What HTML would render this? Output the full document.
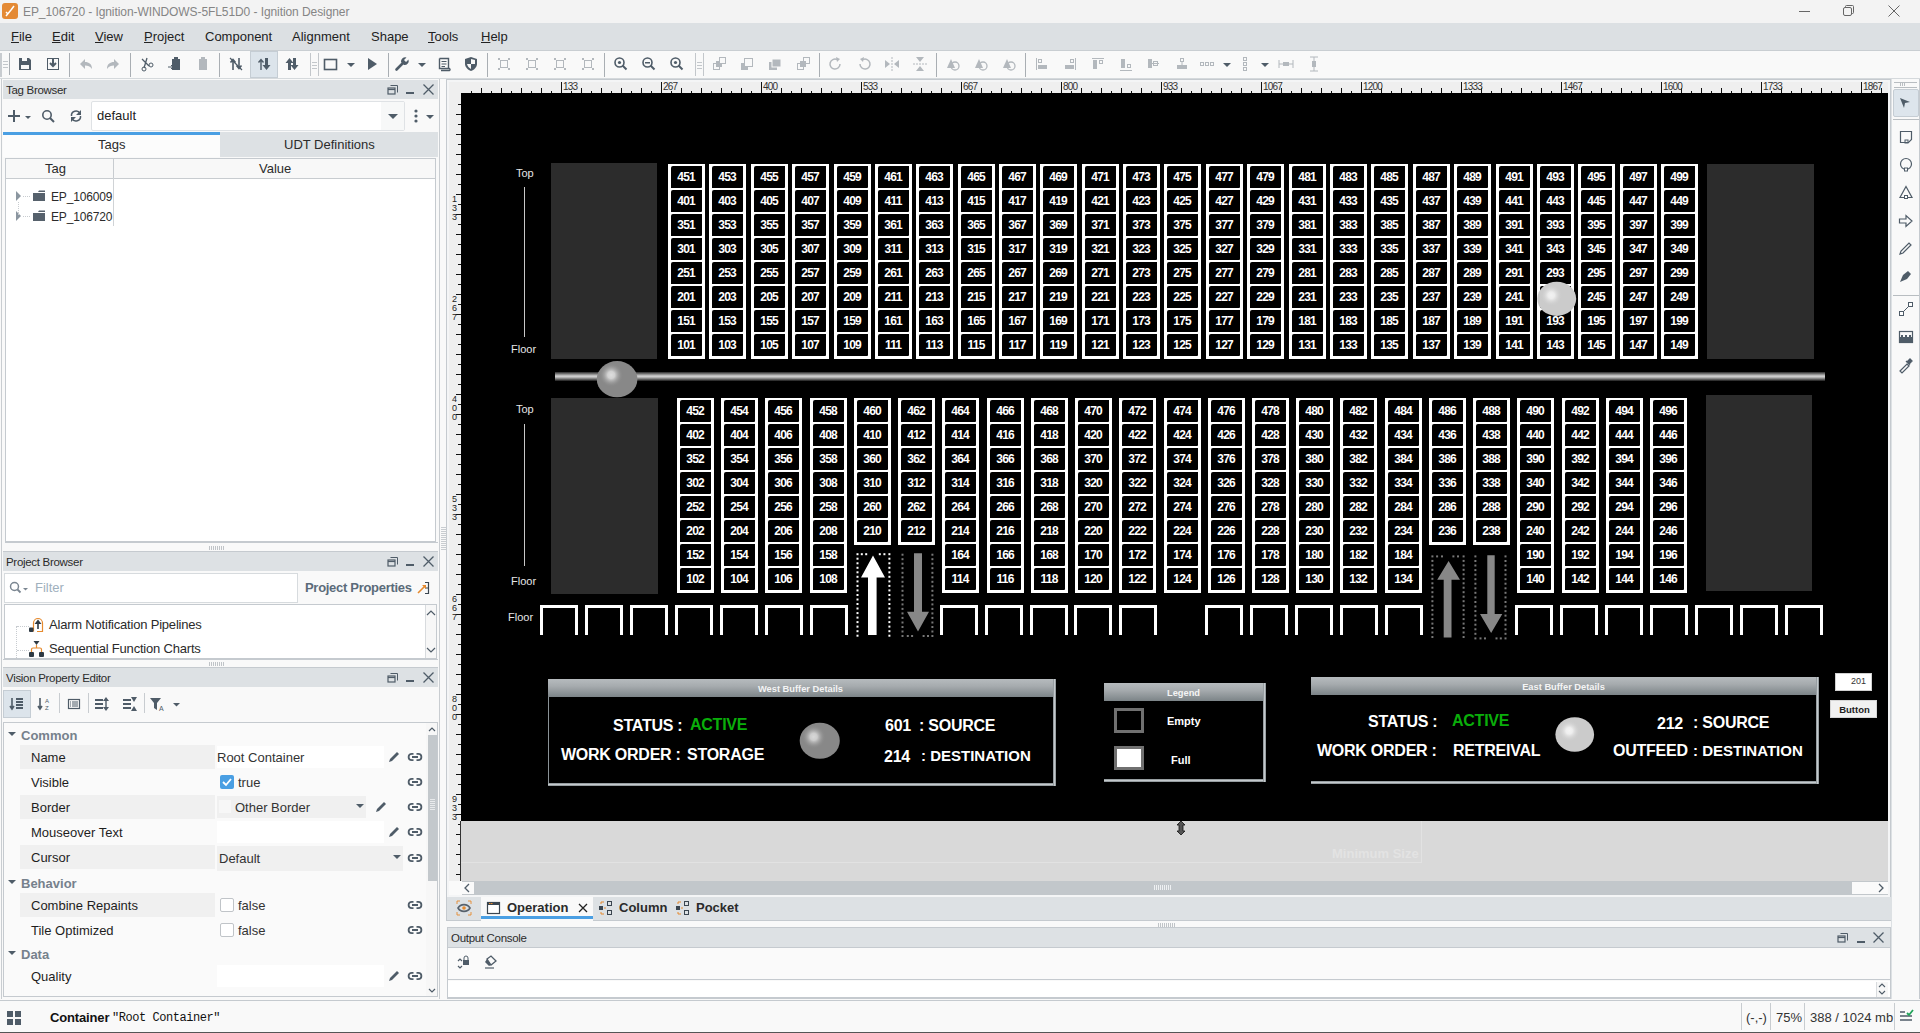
<!DOCTYPE html><html><head><meta charset="utf-8"><style>
*{box-sizing:border-box}
html,body{margin:0;padding:0}
body{width:1920px;height:1033px;overflow:hidden;position:relative;background:#f9f9f9;font-family:"Liberation Sans",sans-serif;color:#1e1e1e}
.a{position:absolute}
.t{white-space:nowrap;line-height:1}
svg{position:absolute;overflow:visible}
</style></head><body>
<div class="a" style="left:0px;top:0px;width:1920px;height:23px;background:#f3f3f3"></div>
<div class="a" style="left:2px;top:3px;width:16px;height:16px;background:#e48a35;border-radius:3px"></div>
<svg style="left:2px;top:3px" width="16" height="16"><path d="M4 13 L9 7 M9 7 L12 3 M6 11 L4 9" stroke="#fff" stroke-width="1.5" fill="none"/></svg>
<div class="a t" style="left:23px;top:6px;font-size:12px;color:#858585;letter-spacing:-0.08px">EP_106720 - Ignition-WINDOWS-5FL51D0 - Ignition Designer</div>
<div class="a" style="left:1799px;top:11px;width:11px;height:1px;background:#666"></div>
<svg style="left:1843px;top:5px" width="12" height="12"><rect x="0.5" y="2.5" width="8" height="8" rx="1.5" fill="none" stroke="#666"/><path d="M2.5 2.5 V1.5 Q2.5 0.5 3.5 0.5 H9.5 Q10.5 0.5 10.5 1.5 V7.5 Q10.5 8.5 9.5 8.5 H8.5" fill="none" stroke="#666"/></svg>
<svg style="left:1888px;top:5px" width="12" height="12"><path d="M0.5 0.5 L11.5 11.5 M11.5 0.5 L0.5 11.5" stroke="#666" stroke-width="1"/></svg>
<div class="a" style="left:0px;top:23px;width:1920px;height:27px;background:#dce0e3"></div>
<div class="a t" style="left:11px;top:30px;font-size:13px;color:#222"><u>F</u>ile</div>
<div class="a t" style="left:52px;top:30px;font-size:13px;color:#222"><u>E</u>dit</div>
<div class="a t" style="left:95px;top:30px;font-size:13px;color:#222"><u>V</u>iew</div>
<div class="a t" style="left:144px;top:30px;font-size:13px;color:#222"><u>P</u>roject</div>
<div class="a t" style="left:205px;top:30px;font-size:13px;color:#222">Component</div>
<div class="a t" style="left:292px;top:30px;font-size:13px;color:#222">Alignment</div>
<div class="a t" style="left:371px;top:30px;font-size:13px;color:#222">Shape</div>
<div class="a t" style="left:428px;top:30px;font-size:13px;color:#222"><u>T</u>ools</div>
<div class="a t" style="left:481px;top:30px;font-size:13px;color:#222"><u>H</u>elp</div>
<div class="a" style="left:0px;top:50px;width:1920px;height:1px;background:#c9ced2"></div>
<div class="a" style="left:0px;top:51px;width:1920px;height:28px;background:#f9f9f9"></div>
<div class="a" style="left:0px;top:78px;width:1920px;height:1px;background:#d5d9dc"></div>
<div class="a" style="left:0px;top:53px;width:2px;height:24px;background:#c8ccd0"></div>
<div class="a" style="left:3px;top:61px;width:5px;height:1px;background:#c3c7cb"></div>
<div class="a" style="left:3px;top:64px;width:5px;height:1px;background:#c3c7cb"></div>
<div class="a" style="left:3px;top:67px;width:5px;height:1px;background:#c3c7cb"></div>
<div class="a" style="left:9px;top:53px;width:1px;height:22px;background:#a9aeb3"></div>
<svg style="left:17px;top:56px" width="16" height="16"><path d="M2 2 H12 L14 4 V14 H2Z" fill="#4f5c68"/><rect x="5" y="2" width="5" height="3" fill="#f9f9f9"/><rect x="4" y="9" width="8" height="4" fill="#f9f9f9"/></svg>
<svg style="left:45px;top:56px" width="16" height="16"><rect x="2.5" y="2.5" width="11" height="11" fill="none" stroke="#4f5c68"/><path d="M8 3 V9 M5 7 L8 10 L11 7" stroke="#4f5c68" stroke-width="2" fill="none"/></svg>
<div class="a" style="left:69px;top:53px;width:1px;height:24px;background:#a9aeb3"></div>
<svg style="left:78px;top:56px" width="16" height="16"><path d="M2 8 L7 3 V6 C11 6 14 8 14 13 C12 10 10 9.5 7 9.5 V13Z" fill="#b3b8bd"/></svg>
<svg style="left:105px;top:56px" width="16" height="16"><path d="M14 8 L9 3 V6 C5 6 2 8 2 13 C4 10 6 9.5 9 9.5 V13Z" fill="#b3b8bd"/></svg>
<div class="a" style="left:130px;top:53px;width:1px;height:24px;background:#a9aeb3"></div>
<svg style="left:139px;top:56px" width="16" height="16"><path d="M3 3 L10 10 M8 2 L5 12" stroke="#4f5c68" stroke-width="1.3"/><circle cx="12" cy="9" r="2" fill="none" stroke="#4f5c68"/><circle cx="5" cy="13" r="2" fill="none" stroke="#4f5c68"/></svg>
<svg style="left:167px;top:56px" width="16" height="16"><path d="M5 3 H13 V14 H5Z M7 1 H11 V4 H7Z" fill="#4f5c68"/><path d="M1 11 H6 M4 9 L6 11 L4 13" stroke="#4f5c68" fill="none"/></svg>
<svg style="left:195px;top:56px" width="16" height="16"><path d="M4 3 H12 V14 H4Z M6 1 H10 V4 H6Z" fill="#b3b8bd"/></svg>
<div class="a" style="left:219px;top:53px;width:1px;height:24px;background:#a9aeb3"></div>
<svg style="left:228px;top:56px" width="16" height="16"><path d="M5 14 V4 M2.5 6.5 L5 3.5 L7.5 6.5 M11 2 V12 M8.5 9.5 L11 12.5 L13.5 9.5" fill="none" stroke="#4f5c68" stroke-width="1.6"/><path d="M2 2 L14 14" stroke="#4f5c68" stroke-width="1.3"/></svg>
<div class="a" style="left:250px;top:51px;width:28px;height:27px;background:#dce4eb;border:1px solid #c5cdd4"></div>
<svg style="left:256px;top:56px" width="16" height="16"><path d="M5 14 V4 M2.5 6.5 L5 3.5 L7.5 6.5" fill="none" stroke="#4f5c68" stroke-width="1.4"/><path d="M9 2 H12 V9 H14.5 L10.5 14 L6.5 9 H9Z" fill="#4f5c68"/></svg>
<svg style="left:284px;top:56px" width="16" height="16"><path d="M4 14 H7 V7 H9.5 L5.5 2 L1.5 7 H4Z" fill="#4f5c68"/><path d="M9 2 H12 V9 H14.5 L10.5 14 L6.5 9 H9Z" fill="#4f5c68"/></svg>
<div class="a" style="left:310px;top:53px;width:1px;height:23px;background:#c3c7cb"></div>
<div class="a" style="left:318px;top:53px;width:1px;height:23px;background:#c3c7cb"></div>
<div class="a" style="left:312px;top:62px;width:5px;height:1px;background:#c3c7cb"></div>
<div class="a" style="left:312px;top:65px;width:5px;height:1px;background:#c3c7cb"></div>
<div class="a" style="left:312px;top:68px;width:5px;height:1px;background:#c3c7cb"></div>
<svg style="left:323px;top:56px" width="16" height="16"><rect x="1.5" y="3.5" width="12" height="10" fill="none" stroke="#4f5c68" stroke-width="1.6"/></svg>
<svg style="left:343px;top:57px" width="16" height="16"><path d="M4 6 H12 L8 10Z" fill="#4f5c68"/></svg>
<svg style="left:364px;top:56px" width="16" height="16"><path d="M4 2 L13 8 L4 14Z" fill="#4f5c68"/></svg>
<div class="a" style="left:388px;top:53px;width:1px;height:24px;background:#a9aeb3"></div>
<svg style="left:394px;top:56px" width="16" height="16"><path d="M2.5 13.5 L8.5 7.5" stroke="#4f5c68" stroke-width="2.6" stroke-linecap="round"/><path d="M7 6 A4.2 4.2 0 0 1 12.5 1.5 L10 4 L12 6 L14.5 3.5 A4.2 4.2 0 0 1 10 9Z" fill="#4f5c68"/></svg>
<svg style="left:414px;top:57px" width="16" height="16"><path d="M4 6 H12 L8 10Z" fill="#4f5c68"/></svg>
<svg style="left:436px;top:56px" width="16" height="16"><path d="M3.5 2.5 H12.5 V12.5 M3.5 2.5 V12.5 H13.5 A1.2 1.2 0 0 1 13.5 14.5 H5" fill="none" stroke="#4f5c68" stroke-width="1.4"/><path d="M5.5 5.5 H10.5 M5.5 8 H10.5 M5.5 10.5 H9" stroke="#4f5c68" stroke-width="1"/></svg>
<svg style="left:463px;top:56px" width="16" height="16"><path d="M8 1 L14 3 V8 C14 11 11 14 8 15 C5 14 2 11 2 8 V3Z" fill="#4f5c68"/><path d="M8 3 V8 H12 V4Z M4 8 H8 V13 C6 12 4.5 10 4 8Z" fill="#f9f9f9"/></svg>
<div class="a" style="left:487px;top:53px;width:1px;height:24px;background:#a9aeb3"></div>
<svg style="left:496px;top:56px" width="16" height="16"><path d="M2 2h2v2h-2zM12 2h2v2h-2zM2 12h2v2h-2zM12 12h2v2h-2z" fill="#b3b8bd"/><rect x="4.5" y="4.5" width="7" height="7" fill="none" stroke="#b3b8bd"/></svg>
<svg style="left:524px;top:56px" width="16" height="16"><path d="M2 2h2v2h-2zM12 2h2v2h-2zM2 12h2v2h-2zM12 12h2v2h-2z" fill="#b3b8bd"/><rect x="4.5" y="4.5" width="7" height="7" fill="none" stroke="#b3b8bd"/></svg>
<svg style="left:552px;top:56px" width="16" height="16"><path d="M2 2h2v2h-2zM12 2h2v2h-2zM2 12h2v2h-2zM12 12h2v2h-2z" fill="#b3b8bd"/><rect x="4.5" y="4.5" width="7" height="7" fill="none" stroke="#b3b8bd"/></svg>
<svg style="left:580px;top:56px" width="16" height="16"><path d="M2 2h2v2h-2zM12 2h2v2h-2zM2 12h2v2h-2zM12 12h2v2h-2z" fill="#b3b8bd"/><rect x="4.5" y="4.5" width="7" height="7" fill="none" stroke="#b3b8bd"/></svg>
<div class="a" style="left:604px;top:53px;width:1px;height:24px;background:#a9aeb3"></div>
<svg style="left:613px;top:56px" width="16" height="16"><circle cx="6.5" cy="6.5" r="4.5" fill="none" stroke="#4f5c68" stroke-width="1.6"/><path d="M9.5 9.5 L13.5 13.5" stroke="#4f5c68" stroke-width="2"/><circle cx="6.5" cy="6.5" r="1.6" fill="#4f5c68"/></svg>
<svg style="left:641px;top:56px" width="16" height="16"><circle cx="6.5" cy="6.5" r="4.5" fill="none" stroke="#4f5c68" stroke-width="1.6"/><path d="M9.5 9.5 L13.5 13.5" stroke="#4f5c68" stroke-width="2"/><rect x="4" y="6" width="5" height="1.5" fill="#4f5c68"/></svg>
<svg style="left:669px;top:56px" width="16" height="16"><circle cx="6.5" cy="6.5" r="4.5" fill="none" stroke="#4f5c68" stroke-width="1.6"/><path d="M9.5 9.5 L13.5 13.5" stroke="#4f5c68" stroke-width="2"/><circle cx="6.5" cy="6.5" r="1.6" fill="#4f5c68"/></svg>
<div class="a" style="left:695px;top:53px;width:1px;height:23px;background:#c3c7cb"></div>
<div class="a" style="left:703px;top:53px;width:1px;height:23px;background:#c3c7cb"></div>
<div class="a" style="left:697px;top:62px;width:5px;height:1px;background:#c3c7cb"></div>
<div class="a" style="left:697px;top:65px;width:5px;height:1px;background:#c3c7cb"></div>
<div class="a" style="left:697px;top:68px;width:5px;height:1px;background:#c3c7cb"></div>
<svg style="left:711px;top:56px" width="16" height="16"><rect x="2.5" y="7.5" width="6" height="6" fill="none" stroke="#b3b8bd"/><rect x="5" y="5" width="6" height="6" fill="#b3b8bd"/><rect x="8.5" y="1.5" width="6" height="6" fill="#f9f9f9" stroke="#b3b8bd"/></svg>
<svg style="left:739px;top:56px" width="16" height="16"><rect x="2" y="7" width="7" height="7" fill="#b3b8bd"/><rect x="5.5" y="2.5" width="8" height="8" fill="#f9f9f9" stroke="#b3b8bd"/></svg>
<svg style="left:767px;top:56px" width="16" height="16"><rect x="2" y="6" width="8" height="8" fill="#b3b8bd"/><rect x="5" y="3" width="9" height="8" fill="#b3b8bd" stroke="#f9f9f9"/></svg>
<svg style="left:795px;top:56px" width="16" height="16"><rect x="2.5" y="7.5" width="6" height="6" fill="none" stroke="#b3b8bd"/><rect x="5" y="5" width="6" height="6" fill="#b3b8bd"/><rect x="8.5" y="1.5" width="6" height="6" fill="none" stroke="#b3b8bd"/></svg>
<div class="a" style="left:819px;top:53px;width:1px;height:24px;background:#a9aeb3"></div>
<svg style="left:828px;top:56px" width="16" height="16"><path d="M12 8 A5 5 0 1 1 9 3.5" stroke="#b3b8bd" stroke-width="1.5" fill="none"/><path d="M8 1 L12 3 L9 6Z" fill="#b3b8bd"/></svg>
<svg style="left:856px;top:56px" width="16" height="16"><path d="M4 8 A5 5 0 1 0 7 3.5" stroke="#b3b8bd" stroke-width="1.5" fill="none"/><path d="M8 1 L4 3 L7 6Z" fill="#b3b8bd"/></svg>
<svg style="left:884px;top:56px" width="16" height="16"><path d="M8 1 V15" stroke="#b3b8bd" stroke-dasharray="2 1"/><path d="M1 4 L6 8 L1 12Z M15 4 L10 8 L15 12Z" fill="#b3b8bd"/></svg>
<svg style="left:912px;top:56px" width="16" height="16"><path d="M1 8 H15" stroke="#b3b8bd" stroke-dasharray="2 1"/><path d="M4 1 L8 6 L12 1Z M4 15 L8 10 L12 15Z" fill="#b3b8bd"/></svg>
<div class="a" style="left:936px;top:53px;width:1px;height:24px;background:#a9aeb3"></div>
<svg style="left:945px;top:56px" width="16" height="16"><path d="M2 12 L6 3 L10 12Z" fill="#b3b8bd"/><circle cx="10" cy="10" r="4" fill="none" stroke="#b3b8bd" stroke-width="1.3"/></svg>
<svg style="left:973px;top:56px" width="16" height="16"><path d="M2 12 L6 3 L10 12Z" fill="#b3b8bd"/><circle cx="10" cy="10" r="4" fill="none" stroke="#b3b8bd" stroke-width="1.3"/></svg>
<svg style="left:1001px;top:56px" width="16" height="16"><path d="M2 12 L6 3 L10 12Z" fill="#b3b8bd"/><circle cx="10" cy="10" r="4" fill="none" stroke="#b3b8bd" stroke-width="1.3"/></svg>
<div class="a" style="left:1025px;top:53px;width:1px;height:24px;background:#a9aeb3"></div>
<svg style="left:1034px;top:56px" width="16" height="16"><rect x="2" y="2" width="1" height="12" fill="#b3b8bd"/><rect x="4.5" y="3.5" width="3" height="3" fill="none" stroke="#b3b8bd"/><rect x="4" y="9" width="9" height="4" fill="#b3b8bd"/></svg>
<svg style="left:1062px;top:56px" width="16" height="16"><rect x="13" y="2" width="1" height="12" fill="#b3b8bd"/><rect x="8.5" y="3.5" width="3" height="3" fill="none" stroke="#b3b8bd"/><rect x="3" y="9" width="9" height="4" fill="#b3b8bd"/></svg>
<svg style="left:1090px;top:56px" width="16" height="16"><rect x="2" y="2" width="12" height="1" fill="#b3b8bd"/><rect x="3" y="4" width="4" height="9" fill="#b3b8bd"/><rect x="9.5" y="4.5" width="3" height="3" fill="none" stroke="#b3b8bd"/></svg>
<svg style="left:1118px;top:56px" width="16" height="16"><rect x="2" y="14" width="12" height="1" fill="#b3b8bd"/><rect x="3" y="3" width="4" height="9" fill="#b3b8bd"/><rect x="9.5" y="8.5" width="3" height="3" fill="none" stroke="#b3b8bd"/></svg>
<svg style="left:1146px;top:56px" width="16" height="16"><rect x="2" y="3" width="4" height="9" fill="#b3b8bd"/><rect x="7.5" y="5.5" width="4" height="4" fill="none" stroke="#b3b8bd"/><path d="M6 7.5 H13" stroke="#b3b8bd"/></svg>
<svg style="left:1174px;top:56px" width="16" height="16"><rect x="6.5" y="2.5" width="3" height="3" fill="none" stroke="#b3b8bd"/><rect x="3" y="9" width="10" height="4" fill="#b3b8bd"/><path d="M8 5 V9" stroke="#b3b8bd"/></svg>
<svg style="left:1199px;top:56px" width="16" height="16"><rect x="1.5" y="6.5" width="3" height="3" fill="none" stroke="#b3b8bd"/><rect x="6.5" y="6.5" width="3" height="3" fill="none" stroke="#b3b8bd"/><rect x="11.5" y="6.5" width="3" height="3" fill="none" stroke="#b3b8bd"/></svg>
<svg style="left:1219px;top:57px" width="16" height="16"><path d="M4 6 H12 L8 10Z" fill="#4f5c68"/></svg>
<svg style="left:1237px;top:56px" width="16" height="16"><rect x="6.5" y="1.5" width="3" height="3" fill="none" stroke="#b3b8bd"/><rect x="6.5" y="6.5" width="3" height="3" fill="none" stroke="#b3b8bd"/><rect x="6.5" y="11.5" width="3" height="3" fill="none" stroke="#b3b8bd"/></svg>
<svg style="left:1257px;top:57px" width="16" height="16"><path d="M4 6 H12 L8 10Z" fill="#4f5c68"/></svg>
<svg style="left:1278px;top:56px" width="16" height="16"><path d="M1 4 V12 M15 4 V12 M1 8 H15" stroke="#b3b8bd"/><rect x="5" y="6" width="6" height="4" fill="#b3b8bd"/></svg>
<svg style="left:1306px;top:56px" width="16" height="16"><path d="M4 1 H12 M4 15 H12 M8 1 V15" stroke="#b3b8bd"/><rect x="6" y="5" width="4" height="6" fill="#b3b8bd"/></svg>
<div class="a" style="left:1px;top:79px;width:1px;height:920px;background:#c9cdd1"></div>
<div class="a" style="left:439px;top:79px;width:1px;height:920px;background:#c9cdd1"></div>
<div class="a" style="left:3px;top:80px;width:435px;height:19px;background:#dde1e4"></div>
<div class="a t" style="left:6px;top:85px;font-size:11.5px;color:#2b2b2b;letter-spacing:-0.3px">Tag Browser</div>
<svg style="left:387px;top:84px" width="12" height="12"><rect x="1" y="4" width="7" height="6" fill="none" stroke="#4f5c68" stroke-width="1.2"/><path d="M1 5.5 H8" stroke="#4f5c68" stroke-width="1.2"/><path d="M3.5 1.5 H10.5 V8.5" fill="none" stroke="#4f5c68"/></svg>
<div class="a" style="left:406px;top:92px;width:8px;height:2px;background:#4f5c68"></div>
<svg style="left:423px;top:84px" width="11" height="11"><path d="M0.5 0.5 L10.5 10.5 M10.5 0.5 L0.5 10.5" stroke="#4f5c68" stroke-width="1.3"/></svg>
<svg style="left:6px;top:108px" width="16" height="16"><path d="M7 2 H9 V7 H14 V9 H9 V14 H7 V9 H2 V7 H7Z" fill="#4f5c68"/></svg>
<svg style="left:20px;top:109px" width="16" height="16"><path d="M5 7 H11 L8 10Z" fill="#4f5c68"/></svg>
<svg style="left:40px;top:108px" width="16" height="16"><circle cx="7" cy="7" r="4.2" fill="none" stroke="#4f5c68" stroke-width="1.6"/><path d="M10 10 L14 14" stroke="#4f5c68" stroke-width="2"/></svg>
<svg style="left:68px;top:108px" width="16" height="16"><path d="M3.5 8 A4.5 4.5 0 0 1 12 5.5 M12.5 8 A4.5 4.5 0 0 1 4 10.5" fill="none" stroke="#4f5c68" stroke-width="1.5"/><path d="M13 2 V7 H8Z M3 14 V9 H8Z" fill="#4f5c68"/></svg>
<div class="a" style="left:91px;top:101px;width:314px;height:30px;background:#fff;border:1px solid #dfe2e5;border-radius:2px"></div>
<div class="a t" style="left:97px;top:109px;font-size:13px;color:#222">default</div>
<div class="a" style="left:381px;top:102px;width:23px;height:28px;background:#f7f8f8"></div>
<svg style="left:385px;top:108px" width="16" height="16"><path d="M3 6 H13 L8 11Z" fill="#4f5c68"/></svg>
<svg style="left:408px;top:108px" width="16" height="16"><circle cx="8" cy="3" r="1.6" fill="#4f5c68"/><circle cx="8" cy="8" r="1.6" fill="#4f5c68"/><circle cx="8" cy="13" r="1.6" fill="#4f5c68"/></svg>
<svg style="left:422px;top:109px" width="16" height="16"><path d="M4 6 H12 L8 10Z" fill="#4f5c68"/></svg>
<div class="a" style="left:3px;top:132px;width:217px;height:3px;background:#4a9fe3"></div>
<div class="a" style="left:3px;top:135px;width:217px;height:22px;background:#fcfcfc"></div>
<div class="a t" style="left:98px;top:138px;font-size:13px;color:#2b2b2b">Tags</div>
<div class="a" style="left:220px;top:132px;width:218px;height:25px;background:#dde1e4"></div>
<div class="a t" style="left:284px;top:138px;font-size:13px;color:#2b2b2b">UDT Definitions</div>
<div class="a" style="left:5px;top:158px;width:431px;height:384px;background:#fff;border:1px solid #c5cacf"></div>
<div class="a" style="left:6px;top:159px;width:429px;height:20px;background:#f8f8f8;border-bottom:1px solid #c8ccd0"></div>
<div class="a" style="left:113px;top:159px;width:1px;height:20px;background:#c8ccd0"></div>
<div class="a" style="left:113px;top:178px;width:1px;height:48px;background:#d0d3d6"></div>
<div class="a t" style="left:45px;top:162px;font-size:13px;color:#2b2b2b">Tag</div>
<div class="a t" style="left:259px;top:162px;font-size:13px;color:#2b2b2b">Value</div>
<svg style="left:15px;top:191px" width="8" height="10"><path d="M1 0 L6 5 L1 10Z" fill="#8b96a0"/></svg>
<div class="a" style="left:23px;top:196px;width:7px;height:1px;border-top:1px dotted #c8ccd0"></div>
<svg style="left:32px;top:189px" width="14" height="13"><path d="M1 3 H6 L7 1.5 H13 V3 H1Z" fill="#56616c"/><rect x="1" y="4" width="12" height="8" fill="#56616c"/></svg>
<div class="a t" style="left:51px;top:191px;font-size:12px;color:#2b2b2b;letter-spacing:-0.15px">EP_106009</div>
<svg style="left:15px;top:211px" width="8" height="10"><path d="M1 0 L6 5 L1 10Z" fill="#8b96a0"/></svg>
<div class="a" style="left:23px;top:216px;width:7px;height:1px;border-top:1px dotted #c8ccd0"></div>
<svg style="left:32px;top:209px" width="14" height="13"><path d="M1 3 H6 L7 1.5 H13 V3 H1Z" fill="#56616c"/><rect x="1" y="4" width="12" height="8" fill="#56616c"/></svg>
<div class="a t" style="left:51px;top:211px;font-size:12px;color:#2b2b2b;letter-spacing:-0.15px">EP_106720</div>
<div class="a" style="left:18px;top:202px;width:1px;height:13px;border-left:1px dotted #c8ccd0"></div>
<div class="a" style="left:5px;top:542px;width:433px;height:1px;background:#c5cacf"></div>
<div class="a" style="left:209px;top:546px;width:1px;height:4px;background:#c0c4c8"></div>
<div class="a" style="left:211px;top:546px;width:1px;height:4px;background:#c0c4c8"></div>
<div class="a" style="left:213px;top:546px;width:1px;height:4px;background:#c0c4c8"></div>
<div class="a" style="left:215px;top:546px;width:1px;height:4px;background:#c0c4c8"></div>
<div class="a" style="left:217px;top:546px;width:1px;height:4px;background:#c0c4c8"></div>
<div class="a" style="left:219px;top:546px;width:1px;height:4px;background:#c0c4c8"></div>
<div class="a" style="left:221px;top:546px;width:1px;height:4px;background:#c0c4c8"></div>
<div class="a" style="left:223px;top:546px;width:1px;height:4px;background:#c0c4c8"></div>
<div class="a" style="left:441px;top:527px;width:5px;height:1px;background:#c8ccd0"></div>
<div class="a" style="left:441px;top:529px;width:5px;height:1px;background:#c8ccd0"></div>
<div class="a" style="left:441px;top:531px;width:5px;height:1px;background:#c8ccd0"></div>
<div class="a" style="left:441px;top:533px;width:5px;height:1px;background:#c8ccd0"></div>
<div class="a" style="left:441px;top:535px;width:5px;height:1px;background:#c8ccd0"></div>
<div class="a" style="left:441px;top:537px;width:5px;height:1px;background:#c8ccd0"></div>
<div class="a" style="left:441px;top:539px;width:5px;height:1px;background:#c8ccd0"></div>
<div class="a" style="left:441px;top:541px;width:5px;height:1px;background:#c8ccd0"></div>
<div class="a" style="left:441px;top:543px;width:5px;height:1px;background:#c8ccd0"></div>
<div class="a" style="left:441px;top:545px;width:5px;height:1px;background:#c8ccd0"></div>
<div class="a" style="left:441px;top:547px;width:5px;height:1px;background:#c8ccd0"></div>
<div class="a" style="left:441px;top:549px;width:5px;height:1px;background:#c8ccd0"></div>
<div class="a" style="left:3px;top:551px;width:435px;height:1px;background:#c5cacf"></div>
<div class="a" style="left:3px;top:552px;width:435px;height:19px;background:#dde1e4"></div>
<div class="a t" style="left:6px;top:557px;font-size:11.5px;color:#2b2b2b;letter-spacing:-0.3px">Project Browser</div>
<svg style="left:387px;top:556px" width="12" height="12"><rect x="1" y="4" width="7" height="6" fill="none" stroke="#4f5c68" stroke-width="1.2"/><path d="M1 5.5 H8" stroke="#4f5c68" stroke-width="1.2"/><path d="M3.5 1.5 H10.5 V8.5" fill="none" stroke="#4f5c68"/></svg>
<div class="a" style="left:406px;top:564px;width:8px;height:2px;background:#4f5c68"></div>
<svg style="left:423px;top:556px" width="11" height="11"><path d="M0.5 0.5 L10.5 10.5 M10.5 0.5 L0.5 10.5" stroke="#4f5c68" stroke-width="1.3"/></svg>
<div class="a" style="left:4px;top:573px;width:294px;height:30px;background:#fff;border:1px solid #d7dbde"></div>
<svg style="left:8px;top:580px" width="16" height="16"><circle cx="6.5" cy="6.5" r="4" fill="none" stroke="#7b8691" stroke-width="1.5"/><path d="M9.5 9.5 L12.5 12.5" stroke="#7b8691" stroke-width="1.8"/></svg>
<svg style="left:18px;top:581px" width="16" height="16"><path d="M5 7 H10 L7.5 9.5Z" fill="#7b8691"/></svg>
<div class="a t" style="left:35px;top:581px;font-size:13px;color:#9fb0bd">Filter</div>
<div class="a t" style="left:305px;top:581px;font-size:13px;font-weight:bold;color:#5b6b79;letter-spacing:-0.3px">Project Properties</div>
<svg style="left:416px;top:580px" width="16" height="16"><path d="M9 2.5 H12.5 V13.5 H9 M9 8 H12.5" fill="none" stroke="#3b4650" stroke-width="1.2"/><path d="M2 13 L9 6" stroke="#e68a2e" stroke-width="1.6"/><path d="M6 5 H10 V9Z" fill="#e68a2e"/></svg>
<div class="a" style="left:4px;top:604px;width:433px;height:55px;background:#fff;border:1px solid #c5cacf"></div>
<div class="a" style="left:425px;top:605px;width:11px;height:53px;background:#f7f7f7;border-left:1px solid #d8dbde"></div>
<svg style="left:423px;top:605px" width="16" height="16"><path d="M4 10 L8 6 L12 10" fill="none" stroke="#4f5c68" stroke-width="1.2"/></svg>
<svg style="left:423px;top:642px" width="16" height="16"><path d="M4 6 L8 10 L12 6" fill="none" stroke="#4f5c68" stroke-width="1.2"/></svg>
<div class="a" style="left:17px;top:626px;width:12px;height:1px;border-top:1px dotted #c8ccd0"></div>
<div class="a" style="left:17px;top:650px;width:12px;height:1px;border-top:1px dotted #c8ccd0"></div>
<div class="a" style="left:16px;top:626px;width:1px;height:32px;border-left:1px dotted #c8ccd0"></div>
<svg style="left:28px;top:615px" width="18" height="18"><path d="M5.5 16.5 V8 A4.5 4.5 0 0 1 14.5 8 V16.5 H9" fill="none" stroke="#e68a2e" stroke-width="1.2"/><path d="M10 4.5 L6.5 9 H13.5Z M9.2 9 H10.8 V14 H9.2Z" fill="#2e3a44"/><rect x="1" y="12.5" width="4.5" height="4.5" rx="1" fill="#2e3a44"/></svg>
<div class="a t" style="left:49px;top:618px;font-size:13px;color:#2b2b2b;letter-spacing:-0.2px">Alarm Notification Pipelines</div>
<svg style="left:28px;top:640px" width="18" height="18"><path d="M5.5 1 H11.5 L8.5 5Z" fill="#2e3a44"/><path d="M8.5 5 V8 M3.5 12 V9.5 Q3.5 8 5 8 H12 Q13.5 8 13.5 9.5 V12" fill="none" stroke="#e68a2e" stroke-width="1.2"/><rect x="1" y="12" width="5" height="5" rx="1" fill="#2e3a44"/><rect x="11" y="12" width="5" height="5" rx="1" fill="#2e3a44"/></svg>
<div class="a t" style="left:49px;top:642px;font-size:13px;color:#2b2b2b;letter-spacing:-0.2px">Sequential Function Charts</div>
<div class="a" style="left:3px;top:659px;width:435px;height:1px;background:#c5cacf"></div>
<div class="a" style="left:209px;top:662px;width:1px;height:4px;background:#c0c4c8"></div>
<div class="a" style="left:211px;top:662px;width:1px;height:4px;background:#c0c4c8"></div>
<div class="a" style="left:213px;top:662px;width:1px;height:4px;background:#c0c4c8"></div>
<div class="a" style="left:215px;top:662px;width:1px;height:4px;background:#c0c4c8"></div>
<div class="a" style="left:217px;top:662px;width:1px;height:4px;background:#c0c4c8"></div>
<div class="a" style="left:219px;top:662px;width:1px;height:4px;background:#c0c4c8"></div>
<div class="a" style="left:221px;top:662px;width:1px;height:4px;background:#c0c4c8"></div>
<div class="a" style="left:223px;top:662px;width:1px;height:4px;background:#c0c4c8"></div>
<div class="a" style="left:3px;top:667px;width:435px;height:1px;background:#c5cacf"></div>
<div class="a" style="left:3px;top:668px;width:435px;height:19px;background:#dde1e4"></div>
<div class="a t" style="left:6px;top:673px;font-size:11.5px;color:#2b2b2b;letter-spacing:-0.3px">Vision Property Editor</div>
<svg style="left:387px;top:672px" width="12" height="12"><rect x="1" y="4" width="7" height="6" fill="none" stroke="#4f5c68" stroke-width="1.2"/><path d="M1 5.5 H8" stroke="#4f5c68" stroke-width="1.2"/><path d="M3.5 1.5 H10.5 V8.5" fill="none" stroke="#4f5c68"/></svg>
<div class="a" style="left:406px;top:680px;width:8px;height:2px;background:#4f5c68"></div>
<svg style="left:423px;top:672px" width="11" height="11"><path d="M0.5 0.5 L10.5 10.5 M10.5 0.5 L0.5 10.5" stroke="#4f5c68" stroke-width="1.3"/></svg>
<div class="a" style="left:3px;top:690px;width:28px;height:28px;background:#dce4eb;border:1px solid #c5cdd4"></div>
<svg style="left:9px;top:696px" width="16" height="16"><path d="M3 2 V13 M1 10 L3 13 L5 10" fill="none" stroke="#4f5c68" stroke-width="1.6"/><path d="M7 3 H14 M7 6 H14 M7 9 H14 M7 12 H14" stroke="#4f5c68" stroke-width="1.8"/></svg>
<svg style="left:37px;top:696px" width="16" height="16"><path d="M3 2 V13 M1 10 L3 13 L5 10" fill="none" stroke="#4f5c68" stroke-width="1.6"/><text x="8" y="7" font-size="6" fill="#4f5c68" font-family="Liberation Sans">A</text><text x="8" y="14" font-size="6" fill="#4f5c68" font-family="Liberation Sans">Z</text></svg>
<div class="a" style="left:59px;top:693px;width:1px;height:20px;background:#c8ccd0"></div>
<svg style="left:66px;top:696px" width="16" height="16"><rect x="2.5" y="3.5" width="11" height="9" fill="none" stroke="#4f5c68" stroke-width="1.2"/><path d="M4 6 H5 M6 6 H12 M4 8 H5 M6 8 H12 M4 10 H5 M6 10 H12" stroke="#4f5c68"/></svg>
<div class="a" style="left:88px;top:693px;width:1px;height:20px;background:#c8ccd0"></div>
<svg style="left:94px;top:696px" width="16" height="16"><path d="M1 4 H9 M1 8 H9 M1 12 H9" stroke="#4f5c68" stroke-width="1.8"/><path d="M12 1 L15 5 H9Z M12 15 L15 11 H9Z M11.3 5 H12.7 V11 H11.3Z" fill="#4f5c68"/></svg>
<svg style="left:122px;top:696px" width="16" height="16"><path d="M1 4 H9 M1 8 H9 M1 12 H9" stroke="#4f5c68" stroke-width="1.8"/><path d="M9 1 H15 L12 6Z M9 15 H15 L12 10Z" fill="#4f5c68"/></svg>
<div class="a" style="left:144px;top:693px;width:1px;height:20px;background:#c8ccd0"></div>
<svg style="left:149px;top:696px" width="16" height="16"><path d="M1 2 H12 L8 7 V14 L5 12 V7Z" fill="#4f5c68"/><text x="10" y="15" font-size="7" fill="#4f5c68" font-family="Liberation Sans">A</text></svg>
<svg style="left:169px;top:697px" width="16" height="16"><path d="M4 6 H11 L7.5 9.5Z" fill="#4f5c68"/></svg>
<div class="a" style="left:3px;top:722px;width:435px;height:275px;background:#fafafa;border:1px solid #c5cacf"></div>
<svg style="left:5px;top:727px" width="16" height="16"><path d="M3 5 H11 L7 9Z" fill="#4f5c68"/></svg>
<div class="a t" style="left:21px;top:729px;font-size:13px;font-weight:bold;color:#76818c">Common</div>
<div class="a" style="left:20px;top:745px;width:195px;height:24px;background:#f0f0f0"></div>
<div class="a t" style="left:31px;top:751px;font-size:13px;color:#1e1e1e">Name</div>
<div class="a" style="left:217px;top:746px;width:167px;height:22px;background:#fff"></div>
<div class="a t" style="left:217px;top:751px;font-size:13px;color:#333">Root Container</div>
<svg style="left:386px;top:749px" width="16" height="16"><path d="M3 13 L4 10 L11 3 L13 5 L6 12Z" fill="#4f5c68"/></svg>
<svg style="left:407px;top:749px" width="16" height="16"><path d="M6.5 4.8 H4.8 A3.2 3.2 0 0 0 4.8 11.2 H6.5 M9.5 4.8 H11.2 A3.2 3.2 0 0 1 11.2 11.2 H9.5 M5 8 H11" fill="none" stroke="#4f5c68" stroke-width="1.8"/></svg>
<div class="a t" style="left:31px;top:776px;font-size:13px;color:#1e1e1e">Visible</div>
<div class="a" style="left:220px;top:775px;width:14px;height:14px;background:#4a9fe3;border-radius:2px"></div>
<svg style="left:219px;top:774px" width="16" height="16"><path d="M4 8 L7 11 L12 5" fill="none" stroke="#fff" stroke-width="1.8"/></svg>
<div class="a t" style="left:238px;top:776px;font-size:13px;color:#333">true</div>
<svg style="left:407px;top:774px" width="16" height="16"><path d="M6.5 4.8 H4.8 A3.2 3.2 0 0 0 4.8 11.2 H6.5 M9.5 4.8 H11.2 A3.2 3.2 0 0 1 11.2 11.2 H9.5 M5 8 H11" fill="none" stroke="#4f5c68" stroke-width="1.8"/></svg>
<div class="a" style="left:20px;top:795px;width:195px;height:24px;background:#f0f0f0"></div>
<div class="a t" style="left:31px;top:801px;font-size:13px;color:#1e1e1e">Border</div>
<div class="a" style="left:217px;top:796px;width:149px;height:22px;background:#f0f0f0"></div>
<div class="a" style="left:219px;top:800px;width:12px;height:13px;background:#f7f7f7"></div>
<div class="a t" style="left:235px;top:801px;font-size:13px;color:#333">Other Border</div>
<svg style="left:353px;top:799px" width="16" height="16"><path d="M3 5 H11 L7 9Z" fill="#4f5c68"/></svg>
<svg style="left:373px;top:799px" width="16" height="16"><path d="M3 13 L4 10 L11 3 L13 5 L6 12Z" fill="#4f5c68"/></svg>
<svg style="left:407px;top:799px" width="16" height="16"><path d="M6.5 4.8 H4.8 A3.2 3.2 0 0 0 4.8 11.2 H6.5 M9.5 4.8 H11.2 A3.2 3.2 0 0 1 11.2 11.2 H9.5 M5 8 H11" fill="none" stroke="#4f5c68" stroke-width="1.8"/></svg>
<div class="a t" style="left:31px;top:826px;font-size:13px;color:#1e1e1e">Mouseover Text</div>
<div class="a" style="left:217px;top:821px;width:167px;height:22px;background:#fff"></div>
<svg style="left:386px;top:824px" width="16" height="16"><path d="M3 13 L4 10 L11 3 L13 5 L6 12Z" fill="#4f5c68"/></svg>
<svg style="left:407px;top:824px" width="16" height="16"><path d="M6.5 4.8 H4.8 A3.2 3.2 0 0 0 4.8 11.2 H6.5 M9.5 4.8 H11.2 A3.2 3.2 0 0 1 11.2 11.2 H9.5 M5 8 H11" fill="none" stroke="#4f5c68" stroke-width="1.8"/></svg>
<div class="a" style="left:20px;top:845px;width:195px;height:24px;background:#f0f0f0"></div>
<div class="a t" style="left:31px;top:851px;font-size:13px;color:#1e1e1e">Cursor</div>
<div class="a" style="left:217px;top:846px;width:186px;height:25px;background:#f0f0f0"></div>
<div class="a t" style="left:219px;top:852px;font-size:13px;color:#333">Default</div>
<svg style="left:390px;top:850px" width="16" height="16"><path d="M3 5 H11 L7 9Z" fill="#4f5c68"/></svg>
<svg style="left:407px;top:850px" width="16" height="16"><path d="M6.5 4.8 H4.8 A3.2 3.2 0 0 0 4.8 11.2 H6.5 M9.5 4.8 H11.2 A3.2 3.2 0 0 1 11.2 11.2 H9.5 M5 8 H11" fill="none" stroke="#4f5c68" stroke-width="1.8"/></svg>
<svg style="left:5px;top:875px" width="16" height="16"><path d="M3 5 H11 L7 9Z" fill="#4f5c68"/></svg>
<div class="a t" style="left:21px;top:877px;font-size:13px;font-weight:bold;color:#76818c">Behavior</div>
<div class="a" style="left:20px;top:893px;width:195px;height:24px;background:#f0f0f0"></div>
<div class="a t" style="left:31px;top:899px;font-size:13px;color:#1e1e1e">Combine Repaints</div>
<div class="a" style="left:220px;top:898px;width:14px;height:14px;background:#fff;border:1px solid #c0c4c8;border-radius:2px"></div>
<div class="a t" style="left:238px;top:899px;font-size:13px;color:#333">false</div>
<svg style="left:407px;top:897px" width="16" height="16"><path d="M6.5 4.8 H4.8 A3.2 3.2 0 0 0 4.8 11.2 H6.5 M9.5 4.8 H11.2 A3.2 3.2 0 0 1 11.2 11.2 H9.5 M5 8 H11" fill="none" stroke="#4f5c68" stroke-width="1.8"/></svg>
<div class="a t" style="left:31px;top:924px;font-size:13px;color:#1e1e1e">Tile Optimized</div>
<div class="a" style="left:220px;top:923px;width:14px;height:14px;background:#fff;border:1px solid #c0c4c8;border-radius:2px"></div>
<div class="a t" style="left:238px;top:924px;font-size:13px;color:#333">false</div>
<svg style="left:407px;top:922px" width="16" height="16"><path d="M6.5 4.8 H4.8 A3.2 3.2 0 0 0 4.8 11.2 H6.5 M9.5 4.8 H11.2 A3.2 3.2 0 0 1 11.2 11.2 H9.5 M5 8 H11" fill="none" stroke="#4f5c68" stroke-width="1.8"/></svg>
<svg style="left:5px;top:946px" width="16" height="16"><path d="M3 5 H11 L7 9Z" fill="#4f5c68"/></svg>
<div class="a t" style="left:21px;top:948px;font-size:13px;font-weight:bold;color:#76818c">Data</div>
<div class="a t" style="left:31px;top:970px;font-size:13px;color:#1e1e1e">Quality</div>
<div class="a" style="left:217px;top:965px;width:167px;height:22px;background:#fff"></div>
<svg style="left:386px;top:968px" width="16" height="16"><path d="M3 13 L4 10 L11 3 L13 5 L6 12Z" fill="#4f5c68"/></svg>
<svg style="left:407px;top:968px" width="16" height="16"><path d="M6.5 4.8 H4.8 A3.2 3.2 0 0 0 4.8 11.2 H6.5 M9.5 4.8 H11.2 A3.2 3.2 0 0 1 11.2 11.2 H9.5 M5 8 H11" fill="none" stroke="#4f5c68" stroke-width="1.8"/></svg>
<div class="a" style="left:426px;top:723px;width:11px;height:273px;background:#f7f7f7"></div>
<div class="a" style="left:428px;top:735px;width:9px;height:146px;background:#c3c8cc"></div>
<div class="a" style="left:430px;top:799px;width:5px;height:1px;background:#e8eaec"></div>
<div class="a" style="left:430px;top:801px;width:5px;height:1px;background:#e8eaec"></div>
<div class="a" style="left:430px;top:803px;width:5px;height:1px;background:#e8eaec"></div>
<div class="a" style="left:430px;top:805px;width:5px;height:1px;background:#e8eaec"></div>
<div class="a" style="left:430px;top:807px;width:5px;height:1px;background:#e8eaec"></div>
<div class="a" style="left:430px;top:809px;width:5px;height:1px;background:#e8eaec"></div>
<svg style="left:424px;top:722px" width="16" height="16"><path d="M5 9 L8 6 L11 9" fill="none" stroke="#4f5c68" stroke-width="1.2"/></svg>
<svg style="left:424px;top:982px" width="16" height="16"><path d="M5 7 L8 10 L11 7" fill="none" stroke="#4f5c68" stroke-width="1.2"/></svg>
<div class="a" style="left:446px;top:79px;width:446px;height:0px;"></div>
<div class="a" style="left:446px;top:79px;width:1445px;height:842px;background:#f4f5f6;border:1px solid #c5cacf"></div>
<div class="a" style="left:449px;top:82px;width:1439px;height:799px;background:#efefef"></div>
<svg style="left:0;top:0" width="1920" height="1033"><path d="M471.5 91 V93 M481.5 88 V93 M491.5 91 V93 M501.5 88 V93 M511.5 91 V93 M521.5 88 V93 M531.5 91 V93 M541.5 88 V93 M551.5 91 V93 M561.5 82 V93 M571.5 91 V93 M581.5 88 V93 M591.5 91 V93 M601.5 88 V93 M611.5 91 V93 M621.5 88 V93 M631.5 91 V93 M641.5 88 V93 M651.5 91 V93 M661.5 82 V93 M671.5 91 V93 M681.5 88 V93 M691.5 91 V93 M701.5 88 V93 M711.5 91 V93 M721.5 88 V93 M731.5 91 V93 M741.5 88 V93 M751.5 91 V93 M761.5 82 V93 M771.5 91 V93 M781.5 88 V93 M791.5 91 V93 M801.5 88 V93 M811.5 91 V93 M821.5 88 V93 M831.5 91 V93 M841.5 88 V93 M851.5 91 V93 M861.5 82 V93 M871.5 91 V93 M881.5 88 V93 M891.5 91 V93 M901.5 88 V93 M911.5 91 V93 M921.5 88 V93 M931.5 91 V93 M941.5 88 V93 M951.5 91 V93 M961.5 82 V93 M971.5 91 V93 M981.5 88 V93 M991.5 91 V93 M1001.5 88 V93 M1011.5 91 V93 M1021.5 88 V93 M1031.5 91 V93 M1041.5 88 V93 M1051.5 91 V93 M1061.5 82 V93 M1071.5 91 V93 M1081.5 88 V93 M1091.5 91 V93 M1101.5 88 V93 M1111.5 91 V93 M1121.5 88 V93 M1131.5 91 V93 M1141.5 88 V93 M1151.5 91 V93 M1161.5 82 V93 M1171.5 91 V93 M1181.5 88 V93 M1191.5 91 V93 M1201.5 88 V93 M1211.5 91 V93 M1221.5 88 V93 M1231.5 91 V93 M1241.5 88 V93 M1251.5 91 V93 M1261.5 82 V93 M1271.5 91 V93 M1281.5 88 V93 M1291.5 91 V93 M1301.5 88 V93 M1311.5 91 V93 M1321.5 88 V93 M1331.5 91 V93 M1341.5 88 V93 M1351.5 91 V93 M1361.5 82 V93 M1371.5 91 V93 M1381.5 88 V93 M1391.5 91 V93 M1401.5 88 V93 M1411.5 91 V93 M1421.5 88 V93 M1431.5 91 V93 M1441.5 88 V93 M1451.5 91 V93 M1461.5 82 V93 M1471.5 91 V93 M1481.5 88 V93 M1491.5 91 V93 M1501.5 88 V93 M1511.5 91 V93 M1521.5 88 V93 M1531.5 91 V93 M1541.5 88 V93 M1551.5 91 V93 M1561.5 82 V93 M1571.5 91 V93 M1581.5 88 V93 M1591.5 91 V93 M1601.5 88 V93 M1611.5 91 V93 M1621.5 88 V93 M1631.5 91 V93 M1641.5 88 V93 M1651.5 91 V93 M1661.5 82 V93 M1671.5 91 V93 M1681.5 88 V93 M1691.5 91 V93 M1701.5 88 V93 M1711.5 91 V93 M1721.5 88 V93 M1731.5 91 V93 M1741.5 88 V93 M1751.5 91 V93 M1761.5 82 V93 M1771.5 91 V93 M1781.5 88 V93 M1791.5 91 V93 M1801.5 88 V93 M1811.5 91 V93 M1821.5 88 V93 M1831.5 91 V93 M1841.5 88 V93 M1851.5 91 V93 M1861.5 82 V93 M1871.5 91 V93 M1881.5 88 V93" stroke="#111" stroke-width="1"/></svg>
<div class="a t" style="left:563px;top:82px;font-size:10px;color:#333;letter-spacing:-0.8px">133</div>
<div class="a t" style="left:663px;top:82px;font-size:10px;color:#333;letter-spacing:-0.8px">267</div>
<div class="a t" style="left:763px;top:82px;font-size:10px;color:#333;letter-spacing:-0.8px">400</div>
<div class="a t" style="left:863px;top:82px;font-size:10px;color:#333;letter-spacing:-0.8px">533</div>
<div class="a t" style="left:963px;top:82px;font-size:10px;color:#333;letter-spacing:-0.8px">667</div>
<div class="a t" style="left:1063px;top:82px;font-size:10px;color:#333;letter-spacing:-0.8px">800</div>
<div class="a t" style="left:1163px;top:82px;font-size:10px;color:#333;letter-spacing:-0.8px">933</div>
<div class="a t" style="left:1263px;top:82px;font-size:10px;color:#333;letter-spacing:-0.8px">1067</div>
<div class="a t" style="left:1363px;top:82px;font-size:10px;color:#333;letter-spacing:-0.8px">1200</div>
<div class="a t" style="left:1463px;top:82px;font-size:10px;color:#333;letter-spacing:-0.8px">1333</div>
<div class="a t" style="left:1563px;top:82px;font-size:10px;color:#333;letter-spacing:-0.8px">1467</div>
<div class="a t" style="left:1663px;top:82px;font-size:10px;color:#333;letter-spacing:-0.8px">1600</div>
<div class="a t" style="left:1763px;top:82px;font-size:10px;color:#333;letter-spacing:-0.8px">1733</div>
<div class="a t" style="left:1863px;top:82px;font-size:10px;color:#333;letter-spacing:-0.8px">1867</div>
<svg style="left:0;top:0" width="1920" height="1033"><path d="M458 104.5 H461 M456 114.5 H461 M458 124.5 H461 M456 134.5 H461 M458 144.5 H461 M456 154.5 H461 M458 164.5 H461 M456 174.5 H461 M458 184.5 H461 M456 194.5 H461 M458 204.5 H461 M456 214.5 H461 M458 224.5 H461 M456 234.5 H461 M458 244.5 H461 M456 254.5 H461 M458 264.5 H461 M456 274.5 H461 M458 284.5 H461 M456 294.5 H461 M458 304.5 H461 M456 314.5 H461 M458 324.5 H461 M456 334.5 H461 M458 344.5 H461 M456 354.5 H461 M458 364.5 H461 M456 374.5 H461 M458 384.5 H461 M456 394.5 H461 M458 404.5 H461 M456 414.5 H461 M458 424.5 H461 M456 434.5 H461 M458 444.5 H461 M456 454.5 H461 M458 464.5 H461 M456 474.5 H461 M458 484.5 H461 M456 494.5 H461 M458 504.5 H461 M456 514.5 H461 M458 524.5 H461 M456 534.5 H461 M458 544.5 H461 M456 554.5 H461 M458 564.5 H461 M456 574.5 H461 M458 584.5 H461 M456 594.5 H461 M458 604.5 H461 M456 614.5 H461 M458 624.5 H461 M456 634.5 H461 M458 644.5 H461 M456 654.5 H461 M458 664.5 H461 M456 674.5 H461 M458 684.5 H461 M456 694.5 H461 M458 704.5 H461 M456 714.5 H461 M458 724.5 H461 M456 734.5 H461 M458 744.5 H461 M456 754.5 H461 M458 764.5 H461 M456 774.5 H461 M458 784.5 H461 M456 794.5 H461 M458 804.5 H461 M456 814.5 H461 M458 824.5 H461 M456 834.5 H461 M458 844.5 H461 M456 854.5 H461 M458 864.5 H461 M456 874.5 H461" stroke="#111" stroke-width="1"/></svg>
<div class="a" style="left:460px;top:821px;width:1px;height:60px;background:#333"></div>
<div class="a t" style="left:452px;top:195px;font-size:9px;color:#222">1</div>
<div class="a t" style="left:452px;top:204px;font-size:9px;color:#222">3</div>
<div class="a t" style="left:452px;top:213px;font-size:9px;color:#222">3</div>
<div class="a t" style="left:452px;top:295px;font-size:9px;color:#222">2</div>
<div class="a t" style="left:452px;top:304px;font-size:9px;color:#222">6</div>
<div class="a t" style="left:452px;top:313px;font-size:9px;color:#222">7</div>
<div class="a t" style="left:452px;top:395px;font-size:9px;color:#222">4</div>
<div class="a t" style="left:452px;top:404px;font-size:9px;color:#222">0</div>
<div class="a t" style="left:452px;top:413px;font-size:9px;color:#222">0</div>
<div class="a t" style="left:452px;top:495px;font-size:9px;color:#222">5</div>
<div class="a t" style="left:452px;top:504px;font-size:9px;color:#222">3</div>
<div class="a t" style="left:452px;top:513px;font-size:9px;color:#222">3</div>
<div class="a t" style="left:452px;top:595px;font-size:9px;color:#222">6</div>
<div class="a t" style="left:452px;top:604px;font-size:9px;color:#222">6</div>
<div class="a t" style="left:452px;top:613px;font-size:9px;color:#222">7</div>
<div class="a t" style="left:452px;top:695px;font-size:9px;color:#222">8</div>
<div class="a t" style="left:452px;top:704px;font-size:9px;color:#222">0</div>
<div class="a t" style="left:452px;top:713px;font-size:9px;color:#222">0</div>
<div class="a t" style="left:452px;top:795px;font-size:9px;color:#222">9</div>
<div class="a t" style="left:452px;top:804px;font-size:9px;color:#222">3</div>
<div class="a t" style="left:452px;top:813px;font-size:9px;color:#222">3</div>
<div class="a" style="left:461px;top:93px;width:1427px;height:728px;background:#000"></div>
<div class="a" style="left:461px;top:821px;width:1427px;height:60px;background:#d9d9d9"></div>
<div class="a" style="left:461px;top:862px;width:961px;height:1px;background:#e2e2e2"></div>
<div class="a" style="left:1421px;top:821px;width:1px;height:42px;background:#e2e2e2"></div>
<div class="a t" style="left:1332px;top:847px;font-size:13px;font-weight:bold;color:#e3e3e3">Minimum Size</div>
<svg style="left:1173px;top:820px" width="16" height="16"><path d="M8 1 L12 5 H10 V11 H12 L8 15 L4 11 H6 V5 H4Z" fill="#555" stroke="#111" stroke-width="0.8"/></svg>
<div class="a" style="left:449px;top:881px;width:1439px;height:14px;background:#c2c7cb"></div>
<div class="a" style="left:449px;top:881px;width:13px;height:14px;background:#fafafa"></div>
<div class="a" style="left:462px;top:882px;width:12px;height:12px;background:#fafafa"></div>
<svg style="left:460px;top:880px" width="16" height="16"><path d="M9 4 L5 8 L9 12" fill="none" stroke="#4f5c68" stroke-width="1.3"/></svg>
<div class="a" style="left:1852px;top:882px;width:36px;height:12px;background:#fafafa"></div>
<svg style="left:1873px;top:880px" width="16" height="16"><path d="M6 4 L10 8 L6 12" fill="none" stroke="#4f5c68" stroke-width="1.3"/></svg>
<div class="a" style="left:1154px;top:885px;width:1px;height:5px;background:#eef0f2"></div>
<div class="a" style="left:1156px;top:885px;width:1px;height:5px;background:#eef0f2"></div>
<div class="a" style="left:1158px;top:885px;width:1px;height:5px;background:#eef0f2"></div>
<div class="a" style="left:1160px;top:885px;width:1px;height:5px;background:#eef0f2"></div>
<div class="a" style="left:1162px;top:885px;width:1px;height:5px;background:#eef0f2"></div>
<div class="a" style="left:1164px;top:885px;width:1px;height:5px;background:#eef0f2"></div>
<div class="a" style="left:1166px;top:885px;width:1px;height:5px;background:#eef0f2"></div>
<div class="a" style="left:1168px;top:885px;width:1px;height:5px;background:#eef0f2"></div>
<div class="a" style="left:1170px;top:885px;width:1px;height:5px;background:#eef0f2"></div>
<div class="a" style="left:551px;top:163px;width:106px;height:196px;background:#2c2c2c"></div>
<div class="a t" style="left:516px;top:168px;font-size:11px;color:#e6e6e6">Top</div>
<div class="a t" style="left:511px;top:344px;font-size:11px;color:#e6e6e6">Floor</div>
<div class="a" style="left:524px;top:187px;width:1px;height:150px;background:#c8c8c8"></div>
<div class="a" style="left:1707px;top:164px;width:107px;height:195px;background:#2c2c2c"></div>
<div class="a" style="left:668px;top:164px;width:37px;height:195px;background:#fff"></div>
<div class="a" style="left:671px;top:166px;width:31px;height:22px;background:#000;border-radius:2px 0 1px 0;font-size:12px;font-weight:bold;color:#fff;text-align:center;line-height:22px;letter-spacing:-0.8px;text-indent:-0.8px">451</div>
<div class="a" style="left:671px;top:190px;width:31px;height:22px;background:#000;border-radius:2px 0 1px 0;font-size:12px;font-weight:bold;color:#fff;text-align:center;line-height:22px;letter-spacing:-0.8px;text-indent:-0.8px">401</div>
<div class="a" style="left:671px;top:214px;width:31px;height:22px;background:#000;border-radius:2px 0 1px 0;font-size:12px;font-weight:bold;color:#fff;text-align:center;line-height:22px;letter-spacing:-0.8px;text-indent:-0.8px">351</div>
<div class="a" style="left:671px;top:238px;width:31px;height:22px;background:#000;border-radius:2px 0 1px 0;font-size:12px;font-weight:bold;color:#fff;text-align:center;line-height:22px;letter-spacing:-0.8px;text-indent:-0.8px">301</div>
<div class="a" style="left:671px;top:262px;width:31px;height:22px;background:#000;border-radius:2px 0 1px 0;font-size:12px;font-weight:bold;color:#fff;text-align:center;line-height:22px;letter-spacing:-0.8px;text-indent:-0.8px">251</div>
<div class="a" style="left:671px;top:286px;width:31px;height:22px;background:#000;border-radius:2px 0 1px 0;font-size:12px;font-weight:bold;color:#fff;text-align:center;line-height:22px;letter-spacing:-0.8px;text-indent:-0.8px">201</div>
<div class="a" style="left:671px;top:310px;width:31px;height:22px;background:#000;border-radius:2px 0 1px 0;font-size:12px;font-weight:bold;color:#fff;text-align:center;line-height:22px;letter-spacing:-0.8px;text-indent:-0.8px">151</div>
<div class="a" style="left:671px;top:334px;width:31px;height:22px;background:#000;border-radius:2px 0 1px 0;font-size:12px;font-weight:bold;color:#fff;text-align:center;line-height:22px;letter-spacing:-0.8px;text-indent:-0.8px">101</div>
<div class="a" style="left:709px;top:164px;width:37px;height:195px;background:#fff"></div>
<div class="a" style="left:712px;top:166px;width:31px;height:22px;background:#000;border-radius:2px 0 1px 0;font-size:12px;font-weight:bold;color:#fff;text-align:center;line-height:22px;letter-spacing:-0.8px;text-indent:-0.8px">453</div>
<div class="a" style="left:712px;top:190px;width:31px;height:22px;background:#000;border-radius:2px 0 1px 0;font-size:12px;font-weight:bold;color:#fff;text-align:center;line-height:22px;letter-spacing:-0.8px;text-indent:-0.8px">403</div>
<div class="a" style="left:712px;top:214px;width:31px;height:22px;background:#000;border-radius:2px 0 1px 0;font-size:12px;font-weight:bold;color:#fff;text-align:center;line-height:22px;letter-spacing:-0.8px;text-indent:-0.8px">353</div>
<div class="a" style="left:712px;top:238px;width:31px;height:22px;background:#000;border-radius:2px 0 1px 0;font-size:12px;font-weight:bold;color:#fff;text-align:center;line-height:22px;letter-spacing:-0.8px;text-indent:-0.8px">303</div>
<div class="a" style="left:712px;top:262px;width:31px;height:22px;background:#000;border-radius:2px 0 1px 0;font-size:12px;font-weight:bold;color:#fff;text-align:center;line-height:22px;letter-spacing:-0.8px;text-indent:-0.8px">253</div>
<div class="a" style="left:712px;top:286px;width:31px;height:22px;background:#000;border-radius:2px 0 1px 0;font-size:12px;font-weight:bold;color:#fff;text-align:center;line-height:22px;letter-spacing:-0.8px;text-indent:-0.8px">203</div>
<div class="a" style="left:712px;top:310px;width:31px;height:22px;background:#000;border-radius:2px 0 1px 0;font-size:12px;font-weight:bold;color:#fff;text-align:center;line-height:22px;letter-spacing:-0.8px;text-indent:-0.8px">153</div>
<div class="a" style="left:712px;top:334px;width:31px;height:22px;background:#000;border-radius:2px 0 1px 0;font-size:12px;font-weight:bold;color:#fff;text-align:center;line-height:22px;letter-spacing:-0.8px;text-indent:-0.8px">103</div>
<div class="a" style="left:751px;top:164px;width:37px;height:195px;background:#fff"></div>
<div class="a" style="left:754px;top:166px;width:31px;height:22px;background:#000;border-radius:2px 0 1px 0;font-size:12px;font-weight:bold;color:#fff;text-align:center;line-height:22px;letter-spacing:-0.8px;text-indent:-0.8px">455</div>
<div class="a" style="left:754px;top:190px;width:31px;height:22px;background:#000;border-radius:2px 0 1px 0;font-size:12px;font-weight:bold;color:#fff;text-align:center;line-height:22px;letter-spacing:-0.8px;text-indent:-0.8px">405</div>
<div class="a" style="left:754px;top:214px;width:31px;height:22px;background:#000;border-radius:2px 0 1px 0;font-size:12px;font-weight:bold;color:#fff;text-align:center;line-height:22px;letter-spacing:-0.8px;text-indent:-0.8px">355</div>
<div class="a" style="left:754px;top:238px;width:31px;height:22px;background:#000;border-radius:2px 0 1px 0;font-size:12px;font-weight:bold;color:#fff;text-align:center;line-height:22px;letter-spacing:-0.8px;text-indent:-0.8px">305</div>
<div class="a" style="left:754px;top:262px;width:31px;height:22px;background:#000;border-radius:2px 0 1px 0;font-size:12px;font-weight:bold;color:#fff;text-align:center;line-height:22px;letter-spacing:-0.8px;text-indent:-0.8px">255</div>
<div class="a" style="left:754px;top:286px;width:31px;height:22px;background:#000;border-radius:2px 0 1px 0;font-size:12px;font-weight:bold;color:#fff;text-align:center;line-height:22px;letter-spacing:-0.8px;text-indent:-0.8px">205</div>
<div class="a" style="left:754px;top:310px;width:31px;height:22px;background:#000;border-radius:2px 0 1px 0;font-size:12px;font-weight:bold;color:#fff;text-align:center;line-height:22px;letter-spacing:-0.8px;text-indent:-0.8px">155</div>
<div class="a" style="left:754px;top:334px;width:31px;height:22px;background:#000;border-radius:2px 0 1px 0;font-size:12px;font-weight:bold;color:#fff;text-align:center;line-height:22px;letter-spacing:-0.8px;text-indent:-0.8px">105</div>
<div class="a" style="left:792px;top:164px;width:37px;height:195px;background:#fff"></div>
<div class="a" style="left:795px;top:166px;width:31px;height:22px;background:#000;border-radius:2px 0 1px 0;font-size:12px;font-weight:bold;color:#fff;text-align:center;line-height:22px;letter-spacing:-0.8px;text-indent:-0.8px">457</div>
<div class="a" style="left:795px;top:190px;width:31px;height:22px;background:#000;border-radius:2px 0 1px 0;font-size:12px;font-weight:bold;color:#fff;text-align:center;line-height:22px;letter-spacing:-0.8px;text-indent:-0.8px">407</div>
<div class="a" style="left:795px;top:214px;width:31px;height:22px;background:#000;border-radius:2px 0 1px 0;font-size:12px;font-weight:bold;color:#fff;text-align:center;line-height:22px;letter-spacing:-0.8px;text-indent:-0.8px">357</div>
<div class="a" style="left:795px;top:238px;width:31px;height:22px;background:#000;border-radius:2px 0 1px 0;font-size:12px;font-weight:bold;color:#fff;text-align:center;line-height:22px;letter-spacing:-0.8px;text-indent:-0.8px">307</div>
<div class="a" style="left:795px;top:262px;width:31px;height:22px;background:#000;border-radius:2px 0 1px 0;font-size:12px;font-weight:bold;color:#fff;text-align:center;line-height:22px;letter-spacing:-0.8px;text-indent:-0.8px">257</div>
<div class="a" style="left:795px;top:286px;width:31px;height:22px;background:#000;border-radius:2px 0 1px 0;font-size:12px;font-weight:bold;color:#fff;text-align:center;line-height:22px;letter-spacing:-0.8px;text-indent:-0.8px">207</div>
<div class="a" style="left:795px;top:310px;width:31px;height:22px;background:#000;border-radius:2px 0 1px 0;font-size:12px;font-weight:bold;color:#fff;text-align:center;line-height:22px;letter-spacing:-0.8px;text-indent:-0.8px">157</div>
<div class="a" style="left:795px;top:334px;width:31px;height:22px;background:#000;border-radius:2px 0 1px 0;font-size:12px;font-weight:bold;color:#fff;text-align:center;line-height:22px;letter-spacing:-0.8px;text-indent:-0.8px">107</div>
<div class="a" style="left:834px;top:164px;width:37px;height:195px;background:#fff"></div>
<div class="a" style="left:837px;top:166px;width:31px;height:22px;background:#000;border-radius:2px 0 1px 0;font-size:12px;font-weight:bold;color:#fff;text-align:center;line-height:22px;letter-spacing:-0.8px;text-indent:-0.8px">459</div>
<div class="a" style="left:837px;top:190px;width:31px;height:22px;background:#000;border-radius:2px 0 1px 0;font-size:12px;font-weight:bold;color:#fff;text-align:center;line-height:22px;letter-spacing:-0.8px;text-indent:-0.8px">409</div>
<div class="a" style="left:837px;top:214px;width:31px;height:22px;background:#000;border-radius:2px 0 1px 0;font-size:12px;font-weight:bold;color:#fff;text-align:center;line-height:22px;letter-spacing:-0.8px;text-indent:-0.8px">359</div>
<div class="a" style="left:837px;top:238px;width:31px;height:22px;background:#000;border-radius:2px 0 1px 0;font-size:12px;font-weight:bold;color:#fff;text-align:center;line-height:22px;letter-spacing:-0.8px;text-indent:-0.8px">309</div>
<div class="a" style="left:837px;top:262px;width:31px;height:22px;background:#000;border-radius:2px 0 1px 0;font-size:12px;font-weight:bold;color:#fff;text-align:center;line-height:22px;letter-spacing:-0.8px;text-indent:-0.8px">259</div>
<div class="a" style="left:837px;top:286px;width:31px;height:22px;background:#000;border-radius:2px 0 1px 0;font-size:12px;font-weight:bold;color:#fff;text-align:center;line-height:22px;letter-spacing:-0.8px;text-indent:-0.8px">209</div>
<div class="a" style="left:837px;top:310px;width:31px;height:22px;background:#000;border-radius:2px 0 1px 0;font-size:12px;font-weight:bold;color:#fff;text-align:center;line-height:22px;letter-spacing:-0.8px;text-indent:-0.8px">159</div>
<div class="a" style="left:837px;top:334px;width:31px;height:22px;background:#000;border-radius:2px 0 1px 0;font-size:12px;font-weight:bold;color:#fff;text-align:center;line-height:22px;letter-spacing:-0.8px;text-indent:-0.8px">109</div>
<div class="a" style="left:875px;top:164px;width:37px;height:195px;background:#fff"></div>
<div class="a" style="left:878px;top:166px;width:31px;height:22px;background:#000;border-radius:2px 0 1px 0;font-size:12px;font-weight:bold;color:#fff;text-align:center;line-height:22px;letter-spacing:-0.8px;text-indent:-0.8px">461</div>
<div class="a" style="left:878px;top:190px;width:31px;height:22px;background:#000;border-radius:2px 0 1px 0;font-size:12px;font-weight:bold;color:#fff;text-align:center;line-height:22px;letter-spacing:-0.8px;text-indent:-0.8px">411</div>
<div class="a" style="left:878px;top:214px;width:31px;height:22px;background:#000;border-radius:2px 0 1px 0;font-size:12px;font-weight:bold;color:#fff;text-align:center;line-height:22px;letter-spacing:-0.8px;text-indent:-0.8px">361</div>
<div class="a" style="left:878px;top:238px;width:31px;height:22px;background:#000;border-radius:2px 0 1px 0;font-size:12px;font-weight:bold;color:#fff;text-align:center;line-height:22px;letter-spacing:-0.8px;text-indent:-0.8px">311</div>
<div class="a" style="left:878px;top:262px;width:31px;height:22px;background:#000;border-radius:2px 0 1px 0;font-size:12px;font-weight:bold;color:#fff;text-align:center;line-height:22px;letter-spacing:-0.8px;text-indent:-0.8px">261</div>
<div class="a" style="left:878px;top:286px;width:31px;height:22px;background:#000;border-radius:2px 0 1px 0;font-size:12px;font-weight:bold;color:#fff;text-align:center;line-height:22px;letter-spacing:-0.8px;text-indent:-0.8px">211</div>
<div class="a" style="left:878px;top:310px;width:31px;height:22px;background:#000;border-radius:2px 0 1px 0;font-size:12px;font-weight:bold;color:#fff;text-align:center;line-height:22px;letter-spacing:-0.8px;text-indent:-0.8px">161</div>
<div class="a" style="left:878px;top:334px;width:31px;height:22px;background:#000;border-radius:2px 0 1px 0;font-size:12px;font-weight:bold;color:#fff;text-align:center;line-height:22px;letter-spacing:-0.8px;text-indent:-0.8px">111</div>
<div class="a" style="left:916px;top:164px;width:37px;height:195px;background:#fff"></div>
<div class="a" style="left:919px;top:166px;width:31px;height:22px;background:#000;border-radius:2px 0 1px 0;font-size:12px;font-weight:bold;color:#fff;text-align:center;line-height:22px;letter-spacing:-0.8px;text-indent:-0.8px">463</div>
<div class="a" style="left:919px;top:190px;width:31px;height:22px;background:#000;border-radius:2px 0 1px 0;font-size:12px;font-weight:bold;color:#fff;text-align:center;line-height:22px;letter-spacing:-0.8px;text-indent:-0.8px">413</div>
<div class="a" style="left:919px;top:214px;width:31px;height:22px;background:#000;border-radius:2px 0 1px 0;font-size:12px;font-weight:bold;color:#fff;text-align:center;line-height:22px;letter-spacing:-0.8px;text-indent:-0.8px">363</div>
<div class="a" style="left:919px;top:238px;width:31px;height:22px;background:#000;border-radius:2px 0 1px 0;font-size:12px;font-weight:bold;color:#fff;text-align:center;line-height:22px;letter-spacing:-0.8px;text-indent:-0.8px">313</div>
<div class="a" style="left:919px;top:262px;width:31px;height:22px;background:#000;border-radius:2px 0 1px 0;font-size:12px;font-weight:bold;color:#fff;text-align:center;line-height:22px;letter-spacing:-0.8px;text-indent:-0.8px">263</div>
<div class="a" style="left:919px;top:286px;width:31px;height:22px;background:#000;border-radius:2px 0 1px 0;font-size:12px;font-weight:bold;color:#fff;text-align:center;line-height:22px;letter-spacing:-0.8px;text-indent:-0.8px">213</div>
<div class="a" style="left:919px;top:310px;width:31px;height:22px;background:#000;border-radius:2px 0 1px 0;font-size:12px;font-weight:bold;color:#fff;text-align:center;line-height:22px;letter-spacing:-0.8px;text-indent:-0.8px">163</div>
<div class="a" style="left:919px;top:334px;width:31px;height:22px;background:#000;border-radius:2px 0 1px 0;font-size:12px;font-weight:bold;color:#fff;text-align:center;line-height:22px;letter-spacing:-0.8px;text-indent:-0.8px">113</div>
<div class="a" style="left:958px;top:164px;width:37px;height:195px;background:#fff"></div>
<div class="a" style="left:961px;top:166px;width:31px;height:22px;background:#000;border-radius:2px 0 1px 0;font-size:12px;font-weight:bold;color:#fff;text-align:center;line-height:22px;letter-spacing:-0.8px;text-indent:-0.8px">465</div>
<div class="a" style="left:961px;top:190px;width:31px;height:22px;background:#000;border-radius:2px 0 1px 0;font-size:12px;font-weight:bold;color:#fff;text-align:center;line-height:22px;letter-spacing:-0.8px;text-indent:-0.8px">415</div>
<div class="a" style="left:961px;top:214px;width:31px;height:22px;background:#000;border-radius:2px 0 1px 0;font-size:12px;font-weight:bold;color:#fff;text-align:center;line-height:22px;letter-spacing:-0.8px;text-indent:-0.8px">365</div>
<div class="a" style="left:961px;top:238px;width:31px;height:22px;background:#000;border-radius:2px 0 1px 0;font-size:12px;font-weight:bold;color:#fff;text-align:center;line-height:22px;letter-spacing:-0.8px;text-indent:-0.8px">315</div>
<div class="a" style="left:961px;top:262px;width:31px;height:22px;background:#000;border-radius:2px 0 1px 0;font-size:12px;font-weight:bold;color:#fff;text-align:center;line-height:22px;letter-spacing:-0.8px;text-indent:-0.8px">265</div>
<div class="a" style="left:961px;top:286px;width:31px;height:22px;background:#000;border-radius:2px 0 1px 0;font-size:12px;font-weight:bold;color:#fff;text-align:center;line-height:22px;letter-spacing:-0.8px;text-indent:-0.8px">215</div>
<div class="a" style="left:961px;top:310px;width:31px;height:22px;background:#000;border-radius:2px 0 1px 0;font-size:12px;font-weight:bold;color:#fff;text-align:center;line-height:22px;letter-spacing:-0.8px;text-indent:-0.8px">165</div>
<div class="a" style="left:961px;top:334px;width:31px;height:22px;background:#000;border-radius:2px 0 1px 0;font-size:12px;font-weight:bold;color:#fff;text-align:center;line-height:22px;letter-spacing:-0.8px;text-indent:-0.8px">115</div>
<div class="a" style="left:999px;top:164px;width:37px;height:195px;background:#fff"></div>
<div class="a" style="left:1002px;top:166px;width:31px;height:22px;background:#000;border-radius:2px 0 1px 0;font-size:12px;font-weight:bold;color:#fff;text-align:center;line-height:22px;letter-spacing:-0.8px;text-indent:-0.8px">467</div>
<div class="a" style="left:1002px;top:190px;width:31px;height:22px;background:#000;border-radius:2px 0 1px 0;font-size:12px;font-weight:bold;color:#fff;text-align:center;line-height:22px;letter-spacing:-0.8px;text-indent:-0.8px">417</div>
<div class="a" style="left:1002px;top:214px;width:31px;height:22px;background:#000;border-radius:2px 0 1px 0;font-size:12px;font-weight:bold;color:#fff;text-align:center;line-height:22px;letter-spacing:-0.8px;text-indent:-0.8px">367</div>
<div class="a" style="left:1002px;top:238px;width:31px;height:22px;background:#000;border-radius:2px 0 1px 0;font-size:12px;font-weight:bold;color:#fff;text-align:center;line-height:22px;letter-spacing:-0.8px;text-indent:-0.8px">317</div>
<div class="a" style="left:1002px;top:262px;width:31px;height:22px;background:#000;border-radius:2px 0 1px 0;font-size:12px;font-weight:bold;color:#fff;text-align:center;line-height:22px;letter-spacing:-0.8px;text-indent:-0.8px">267</div>
<div class="a" style="left:1002px;top:286px;width:31px;height:22px;background:#000;border-radius:2px 0 1px 0;font-size:12px;font-weight:bold;color:#fff;text-align:center;line-height:22px;letter-spacing:-0.8px;text-indent:-0.8px">217</div>
<div class="a" style="left:1002px;top:310px;width:31px;height:22px;background:#000;border-radius:2px 0 1px 0;font-size:12px;font-weight:bold;color:#fff;text-align:center;line-height:22px;letter-spacing:-0.8px;text-indent:-0.8px">167</div>
<div class="a" style="left:1002px;top:334px;width:31px;height:22px;background:#000;border-radius:2px 0 1px 0;font-size:12px;font-weight:bold;color:#fff;text-align:center;line-height:22px;letter-spacing:-0.8px;text-indent:-0.8px">117</div>
<div class="a" style="left:1040px;top:164px;width:37px;height:195px;background:#fff"></div>
<div class="a" style="left:1043px;top:166px;width:31px;height:22px;background:#000;border-radius:2px 0 1px 0;font-size:12px;font-weight:bold;color:#fff;text-align:center;line-height:22px;letter-spacing:-0.8px;text-indent:-0.8px">469</div>
<div class="a" style="left:1043px;top:190px;width:31px;height:22px;background:#000;border-radius:2px 0 1px 0;font-size:12px;font-weight:bold;color:#fff;text-align:center;line-height:22px;letter-spacing:-0.8px;text-indent:-0.8px">419</div>
<div class="a" style="left:1043px;top:214px;width:31px;height:22px;background:#000;border-radius:2px 0 1px 0;font-size:12px;font-weight:bold;color:#fff;text-align:center;line-height:22px;letter-spacing:-0.8px;text-indent:-0.8px">369</div>
<div class="a" style="left:1043px;top:238px;width:31px;height:22px;background:#000;border-radius:2px 0 1px 0;font-size:12px;font-weight:bold;color:#fff;text-align:center;line-height:22px;letter-spacing:-0.8px;text-indent:-0.8px">319</div>
<div class="a" style="left:1043px;top:262px;width:31px;height:22px;background:#000;border-radius:2px 0 1px 0;font-size:12px;font-weight:bold;color:#fff;text-align:center;line-height:22px;letter-spacing:-0.8px;text-indent:-0.8px">269</div>
<div class="a" style="left:1043px;top:286px;width:31px;height:22px;background:#000;border-radius:2px 0 1px 0;font-size:12px;font-weight:bold;color:#fff;text-align:center;line-height:22px;letter-spacing:-0.8px;text-indent:-0.8px">219</div>
<div class="a" style="left:1043px;top:310px;width:31px;height:22px;background:#000;border-radius:2px 0 1px 0;font-size:12px;font-weight:bold;color:#fff;text-align:center;line-height:22px;letter-spacing:-0.8px;text-indent:-0.8px">169</div>
<div class="a" style="left:1043px;top:334px;width:31px;height:22px;background:#000;border-radius:2px 0 1px 0;font-size:12px;font-weight:bold;color:#fff;text-align:center;line-height:22px;letter-spacing:-0.8px;text-indent:-0.8px">119</div>
<div class="a" style="left:1082px;top:164px;width:37px;height:195px;background:#fff"></div>
<div class="a" style="left:1085px;top:166px;width:31px;height:22px;background:#000;border-radius:2px 0 1px 0;font-size:12px;font-weight:bold;color:#fff;text-align:center;line-height:22px;letter-spacing:-0.8px;text-indent:-0.8px">471</div>
<div class="a" style="left:1085px;top:190px;width:31px;height:22px;background:#000;border-radius:2px 0 1px 0;font-size:12px;font-weight:bold;color:#fff;text-align:center;line-height:22px;letter-spacing:-0.8px;text-indent:-0.8px">421</div>
<div class="a" style="left:1085px;top:214px;width:31px;height:22px;background:#000;border-radius:2px 0 1px 0;font-size:12px;font-weight:bold;color:#fff;text-align:center;line-height:22px;letter-spacing:-0.8px;text-indent:-0.8px">371</div>
<div class="a" style="left:1085px;top:238px;width:31px;height:22px;background:#000;border-radius:2px 0 1px 0;font-size:12px;font-weight:bold;color:#fff;text-align:center;line-height:22px;letter-spacing:-0.8px;text-indent:-0.8px">321</div>
<div class="a" style="left:1085px;top:262px;width:31px;height:22px;background:#000;border-radius:2px 0 1px 0;font-size:12px;font-weight:bold;color:#fff;text-align:center;line-height:22px;letter-spacing:-0.8px;text-indent:-0.8px">271</div>
<div class="a" style="left:1085px;top:286px;width:31px;height:22px;background:#000;border-radius:2px 0 1px 0;font-size:12px;font-weight:bold;color:#fff;text-align:center;line-height:22px;letter-spacing:-0.8px;text-indent:-0.8px">221</div>
<div class="a" style="left:1085px;top:310px;width:31px;height:22px;background:#000;border-radius:2px 0 1px 0;font-size:12px;font-weight:bold;color:#fff;text-align:center;line-height:22px;letter-spacing:-0.8px;text-indent:-0.8px">171</div>
<div class="a" style="left:1085px;top:334px;width:31px;height:22px;background:#000;border-radius:2px 0 1px 0;font-size:12px;font-weight:bold;color:#fff;text-align:center;line-height:22px;letter-spacing:-0.8px;text-indent:-0.8px">121</div>
<div class="a" style="left:1123px;top:164px;width:37px;height:195px;background:#fff"></div>
<div class="a" style="left:1126px;top:166px;width:31px;height:22px;background:#000;border-radius:2px 0 1px 0;font-size:12px;font-weight:bold;color:#fff;text-align:center;line-height:22px;letter-spacing:-0.8px;text-indent:-0.8px">473</div>
<div class="a" style="left:1126px;top:190px;width:31px;height:22px;background:#000;border-radius:2px 0 1px 0;font-size:12px;font-weight:bold;color:#fff;text-align:center;line-height:22px;letter-spacing:-0.8px;text-indent:-0.8px">423</div>
<div class="a" style="left:1126px;top:214px;width:31px;height:22px;background:#000;border-radius:2px 0 1px 0;font-size:12px;font-weight:bold;color:#fff;text-align:center;line-height:22px;letter-spacing:-0.8px;text-indent:-0.8px">373</div>
<div class="a" style="left:1126px;top:238px;width:31px;height:22px;background:#000;border-radius:2px 0 1px 0;font-size:12px;font-weight:bold;color:#fff;text-align:center;line-height:22px;letter-spacing:-0.8px;text-indent:-0.8px">323</div>
<div class="a" style="left:1126px;top:262px;width:31px;height:22px;background:#000;border-radius:2px 0 1px 0;font-size:12px;font-weight:bold;color:#fff;text-align:center;line-height:22px;letter-spacing:-0.8px;text-indent:-0.8px">273</div>
<div class="a" style="left:1126px;top:286px;width:31px;height:22px;background:#000;border-radius:2px 0 1px 0;font-size:12px;font-weight:bold;color:#fff;text-align:center;line-height:22px;letter-spacing:-0.8px;text-indent:-0.8px">223</div>
<div class="a" style="left:1126px;top:310px;width:31px;height:22px;background:#000;border-radius:2px 0 1px 0;font-size:12px;font-weight:bold;color:#fff;text-align:center;line-height:22px;letter-spacing:-0.8px;text-indent:-0.8px">173</div>
<div class="a" style="left:1126px;top:334px;width:31px;height:22px;background:#000;border-radius:2px 0 1px 0;font-size:12px;font-weight:bold;color:#fff;text-align:center;line-height:22px;letter-spacing:-0.8px;text-indent:-0.8px">123</div>
<div class="a" style="left:1164px;top:164px;width:37px;height:195px;background:#fff"></div>
<div class="a" style="left:1167px;top:166px;width:31px;height:22px;background:#000;border-radius:2px 0 1px 0;font-size:12px;font-weight:bold;color:#fff;text-align:center;line-height:22px;letter-spacing:-0.8px;text-indent:-0.8px">475</div>
<div class="a" style="left:1167px;top:190px;width:31px;height:22px;background:#000;border-radius:2px 0 1px 0;font-size:12px;font-weight:bold;color:#fff;text-align:center;line-height:22px;letter-spacing:-0.8px;text-indent:-0.8px">425</div>
<div class="a" style="left:1167px;top:214px;width:31px;height:22px;background:#000;border-radius:2px 0 1px 0;font-size:12px;font-weight:bold;color:#fff;text-align:center;line-height:22px;letter-spacing:-0.8px;text-indent:-0.8px">375</div>
<div class="a" style="left:1167px;top:238px;width:31px;height:22px;background:#000;border-radius:2px 0 1px 0;font-size:12px;font-weight:bold;color:#fff;text-align:center;line-height:22px;letter-spacing:-0.8px;text-indent:-0.8px">325</div>
<div class="a" style="left:1167px;top:262px;width:31px;height:22px;background:#000;border-radius:2px 0 1px 0;font-size:12px;font-weight:bold;color:#fff;text-align:center;line-height:22px;letter-spacing:-0.8px;text-indent:-0.8px">275</div>
<div class="a" style="left:1167px;top:286px;width:31px;height:22px;background:#000;border-radius:2px 0 1px 0;font-size:12px;font-weight:bold;color:#fff;text-align:center;line-height:22px;letter-spacing:-0.8px;text-indent:-0.8px">225</div>
<div class="a" style="left:1167px;top:310px;width:31px;height:22px;background:#000;border-radius:2px 0 1px 0;font-size:12px;font-weight:bold;color:#fff;text-align:center;line-height:22px;letter-spacing:-0.8px;text-indent:-0.8px">175</div>
<div class="a" style="left:1167px;top:334px;width:31px;height:22px;background:#000;border-radius:2px 0 1px 0;font-size:12px;font-weight:bold;color:#fff;text-align:center;line-height:22px;letter-spacing:-0.8px;text-indent:-0.8px">125</div>
<div class="a" style="left:1206px;top:164px;width:37px;height:195px;background:#fff"></div>
<div class="a" style="left:1209px;top:166px;width:31px;height:22px;background:#000;border-radius:2px 0 1px 0;font-size:12px;font-weight:bold;color:#fff;text-align:center;line-height:22px;letter-spacing:-0.8px;text-indent:-0.8px">477</div>
<div class="a" style="left:1209px;top:190px;width:31px;height:22px;background:#000;border-radius:2px 0 1px 0;font-size:12px;font-weight:bold;color:#fff;text-align:center;line-height:22px;letter-spacing:-0.8px;text-indent:-0.8px">427</div>
<div class="a" style="left:1209px;top:214px;width:31px;height:22px;background:#000;border-radius:2px 0 1px 0;font-size:12px;font-weight:bold;color:#fff;text-align:center;line-height:22px;letter-spacing:-0.8px;text-indent:-0.8px">377</div>
<div class="a" style="left:1209px;top:238px;width:31px;height:22px;background:#000;border-radius:2px 0 1px 0;font-size:12px;font-weight:bold;color:#fff;text-align:center;line-height:22px;letter-spacing:-0.8px;text-indent:-0.8px">327</div>
<div class="a" style="left:1209px;top:262px;width:31px;height:22px;background:#000;border-radius:2px 0 1px 0;font-size:12px;font-weight:bold;color:#fff;text-align:center;line-height:22px;letter-spacing:-0.8px;text-indent:-0.8px">277</div>
<div class="a" style="left:1209px;top:286px;width:31px;height:22px;background:#000;border-radius:2px 0 1px 0;font-size:12px;font-weight:bold;color:#fff;text-align:center;line-height:22px;letter-spacing:-0.8px;text-indent:-0.8px">227</div>
<div class="a" style="left:1209px;top:310px;width:31px;height:22px;background:#000;border-radius:2px 0 1px 0;font-size:12px;font-weight:bold;color:#fff;text-align:center;line-height:22px;letter-spacing:-0.8px;text-indent:-0.8px">177</div>
<div class="a" style="left:1209px;top:334px;width:31px;height:22px;background:#000;border-radius:2px 0 1px 0;font-size:12px;font-weight:bold;color:#fff;text-align:center;line-height:22px;letter-spacing:-0.8px;text-indent:-0.8px">127</div>
<div class="a" style="left:1247px;top:164px;width:37px;height:195px;background:#fff"></div>
<div class="a" style="left:1250px;top:166px;width:31px;height:22px;background:#000;border-radius:2px 0 1px 0;font-size:12px;font-weight:bold;color:#fff;text-align:center;line-height:22px;letter-spacing:-0.8px;text-indent:-0.8px">479</div>
<div class="a" style="left:1250px;top:190px;width:31px;height:22px;background:#000;border-radius:2px 0 1px 0;font-size:12px;font-weight:bold;color:#fff;text-align:center;line-height:22px;letter-spacing:-0.8px;text-indent:-0.8px">429</div>
<div class="a" style="left:1250px;top:214px;width:31px;height:22px;background:#000;border-radius:2px 0 1px 0;font-size:12px;font-weight:bold;color:#fff;text-align:center;line-height:22px;letter-spacing:-0.8px;text-indent:-0.8px">379</div>
<div class="a" style="left:1250px;top:238px;width:31px;height:22px;background:#000;border-radius:2px 0 1px 0;font-size:12px;font-weight:bold;color:#fff;text-align:center;line-height:22px;letter-spacing:-0.8px;text-indent:-0.8px">329</div>
<div class="a" style="left:1250px;top:262px;width:31px;height:22px;background:#000;border-radius:2px 0 1px 0;font-size:12px;font-weight:bold;color:#fff;text-align:center;line-height:22px;letter-spacing:-0.8px;text-indent:-0.8px">279</div>
<div class="a" style="left:1250px;top:286px;width:31px;height:22px;background:#000;border-radius:2px 0 1px 0;font-size:12px;font-weight:bold;color:#fff;text-align:center;line-height:22px;letter-spacing:-0.8px;text-indent:-0.8px">229</div>
<div class="a" style="left:1250px;top:310px;width:31px;height:22px;background:#000;border-radius:2px 0 1px 0;font-size:12px;font-weight:bold;color:#fff;text-align:center;line-height:22px;letter-spacing:-0.8px;text-indent:-0.8px">179</div>
<div class="a" style="left:1250px;top:334px;width:31px;height:22px;background:#000;border-radius:2px 0 1px 0;font-size:12px;font-weight:bold;color:#fff;text-align:center;line-height:22px;letter-spacing:-0.8px;text-indent:-0.8px">129</div>
<div class="a" style="left:1289px;top:164px;width:37px;height:195px;background:#fff"></div>
<div class="a" style="left:1292px;top:166px;width:31px;height:22px;background:#000;border-radius:2px 0 1px 0;font-size:12px;font-weight:bold;color:#fff;text-align:center;line-height:22px;letter-spacing:-0.8px;text-indent:-0.8px">481</div>
<div class="a" style="left:1292px;top:190px;width:31px;height:22px;background:#000;border-radius:2px 0 1px 0;font-size:12px;font-weight:bold;color:#fff;text-align:center;line-height:22px;letter-spacing:-0.8px;text-indent:-0.8px">431</div>
<div class="a" style="left:1292px;top:214px;width:31px;height:22px;background:#000;border-radius:2px 0 1px 0;font-size:12px;font-weight:bold;color:#fff;text-align:center;line-height:22px;letter-spacing:-0.8px;text-indent:-0.8px">381</div>
<div class="a" style="left:1292px;top:238px;width:31px;height:22px;background:#000;border-radius:2px 0 1px 0;font-size:12px;font-weight:bold;color:#fff;text-align:center;line-height:22px;letter-spacing:-0.8px;text-indent:-0.8px">331</div>
<div class="a" style="left:1292px;top:262px;width:31px;height:22px;background:#000;border-radius:2px 0 1px 0;font-size:12px;font-weight:bold;color:#fff;text-align:center;line-height:22px;letter-spacing:-0.8px;text-indent:-0.8px">281</div>
<div class="a" style="left:1292px;top:286px;width:31px;height:22px;background:#000;border-radius:2px 0 1px 0;font-size:12px;font-weight:bold;color:#fff;text-align:center;line-height:22px;letter-spacing:-0.8px;text-indent:-0.8px">231</div>
<div class="a" style="left:1292px;top:310px;width:31px;height:22px;background:#000;border-radius:2px 0 1px 0;font-size:12px;font-weight:bold;color:#fff;text-align:center;line-height:22px;letter-spacing:-0.8px;text-indent:-0.8px">181</div>
<div class="a" style="left:1292px;top:334px;width:31px;height:22px;background:#000;border-radius:2px 0 1px 0;font-size:12px;font-weight:bold;color:#fff;text-align:center;line-height:22px;letter-spacing:-0.8px;text-indent:-0.8px">131</div>
<div class="a" style="left:1330px;top:164px;width:37px;height:195px;background:#fff"></div>
<div class="a" style="left:1333px;top:166px;width:31px;height:22px;background:#000;border-radius:2px 0 1px 0;font-size:12px;font-weight:bold;color:#fff;text-align:center;line-height:22px;letter-spacing:-0.8px;text-indent:-0.8px">483</div>
<div class="a" style="left:1333px;top:190px;width:31px;height:22px;background:#000;border-radius:2px 0 1px 0;font-size:12px;font-weight:bold;color:#fff;text-align:center;line-height:22px;letter-spacing:-0.8px;text-indent:-0.8px">433</div>
<div class="a" style="left:1333px;top:214px;width:31px;height:22px;background:#000;border-radius:2px 0 1px 0;font-size:12px;font-weight:bold;color:#fff;text-align:center;line-height:22px;letter-spacing:-0.8px;text-indent:-0.8px">383</div>
<div class="a" style="left:1333px;top:238px;width:31px;height:22px;background:#000;border-radius:2px 0 1px 0;font-size:12px;font-weight:bold;color:#fff;text-align:center;line-height:22px;letter-spacing:-0.8px;text-indent:-0.8px">333</div>
<div class="a" style="left:1333px;top:262px;width:31px;height:22px;background:#000;border-radius:2px 0 1px 0;font-size:12px;font-weight:bold;color:#fff;text-align:center;line-height:22px;letter-spacing:-0.8px;text-indent:-0.8px">283</div>
<div class="a" style="left:1333px;top:286px;width:31px;height:22px;background:#000;border-radius:2px 0 1px 0;font-size:12px;font-weight:bold;color:#fff;text-align:center;line-height:22px;letter-spacing:-0.8px;text-indent:-0.8px">233</div>
<div class="a" style="left:1333px;top:310px;width:31px;height:22px;background:#000;border-radius:2px 0 1px 0;font-size:12px;font-weight:bold;color:#fff;text-align:center;line-height:22px;letter-spacing:-0.8px;text-indent:-0.8px">183</div>
<div class="a" style="left:1333px;top:334px;width:31px;height:22px;background:#000;border-radius:2px 0 1px 0;font-size:12px;font-weight:bold;color:#fff;text-align:center;line-height:22px;letter-spacing:-0.8px;text-indent:-0.8px">133</div>
<div class="a" style="left:1371px;top:164px;width:37px;height:195px;background:#fff"></div>
<div class="a" style="left:1374px;top:166px;width:31px;height:22px;background:#000;border-radius:2px 0 1px 0;font-size:12px;font-weight:bold;color:#fff;text-align:center;line-height:22px;letter-spacing:-0.8px;text-indent:-0.8px">485</div>
<div class="a" style="left:1374px;top:190px;width:31px;height:22px;background:#000;border-radius:2px 0 1px 0;font-size:12px;font-weight:bold;color:#fff;text-align:center;line-height:22px;letter-spacing:-0.8px;text-indent:-0.8px">435</div>
<div class="a" style="left:1374px;top:214px;width:31px;height:22px;background:#000;border-radius:2px 0 1px 0;font-size:12px;font-weight:bold;color:#fff;text-align:center;line-height:22px;letter-spacing:-0.8px;text-indent:-0.8px">385</div>
<div class="a" style="left:1374px;top:238px;width:31px;height:22px;background:#000;border-radius:2px 0 1px 0;font-size:12px;font-weight:bold;color:#fff;text-align:center;line-height:22px;letter-spacing:-0.8px;text-indent:-0.8px">335</div>
<div class="a" style="left:1374px;top:262px;width:31px;height:22px;background:#000;border-radius:2px 0 1px 0;font-size:12px;font-weight:bold;color:#fff;text-align:center;line-height:22px;letter-spacing:-0.8px;text-indent:-0.8px">285</div>
<div class="a" style="left:1374px;top:286px;width:31px;height:22px;background:#000;border-radius:2px 0 1px 0;font-size:12px;font-weight:bold;color:#fff;text-align:center;line-height:22px;letter-spacing:-0.8px;text-indent:-0.8px">235</div>
<div class="a" style="left:1374px;top:310px;width:31px;height:22px;background:#000;border-radius:2px 0 1px 0;font-size:12px;font-weight:bold;color:#fff;text-align:center;line-height:22px;letter-spacing:-0.8px;text-indent:-0.8px">185</div>
<div class="a" style="left:1374px;top:334px;width:31px;height:22px;background:#000;border-radius:2px 0 1px 0;font-size:12px;font-weight:bold;color:#fff;text-align:center;line-height:22px;letter-spacing:-0.8px;text-indent:-0.8px">135</div>
<div class="a" style="left:1413px;top:164px;width:37px;height:195px;background:#fff"></div>
<div class="a" style="left:1416px;top:166px;width:31px;height:22px;background:#000;border-radius:2px 0 1px 0;font-size:12px;font-weight:bold;color:#fff;text-align:center;line-height:22px;letter-spacing:-0.8px;text-indent:-0.8px">487</div>
<div class="a" style="left:1416px;top:190px;width:31px;height:22px;background:#000;border-radius:2px 0 1px 0;font-size:12px;font-weight:bold;color:#fff;text-align:center;line-height:22px;letter-spacing:-0.8px;text-indent:-0.8px">437</div>
<div class="a" style="left:1416px;top:214px;width:31px;height:22px;background:#000;border-radius:2px 0 1px 0;font-size:12px;font-weight:bold;color:#fff;text-align:center;line-height:22px;letter-spacing:-0.8px;text-indent:-0.8px">387</div>
<div class="a" style="left:1416px;top:238px;width:31px;height:22px;background:#000;border-radius:2px 0 1px 0;font-size:12px;font-weight:bold;color:#fff;text-align:center;line-height:22px;letter-spacing:-0.8px;text-indent:-0.8px">337</div>
<div class="a" style="left:1416px;top:262px;width:31px;height:22px;background:#000;border-radius:2px 0 1px 0;font-size:12px;font-weight:bold;color:#fff;text-align:center;line-height:22px;letter-spacing:-0.8px;text-indent:-0.8px">287</div>
<div class="a" style="left:1416px;top:286px;width:31px;height:22px;background:#000;border-radius:2px 0 1px 0;font-size:12px;font-weight:bold;color:#fff;text-align:center;line-height:22px;letter-spacing:-0.8px;text-indent:-0.8px">237</div>
<div class="a" style="left:1416px;top:310px;width:31px;height:22px;background:#000;border-radius:2px 0 1px 0;font-size:12px;font-weight:bold;color:#fff;text-align:center;line-height:22px;letter-spacing:-0.8px;text-indent:-0.8px">187</div>
<div class="a" style="left:1416px;top:334px;width:31px;height:22px;background:#000;border-radius:2px 0 1px 0;font-size:12px;font-weight:bold;color:#fff;text-align:center;line-height:22px;letter-spacing:-0.8px;text-indent:-0.8px">137</div>
<div class="a" style="left:1454px;top:164px;width:37px;height:195px;background:#fff"></div>
<div class="a" style="left:1457px;top:166px;width:31px;height:22px;background:#000;border-radius:2px 0 1px 0;font-size:12px;font-weight:bold;color:#fff;text-align:center;line-height:22px;letter-spacing:-0.8px;text-indent:-0.8px">489</div>
<div class="a" style="left:1457px;top:190px;width:31px;height:22px;background:#000;border-radius:2px 0 1px 0;font-size:12px;font-weight:bold;color:#fff;text-align:center;line-height:22px;letter-spacing:-0.8px;text-indent:-0.8px">439</div>
<div class="a" style="left:1457px;top:214px;width:31px;height:22px;background:#000;border-radius:2px 0 1px 0;font-size:12px;font-weight:bold;color:#fff;text-align:center;line-height:22px;letter-spacing:-0.8px;text-indent:-0.8px">389</div>
<div class="a" style="left:1457px;top:238px;width:31px;height:22px;background:#000;border-radius:2px 0 1px 0;font-size:12px;font-weight:bold;color:#fff;text-align:center;line-height:22px;letter-spacing:-0.8px;text-indent:-0.8px">339</div>
<div class="a" style="left:1457px;top:262px;width:31px;height:22px;background:#000;border-radius:2px 0 1px 0;font-size:12px;font-weight:bold;color:#fff;text-align:center;line-height:22px;letter-spacing:-0.8px;text-indent:-0.8px">289</div>
<div class="a" style="left:1457px;top:286px;width:31px;height:22px;background:#000;border-radius:2px 0 1px 0;font-size:12px;font-weight:bold;color:#fff;text-align:center;line-height:22px;letter-spacing:-0.8px;text-indent:-0.8px">239</div>
<div class="a" style="left:1457px;top:310px;width:31px;height:22px;background:#000;border-radius:2px 0 1px 0;font-size:12px;font-weight:bold;color:#fff;text-align:center;line-height:22px;letter-spacing:-0.8px;text-indent:-0.8px">189</div>
<div class="a" style="left:1457px;top:334px;width:31px;height:22px;background:#000;border-radius:2px 0 1px 0;font-size:12px;font-weight:bold;color:#fff;text-align:center;line-height:22px;letter-spacing:-0.8px;text-indent:-0.8px">139</div>
<div class="a" style="left:1496px;top:164px;width:37px;height:195px;background:#fff"></div>
<div class="a" style="left:1499px;top:166px;width:31px;height:22px;background:#000;border-radius:2px 0 1px 0;font-size:12px;font-weight:bold;color:#fff;text-align:center;line-height:22px;letter-spacing:-0.8px;text-indent:-0.8px">491</div>
<div class="a" style="left:1499px;top:190px;width:31px;height:22px;background:#000;border-radius:2px 0 1px 0;font-size:12px;font-weight:bold;color:#fff;text-align:center;line-height:22px;letter-spacing:-0.8px;text-indent:-0.8px">441</div>
<div class="a" style="left:1499px;top:214px;width:31px;height:22px;background:#000;border-radius:2px 0 1px 0;font-size:12px;font-weight:bold;color:#fff;text-align:center;line-height:22px;letter-spacing:-0.8px;text-indent:-0.8px">391</div>
<div class="a" style="left:1499px;top:238px;width:31px;height:22px;background:#000;border-radius:2px 0 1px 0;font-size:12px;font-weight:bold;color:#fff;text-align:center;line-height:22px;letter-spacing:-0.8px;text-indent:-0.8px">341</div>
<div class="a" style="left:1499px;top:262px;width:31px;height:22px;background:#000;border-radius:2px 0 1px 0;font-size:12px;font-weight:bold;color:#fff;text-align:center;line-height:22px;letter-spacing:-0.8px;text-indent:-0.8px">291</div>
<div class="a" style="left:1499px;top:286px;width:31px;height:22px;background:#000;border-radius:2px 0 1px 0;font-size:12px;font-weight:bold;color:#fff;text-align:center;line-height:22px;letter-spacing:-0.8px;text-indent:-0.8px">241</div>
<div class="a" style="left:1499px;top:310px;width:31px;height:22px;background:#000;border-radius:2px 0 1px 0;font-size:12px;font-weight:bold;color:#fff;text-align:center;line-height:22px;letter-spacing:-0.8px;text-indent:-0.8px">191</div>
<div class="a" style="left:1499px;top:334px;width:31px;height:22px;background:#000;border-radius:2px 0 1px 0;font-size:12px;font-weight:bold;color:#fff;text-align:center;line-height:22px;letter-spacing:-0.8px;text-indent:-0.8px">141</div>
<div class="a" style="left:1537px;top:164px;width:37px;height:195px;background:#fff"></div>
<div class="a" style="left:1540px;top:166px;width:31px;height:22px;background:#000;border-radius:2px 0 1px 0;font-size:12px;font-weight:bold;color:#fff;text-align:center;line-height:22px;letter-spacing:-0.8px;text-indent:-0.8px">493</div>
<div class="a" style="left:1540px;top:190px;width:31px;height:22px;background:#000;border-radius:2px 0 1px 0;font-size:12px;font-weight:bold;color:#fff;text-align:center;line-height:22px;letter-spacing:-0.8px;text-indent:-0.8px">443</div>
<div class="a" style="left:1540px;top:214px;width:31px;height:22px;background:#000;border-radius:2px 0 1px 0;font-size:12px;font-weight:bold;color:#fff;text-align:center;line-height:22px;letter-spacing:-0.8px;text-indent:-0.8px">393</div>
<div class="a" style="left:1540px;top:238px;width:31px;height:22px;background:#000;border-radius:2px 0 1px 0;font-size:12px;font-weight:bold;color:#fff;text-align:center;line-height:22px;letter-spacing:-0.8px;text-indent:-0.8px">343</div>
<div class="a" style="left:1540px;top:262px;width:31px;height:22px;background:#000;border-radius:2px 0 1px 0;font-size:12px;font-weight:bold;color:#fff;text-align:center;line-height:22px;letter-spacing:-0.8px;text-indent:-0.8px">293</div>
<div class="a" style="left:1540px;top:286px;width:31px;height:22px;background:#000;border-radius:2px 0 1px 0;font-size:12px;font-weight:bold;color:#fff;text-align:center;line-height:22px;letter-spacing:-0.8px;text-indent:-0.8px">243</div>
<div class="a" style="left:1540px;top:310px;width:31px;height:22px;background:#000;border-radius:2px 0 1px 0;font-size:12px;font-weight:bold;color:#fff;text-align:center;line-height:22px;letter-spacing:-0.8px;text-indent:-0.8px">193</div>
<div class="a" style="left:1540px;top:334px;width:31px;height:22px;background:#000;border-radius:2px 0 1px 0;font-size:12px;font-weight:bold;color:#fff;text-align:center;line-height:22px;letter-spacing:-0.8px;text-indent:-0.8px">143</div>
<div class="a" style="left:1578px;top:164px;width:37px;height:195px;background:#fff"></div>
<div class="a" style="left:1581px;top:166px;width:31px;height:22px;background:#000;border-radius:2px 0 1px 0;font-size:12px;font-weight:bold;color:#fff;text-align:center;line-height:22px;letter-spacing:-0.8px;text-indent:-0.8px">495</div>
<div class="a" style="left:1581px;top:190px;width:31px;height:22px;background:#000;border-radius:2px 0 1px 0;font-size:12px;font-weight:bold;color:#fff;text-align:center;line-height:22px;letter-spacing:-0.8px;text-indent:-0.8px">445</div>
<div class="a" style="left:1581px;top:214px;width:31px;height:22px;background:#000;border-radius:2px 0 1px 0;font-size:12px;font-weight:bold;color:#fff;text-align:center;line-height:22px;letter-spacing:-0.8px;text-indent:-0.8px">395</div>
<div class="a" style="left:1581px;top:238px;width:31px;height:22px;background:#000;border-radius:2px 0 1px 0;font-size:12px;font-weight:bold;color:#fff;text-align:center;line-height:22px;letter-spacing:-0.8px;text-indent:-0.8px">345</div>
<div class="a" style="left:1581px;top:262px;width:31px;height:22px;background:#000;border-radius:2px 0 1px 0;font-size:12px;font-weight:bold;color:#fff;text-align:center;line-height:22px;letter-spacing:-0.8px;text-indent:-0.8px">295</div>
<div class="a" style="left:1581px;top:286px;width:31px;height:22px;background:#000;border-radius:2px 0 1px 0;font-size:12px;font-weight:bold;color:#fff;text-align:center;line-height:22px;letter-spacing:-0.8px;text-indent:-0.8px">245</div>
<div class="a" style="left:1581px;top:310px;width:31px;height:22px;background:#000;border-radius:2px 0 1px 0;font-size:12px;font-weight:bold;color:#fff;text-align:center;line-height:22px;letter-spacing:-0.8px;text-indent:-0.8px">195</div>
<div class="a" style="left:1581px;top:334px;width:31px;height:22px;background:#000;border-radius:2px 0 1px 0;font-size:12px;font-weight:bold;color:#fff;text-align:center;line-height:22px;letter-spacing:-0.8px;text-indent:-0.8px">145</div>
<div class="a" style="left:1620px;top:164px;width:37px;height:195px;background:#fff"></div>
<div class="a" style="left:1623px;top:166px;width:31px;height:22px;background:#000;border-radius:2px 0 1px 0;font-size:12px;font-weight:bold;color:#fff;text-align:center;line-height:22px;letter-spacing:-0.8px;text-indent:-0.8px">497</div>
<div class="a" style="left:1623px;top:190px;width:31px;height:22px;background:#000;border-radius:2px 0 1px 0;font-size:12px;font-weight:bold;color:#fff;text-align:center;line-height:22px;letter-spacing:-0.8px;text-indent:-0.8px">447</div>
<div class="a" style="left:1623px;top:214px;width:31px;height:22px;background:#000;border-radius:2px 0 1px 0;font-size:12px;font-weight:bold;color:#fff;text-align:center;line-height:22px;letter-spacing:-0.8px;text-indent:-0.8px">397</div>
<div class="a" style="left:1623px;top:238px;width:31px;height:22px;background:#000;border-radius:2px 0 1px 0;font-size:12px;font-weight:bold;color:#fff;text-align:center;line-height:22px;letter-spacing:-0.8px;text-indent:-0.8px">347</div>
<div class="a" style="left:1623px;top:262px;width:31px;height:22px;background:#000;border-radius:2px 0 1px 0;font-size:12px;font-weight:bold;color:#fff;text-align:center;line-height:22px;letter-spacing:-0.8px;text-indent:-0.8px">297</div>
<div class="a" style="left:1623px;top:286px;width:31px;height:22px;background:#000;border-radius:2px 0 1px 0;font-size:12px;font-weight:bold;color:#fff;text-align:center;line-height:22px;letter-spacing:-0.8px;text-indent:-0.8px">247</div>
<div class="a" style="left:1623px;top:310px;width:31px;height:22px;background:#000;border-radius:2px 0 1px 0;font-size:12px;font-weight:bold;color:#fff;text-align:center;line-height:22px;letter-spacing:-0.8px;text-indent:-0.8px">197</div>
<div class="a" style="left:1623px;top:334px;width:31px;height:22px;background:#000;border-radius:2px 0 1px 0;font-size:12px;font-weight:bold;color:#fff;text-align:center;line-height:22px;letter-spacing:-0.8px;text-indent:-0.8px">147</div>
<div class="a" style="left:1661px;top:164px;width:37px;height:195px;background:#fff"></div>
<div class="a" style="left:1664px;top:166px;width:31px;height:22px;background:#000;border-radius:2px 0 1px 0;font-size:12px;font-weight:bold;color:#fff;text-align:center;line-height:22px;letter-spacing:-0.8px;text-indent:-0.8px">499</div>
<div class="a" style="left:1664px;top:190px;width:31px;height:22px;background:#000;border-radius:2px 0 1px 0;font-size:12px;font-weight:bold;color:#fff;text-align:center;line-height:22px;letter-spacing:-0.8px;text-indent:-0.8px">449</div>
<div class="a" style="left:1664px;top:214px;width:31px;height:22px;background:#000;border-radius:2px 0 1px 0;font-size:12px;font-weight:bold;color:#fff;text-align:center;line-height:22px;letter-spacing:-0.8px;text-indent:-0.8px">399</div>
<div class="a" style="left:1664px;top:238px;width:31px;height:22px;background:#000;border-radius:2px 0 1px 0;font-size:12px;font-weight:bold;color:#fff;text-align:center;line-height:22px;letter-spacing:-0.8px;text-indent:-0.8px">349</div>
<div class="a" style="left:1664px;top:262px;width:31px;height:22px;background:#000;border-radius:2px 0 1px 0;font-size:12px;font-weight:bold;color:#fff;text-align:center;line-height:22px;letter-spacing:-0.8px;text-indent:-0.8px">299</div>
<div class="a" style="left:1664px;top:286px;width:31px;height:22px;background:#000;border-radius:2px 0 1px 0;font-size:12px;font-weight:bold;color:#fff;text-align:center;line-height:22px;letter-spacing:-0.8px;text-indent:-0.8px">249</div>
<div class="a" style="left:1664px;top:310px;width:31px;height:22px;background:#000;border-radius:2px 0 1px 0;font-size:12px;font-weight:bold;color:#fff;text-align:center;line-height:22px;letter-spacing:-0.8px;text-indent:-0.8px">199</div>
<div class="a" style="left:1664px;top:334px;width:31px;height:22px;background:#000;border-radius:2px 0 1px 0;font-size:12px;font-weight:bold;color:#fff;text-align:center;line-height:22px;letter-spacing:-0.8px;text-indent:-0.8px">149</div>
<svg style="left:0;top:0" width="1920" height="1033"><defs><radialGradient id="hb1" gradientUnits="userSpaceOnUse" cx="1551.3" cy="295.3" r="11"><stop offset="0" stop-color="#f2f2f2"/><stop offset="0.3" stop-color="#f2f2f2" stop-opacity="0.85"/><stop offset="1" stop-color="#cbcbcb" stop-opacity="0"/></radialGradient></defs><ellipse cx="1556.75" cy="298.85" rx="19.450000000000045" ry="17.049999999999983" fill="#cbcbcb"/><ellipse cx="1556.75" cy="298.85" rx="19.450000000000045" ry="17.049999999999983" fill="url(#hb1)"/></svg>
<div class="a" style="left:555px;top:372px;width:1270px;height:9px;background:linear-gradient(#2a2a2a,#8a8a8a 25%,#d2d2d2 45%,#c8c8c8 55%,#6a6a6a 80%,#1a1a1a)"></div>
<svg style="left:0;top:0" width="1920" height="1033"><defs><radialGradient id="hb2" gradientUnits="userSpaceOnUse" cx="611.2" cy="375" r="12"><stop offset="0" stop-color="#dedede"/><stop offset="0.3" stop-color="#dedede" stop-opacity="0.85"/><stop offset="1" stop-color="#888888" stop-opacity="0"/></radialGradient></defs><ellipse cx="617.0999999999999" cy="379.20000000000005" rx="20.30000000000001" ry="18.099999999999994" fill="#888888"/><ellipse cx="617.0999999999999" cy="379.20000000000005" rx="20.30000000000001" ry="18.099999999999994" fill="url(#hb2)"/></svg>
<div class="a" style="left:551px;top:398px;width:107px;height:196px;background:#2c2c2c"></div>
<div class="a t" style="left:516px;top:404px;font-size:11px;color:#e6e6e6">Top</div>
<div class="a t" style="left:511px;top:576px;font-size:11px;color:#e6e6e6">Floor</div>
<div class="a" style="left:524px;top:424px;width:1px;height:142px;background:#c8c8c8"></div>
<div class="a" style="left:1706px;top:395px;width:106px;height:196px;background:#2c2c2c"></div>
<div class="a" style="left:677px;top:398px;width:37px;height:195px;background:#fff"></div>
<div class="a" style="left:680px;top:400px;width:31px;height:22px;background:#000;border-radius:2px 0 1px 0;font-size:12px;font-weight:bold;color:#fff;text-align:center;line-height:22px;letter-spacing:-0.8px;text-indent:-0.8px">452</div>
<div class="a" style="left:680px;top:424px;width:31px;height:22px;background:#000;border-radius:2px 0 1px 0;font-size:12px;font-weight:bold;color:#fff;text-align:center;line-height:22px;letter-spacing:-0.8px;text-indent:-0.8px">402</div>
<div class="a" style="left:680px;top:448px;width:31px;height:22px;background:#000;border-radius:2px 0 1px 0;font-size:12px;font-weight:bold;color:#fff;text-align:center;line-height:22px;letter-spacing:-0.8px;text-indent:-0.8px">352</div>
<div class="a" style="left:680px;top:472px;width:31px;height:22px;background:#000;border-radius:2px 0 1px 0;font-size:12px;font-weight:bold;color:#fff;text-align:center;line-height:22px;letter-spacing:-0.8px;text-indent:-0.8px">302</div>
<div class="a" style="left:680px;top:496px;width:31px;height:22px;background:#000;border-radius:2px 0 1px 0;font-size:12px;font-weight:bold;color:#fff;text-align:center;line-height:22px;letter-spacing:-0.8px;text-indent:-0.8px">252</div>
<div class="a" style="left:680px;top:520px;width:31px;height:22px;background:#000;border-radius:2px 0 1px 0;font-size:12px;font-weight:bold;color:#fff;text-align:center;line-height:22px;letter-spacing:-0.8px;text-indent:-0.8px">202</div>
<div class="a" style="left:680px;top:544px;width:31px;height:22px;background:#000;border-radius:2px 0 1px 0;font-size:12px;font-weight:bold;color:#fff;text-align:center;line-height:22px;letter-spacing:-0.8px;text-indent:-0.8px">152</div>
<div class="a" style="left:680px;top:568px;width:31px;height:22px;background:#000;border-radius:2px 0 1px 0;font-size:12px;font-weight:bold;color:#fff;text-align:center;line-height:22px;letter-spacing:-0.8px;text-indent:-0.8px">102</div>
<div class="a" style="left:721px;top:398px;width:37px;height:195px;background:#fff"></div>
<div class="a" style="left:724px;top:400px;width:31px;height:22px;background:#000;border-radius:2px 0 1px 0;font-size:12px;font-weight:bold;color:#fff;text-align:center;line-height:22px;letter-spacing:-0.8px;text-indent:-0.8px">454</div>
<div class="a" style="left:724px;top:424px;width:31px;height:22px;background:#000;border-radius:2px 0 1px 0;font-size:12px;font-weight:bold;color:#fff;text-align:center;line-height:22px;letter-spacing:-0.8px;text-indent:-0.8px">404</div>
<div class="a" style="left:724px;top:448px;width:31px;height:22px;background:#000;border-radius:2px 0 1px 0;font-size:12px;font-weight:bold;color:#fff;text-align:center;line-height:22px;letter-spacing:-0.8px;text-indent:-0.8px">354</div>
<div class="a" style="left:724px;top:472px;width:31px;height:22px;background:#000;border-radius:2px 0 1px 0;font-size:12px;font-weight:bold;color:#fff;text-align:center;line-height:22px;letter-spacing:-0.8px;text-indent:-0.8px">304</div>
<div class="a" style="left:724px;top:496px;width:31px;height:22px;background:#000;border-radius:2px 0 1px 0;font-size:12px;font-weight:bold;color:#fff;text-align:center;line-height:22px;letter-spacing:-0.8px;text-indent:-0.8px">254</div>
<div class="a" style="left:724px;top:520px;width:31px;height:22px;background:#000;border-radius:2px 0 1px 0;font-size:12px;font-weight:bold;color:#fff;text-align:center;line-height:22px;letter-spacing:-0.8px;text-indent:-0.8px">204</div>
<div class="a" style="left:724px;top:544px;width:31px;height:22px;background:#000;border-radius:2px 0 1px 0;font-size:12px;font-weight:bold;color:#fff;text-align:center;line-height:22px;letter-spacing:-0.8px;text-indent:-0.8px">154</div>
<div class="a" style="left:724px;top:568px;width:31px;height:22px;background:#000;border-radius:2px 0 1px 0;font-size:12px;font-weight:bold;color:#fff;text-align:center;line-height:22px;letter-spacing:-0.8px;text-indent:-0.8px">104</div>
<div class="a" style="left:765px;top:398px;width:37px;height:195px;background:#fff"></div>
<div class="a" style="left:768px;top:400px;width:31px;height:22px;background:#000;border-radius:2px 0 1px 0;font-size:12px;font-weight:bold;color:#fff;text-align:center;line-height:22px;letter-spacing:-0.8px;text-indent:-0.8px">456</div>
<div class="a" style="left:768px;top:424px;width:31px;height:22px;background:#000;border-radius:2px 0 1px 0;font-size:12px;font-weight:bold;color:#fff;text-align:center;line-height:22px;letter-spacing:-0.8px;text-indent:-0.8px">406</div>
<div class="a" style="left:768px;top:448px;width:31px;height:22px;background:#000;border-radius:2px 0 1px 0;font-size:12px;font-weight:bold;color:#fff;text-align:center;line-height:22px;letter-spacing:-0.8px;text-indent:-0.8px">356</div>
<div class="a" style="left:768px;top:472px;width:31px;height:22px;background:#000;border-radius:2px 0 1px 0;font-size:12px;font-weight:bold;color:#fff;text-align:center;line-height:22px;letter-spacing:-0.8px;text-indent:-0.8px">306</div>
<div class="a" style="left:768px;top:496px;width:31px;height:22px;background:#000;border-radius:2px 0 1px 0;font-size:12px;font-weight:bold;color:#fff;text-align:center;line-height:22px;letter-spacing:-0.8px;text-indent:-0.8px">256</div>
<div class="a" style="left:768px;top:520px;width:31px;height:22px;background:#000;border-radius:2px 0 1px 0;font-size:12px;font-weight:bold;color:#fff;text-align:center;line-height:22px;letter-spacing:-0.8px;text-indent:-0.8px">206</div>
<div class="a" style="left:768px;top:544px;width:31px;height:22px;background:#000;border-radius:2px 0 1px 0;font-size:12px;font-weight:bold;color:#fff;text-align:center;line-height:22px;letter-spacing:-0.8px;text-indent:-0.8px">156</div>
<div class="a" style="left:768px;top:568px;width:31px;height:22px;background:#000;border-radius:2px 0 1px 0;font-size:12px;font-weight:bold;color:#fff;text-align:center;line-height:22px;letter-spacing:-0.8px;text-indent:-0.8px">106</div>
<div class="a" style="left:810px;top:398px;width:37px;height:195px;background:#fff"></div>
<div class="a" style="left:813px;top:400px;width:31px;height:22px;background:#000;border-radius:2px 0 1px 0;font-size:12px;font-weight:bold;color:#fff;text-align:center;line-height:22px;letter-spacing:-0.8px;text-indent:-0.8px">458</div>
<div class="a" style="left:813px;top:424px;width:31px;height:22px;background:#000;border-radius:2px 0 1px 0;font-size:12px;font-weight:bold;color:#fff;text-align:center;line-height:22px;letter-spacing:-0.8px;text-indent:-0.8px">408</div>
<div class="a" style="left:813px;top:448px;width:31px;height:22px;background:#000;border-radius:2px 0 1px 0;font-size:12px;font-weight:bold;color:#fff;text-align:center;line-height:22px;letter-spacing:-0.8px;text-indent:-0.8px">358</div>
<div class="a" style="left:813px;top:472px;width:31px;height:22px;background:#000;border-radius:2px 0 1px 0;font-size:12px;font-weight:bold;color:#fff;text-align:center;line-height:22px;letter-spacing:-0.8px;text-indent:-0.8px">308</div>
<div class="a" style="left:813px;top:496px;width:31px;height:22px;background:#000;border-radius:2px 0 1px 0;font-size:12px;font-weight:bold;color:#fff;text-align:center;line-height:22px;letter-spacing:-0.8px;text-indent:-0.8px">258</div>
<div class="a" style="left:813px;top:520px;width:31px;height:22px;background:#000;border-radius:2px 0 1px 0;font-size:12px;font-weight:bold;color:#fff;text-align:center;line-height:22px;letter-spacing:-0.8px;text-indent:-0.8px">208</div>
<div class="a" style="left:813px;top:544px;width:31px;height:22px;background:#000;border-radius:2px 0 1px 0;font-size:12px;font-weight:bold;color:#fff;text-align:center;line-height:22px;letter-spacing:-0.8px;text-indent:-0.8px">158</div>
<div class="a" style="left:813px;top:568px;width:31px;height:22px;background:#000;border-radius:2px 0 1px 0;font-size:12px;font-weight:bold;color:#fff;text-align:center;line-height:22px;letter-spacing:-0.8px;text-indent:-0.8px">108</div>
<div class="a" style="left:854px;top:398px;width:37px;height:147px;background:#fff"></div>
<div class="a" style="left:857px;top:400px;width:31px;height:22px;background:#000;border-radius:2px 0 1px 0;font-size:12px;font-weight:bold;color:#fff;text-align:center;line-height:22px;letter-spacing:-0.8px;text-indent:-0.8px">460</div>
<div class="a" style="left:857px;top:424px;width:31px;height:22px;background:#000;border-radius:2px 0 1px 0;font-size:12px;font-weight:bold;color:#fff;text-align:center;line-height:22px;letter-spacing:-0.8px;text-indent:-0.8px">410</div>
<div class="a" style="left:857px;top:448px;width:31px;height:22px;background:#000;border-radius:2px 0 1px 0;font-size:12px;font-weight:bold;color:#fff;text-align:center;line-height:22px;letter-spacing:-0.8px;text-indent:-0.8px">360</div>
<div class="a" style="left:857px;top:472px;width:31px;height:22px;background:#000;border-radius:2px 0 1px 0;font-size:12px;font-weight:bold;color:#fff;text-align:center;line-height:22px;letter-spacing:-0.8px;text-indent:-0.8px">310</div>
<div class="a" style="left:857px;top:496px;width:31px;height:22px;background:#000;border-radius:2px 0 1px 0;font-size:12px;font-weight:bold;color:#fff;text-align:center;line-height:22px;letter-spacing:-0.8px;text-indent:-0.8px">260</div>
<div class="a" style="left:857px;top:520px;width:31px;height:22px;background:#000;border-radius:2px 0 1px 0;font-size:12px;font-weight:bold;color:#fff;text-align:center;line-height:22px;letter-spacing:-0.8px;text-indent:-0.8px">210</div>
<div class="a" style="left:898px;top:398px;width:37px;height:147px;background:#fff"></div>
<div class="a" style="left:901px;top:400px;width:31px;height:22px;background:#000;border-radius:2px 0 1px 0;font-size:12px;font-weight:bold;color:#fff;text-align:center;line-height:22px;letter-spacing:-0.8px;text-indent:-0.8px">462</div>
<div class="a" style="left:901px;top:424px;width:31px;height:22px;background:#000;border-radius:2px 0 1px 0;font-size:12px;font-weight:bold;color:#fff;text-align:center;line-height:22px;letter-spacing:-0.8px;text-indent:-0.8px">412</div>
<div class="a" style="left:901px;top:448px;width:31px;height:22px;background:#000;border-radius:2px 0 1px 0;font-size:12px;font-weight:bold;color:#fff;text-align:center;line-height:22px;letter-spacing:-0.8px;text-indent:-0.8px">362</div>
<div class="a" style="left:901px;top:472px;width:31px;height:22px;background:#000;border-radius:2px 0 1px 0;font-size:12px;font-weight:bold;color:#fff;text-align:center;line-height:22px;letter-spacing:-0.8px;text-indent:-0.8px">312</div>
<div class="a" style="left:901px;top:496px;width:31px;height:22px;background:#000;border-radius:2px 0 1px 0;font-size:12px;font-weight:bold;color:#fff;text-align:center;line-height:22px;letter-spacing:-0.8px;text-indent:-0.8px">262</div>
<div class="a" style="left:901px;top:520px;width:31px;height:22px;background:#000;border-radius:2px 0 1px 0;font-size:12px;font-weight:bold;color:#fff;text-align:center;line-height:22px;letter-spacing:-0.8px;text-indent:-0.8px">212</div>
<div class="a" style="left:942px;top:398px;width:37px;height:195px;background:#fff"></div>
<div class="a" style="left:945px;top:400px;width:31px;height:22px;background:#000;border-radius:2px 0 1px 0;font-size:12px;font-weight:bold;color:#fff;text-align:center;line-height:22px;letter-spacing:-0.8px;text-indent:-0.8px">464</div>
<div class="a" style="left:945px;top:424px;width:31px;height:22px;background:#000;border-radius:2px 0 1px 0;font-size:12px;font-weight:bold;color:#fff;text-align:center;line-height:22px;letter-spacing:-0.8px;text-indent:-0.8px">414</div>
<div class="a" style="left:945px;top:448px;width:31px;height:22px;background:#000;border-radius:2px 0 1px 0;font-size:12px;font-weight:bold;color:#fff;text-align:center;line-height:22px;letter-spacing:-0.8px;text-indent:-0.8px">364</div>
<div class="a" style="left:945px;top:472px;width:31px;height:22px;background:#000;border-radius:2px 0 1px 0;font-size:12px;font-weight:bold;color:#fff;text-align:center;line-height:22px;letter-spacing:-0.8px;text-indent:-0.8px">314</div>
<div class="a" style="left:945px;top:496px;width:31px;height:22px;background:#000;border-radius:2px 0 1px 0;font-size:12px;font-weight:bold;color:#fff;text-align:center;line-height:22px;letter-spacing:-0.8px;text-indent:-0.8px">264</div>
<div class="a" style="left:945px;top:520px;width:31px;height:22px;background:#000;border-radius:2px 0 1px 0;font-size:12px;font-weight:bold;color:#fff;text-align:center;line-height:22px;letter-spacing:-0.8px;text-indent:-0.8px">214</div>
<div class="a" style="left:945px;top:544px;width:31px;height:22px;background:#000;border-radius:2px 0 1px 0;font-size:12px;font-weight:bold;color:#fff;text-align:center;line-height:22px;letter-spacing:-0.8px;text-indent:-0.8px">164</div>
<div class="a" style="left:945px;top:568px;width:31px;height:22px;background:#000;border-radius:2px 0 1px 0;font-size:12px;font-weight:bold;color:#fff;text-align:center;line-height:22px;letter-spacing:-0.8px;text-indent:-0.8px">114</div>
<div class="a" style="left:987px;top:398px;width:37px;height:195px;background:#fff"></div>
<div class="a" style="left:990px;top:400px;width:31px;height:22px;background:#000;border-radius:2px 0 1px 0;font-size:12px;font-weight:bold;color:#fff;text-align:center;line-height:22px;letter-spacing:-0.8px;text-indent:-0.8px">466</div>
<div class="a" style="left:990px;top:424px;width:31px;height:22px;background:#000;border-radius:2px 0 1px 0;font-size:12px;font-weight:bold;color:#fff;text-align:center;line-height:22px;letter-spacing:-0.8px;text-indent:-0.8px">416</div>
<div class="a" style="left:990px;top:448px;width:31px;height:22px;background:#000;border-radius:2px 0 1px 0;font-size:12px;font-weight:bold;color:#fff;text-align:center;line-height:22px;letter-spacing:-0.8px;text-indent:-0.8px">366</div>
<div class="a" style="left:990px;top:472px;width:31px;height:22px;background:#000;border-radius:2px 0 1px 0;font-size:12px;font-weight:bold;color:#fff;text-align:center;line-height:22px;letter-spacing:-0.8px;text-indent:-0.8px">316</div>
<div class="a" style="left:990px;top:496px;width:31px;height:22px;background:#000;border-radius:2px 0 1px 0;font-size:12px;font-weight:bold;color:#fff;text-align:center;line-height:22px;letter-spacing:-0.8px;text-indent:-0.8px">266</div>
<div class="a" style="left:990px;top:520px;width:31px;height:22px;background:#000;border-radius:2px 0 1px 0;font-size:12px;font-weight:bold;color:#fff;text-align:center;line-height:22px;letter-spacing:-0.8px;text-indent:-0.8px">216</div>
<div class="a" style="left:990px;top:544px;width:31px;height:22px;background:#000;border-radius:2px 0 1px 0;font-size:12px;font-weight:bold;color:#fff;text-align:center;line-height:22px;letter-spacing:-0.8px;text-indent:-0.8px">166</div>
<div class="a" style="left:990px;top:568px;width:31px;height:22px;background:#000;border-radius:2px 0 1px 0;font-size:12px;font-weight:bold;color:#fff;text-align:center;line-height:22px;letter-spacing:-0.8px;text-indent:-0.8px">116</div>
<div class="a" style="left:1031px;top:398px;width:37px;height:195px;background:#fff"></div>
<div class="a" style="left:1034px;top:400px;width:31px;height:22px;background:#000;border-radius:2px 0 1px 0;font-size:12px;font-weight:bold;color:#fff;text-align:center;line-height:22px;letter-spacing:-0.8px;text-indent:-0.8px">468</div>
<div class="a" style="left:1034px;top:424px;width:31px;height:22px;background:#000;border-radius:2px 0 1px 0;font-size:12px;font-weight:bold;color:#fff;text-align:center;line-height:22px;letter-spacing:-0.8px;text-indent:-0.8px">418</div>
<div class="a" style="left:1034px;top:448px;width:31px;height:22px;background:#000;border-radius:2px 0 1px 0;font-size:12px;font-weight:bold;color:#fff;text-align:center;line-height:22px;letter-spacing:-0.8px;text-indent:-0.8px">368</div>
<div class="a" style="left:1034px;top:472px;width:31px;height:22px;background:#000;border-radius:2px 0 1px 0;font-size:12px;font-weight:bold;color:#fff;text-align:center;line-height:22px;letter-spacing:-0.8px;text-indent:-0.8px">318</div>
<div class="a" style="left:1034px;top:496px;width:31px;height:22px;background:#000;border-radius:2px 0 1px 0;font-size:12px;font-weight:bold;color:#fff;text-align:center;line-height:22px;letter-spacing:-0.8px;text-indent:-0.8px">268</div>
<div class="a" style="left:1034px;top:520px;width:31px;height:22px;background:#000;border-radius:2px 0 1px 0;font-size:12px;font-weight:bold;color:#fff;text-align:center;line-height:22px;letter-spacing:-0.8px;text-indent:-0.8px">218</div>
<div class="a" style="left:1034px;top:544px;width:31px;height:22px;background:#000;border-radius:2px 0 1px 0;font-size:12px;font-weight:bold;color:#fff;text-align:center;line-height:22px;letter-spacing:-0.8px;text-indent:-0.8px">168</div>
<div class="a" style="left:1034px;top:568px;width:31px;height:22px;background:#000;border-radius:2px 0 1px 0;font-size:12px;font-weight:bold;color:#fff;text-align:center;line-height:22px;letter-spacing:-0.8px;text-indent:-0.8px">118</div>
<div class="a" style="left:1075px;top:398px;width:37px;height:195px;background:#fff"></div>
<div class="a" style="left:1078px;top:400px;width:31px;height:22px;background:#000;border-radius:2px 0 1px 0;font-size:12px;font-weight:bold;color:#fff;text-align:center;line-height:22px;letter-spacing:-0.8px;text-indent:-0.8px">470</div>
<div class="a" style="left:1078px;top:424px;width:31px;height:22px;background:#000;border-radius:2px 0 1px 0;font-size:12px;font-weight:bold;color:#fff;text-align:center;line-height:22px;letter-spacing:-0.8px;text-indent:-0.8px">420</div>
<div class="a" style="left:1078px;top:448px;width:31px;height:22px;background:#000;border-radius:2px 0 1px 0;font-size:12px;font-weight:bold;color:#fff;text-align:center;line-height:22px;letter-spacing:-0.8px;text-indent:-0.8px">370</div>
<div class="a" style="left:1078px;top:472px;width:31px;height:22px;background:#000;border-radius:2px 0 1px 0;font-size:12px;font-weight:bold;color:#fff;text-align:center;line-height:22px;letter-spacing:-0.8px;text-indent:-0.8px">320</div>
<div class="a" style="left:1078px;top:496px;width:31px;height:22px;background:#000;border-radius:2px 0 1px 0;font-size:12px;font-weight:bold;color:#fff;text-align:center;line-height:22px;letter-spacing:-0.8px;text-indent:-0.8px">270</div>
<div class="a" style="left:1078px;top:520px;width:31px;height:22px;background:#000;border-radius:2px 0 1px 0;font-size:12px;font-weight:bold;color:#fff;text-align:center;line-height:22px;letter-spacing:-0.8px;text-indent:-0.8px">220</div>
<div class="a" style="left:1078px;top:544px;width:31px;height:22px;background:#000;border-radius:2px 0 1px 0;font-size:12px;font-weight:bold;color:#fff;text-align:center;line-height:22px;letter-spacing:-0.8px;text-indent:-0.8px">170</div>
<div class="a" style="left:1078px;top:568px;width:31px;height:22px;background:#000;border-radius:2px 0 1px 0;font-size:12px;font-weight:bold;color:#fff;text-align:center;line-height:22px;letter-spacing:-0.8px;text-indent:-0.8px">120</div>
<div class="a" style="left:1119px;top:398px;width:37px;height:195px;background:#fff"></div>
<div class="a" style="left:1122px;top:400px;width:31px;height:22px;background:#000;border-radius:2px 0 1px 0;font-size:12px;font-weight:bold;color:#fff;text-align:center;line-height:22px;letter-spacing:-0.8px;text-indent:-0.8px">472</div>
<div class="a" style="left:1122px;top:424px;width:31px;height:22px;background:#000;border-radius:2px 0 1px 0;font-size:12px;font-weight:bold;color:#fff;text-align:center;line-height:22px;letter-spacing:-0.8px;text-indent:-0.8px">422</div>
<div class="a" style="left:1122px;top:448px;width:31px;height:22px;background:#000;border-radius:2px 0 1px 0;font-size:12px;font-weight:bold;color:#fff;text-align:center;line-height:22px;letter-spacing:-0.8px;text-indent:-0.8px">372</div>
<div class="a" style="left:1122px;top:472px;width:31px;height:22px;background:#000;border-radius:2px 0 1px 0;font-size:12px;font-weight:bold;color:#fff;text-align:center;line-height:22px;letter-spacing:-0.8px;text-indent:-0.8px">322</div>
<div class="a" style="left:1122px;top:496px;width:31px;height:22px;background:#000;border-radius:2px 0 1px 0;font-size:12px;font-weight:bold;color:#fff;text-align:center;line-height:22px;letter-spacing:-0.8px;text-indent:-0.8px">272</div>
<div class="a" style="left:1122px;top:520px;width:31px;height:22px;background:#000;border-radius:2px 0 1px 0;font-size:12px;font-weight:bold;color:#fff;text-align:center;line-height:22px;letter-spacing:-0.8px;text-indent:-0.8px">222</div>
<div class="a" style="left:1122px;top:544px;width:31px;height:22px;background:#000;border-radius:2px 0 1px 0;font-size:12px;font-weight:bold;color:#fff;text-align:center;line-height:22px;letter-spacing:-0.8px;text-indent:-0.8px">172</div>
<div class="a" style="left:1122px;top:568px;width:31px;height:22px;background:#000;border-radius:2px 0 1px 0;font-size:12px;font-weight:bold;color:#fff;text-align:center;line-height:22px;letter-spacing:-0.8px;text-indent:-0.8px">122</div>
<div class="a" style="left:1164px;top:398px;width:37px;height:195px;background:#fff"></div>
<div class="a" style="left:1167px;top:400px;width:31px;height:22px;background:#000;border-radius:2px 0 1px 0;font-size:12px;font-weight:bold;color:#fff;text-align:center;line-height:22px;letter-spacing:-0.8px;text-indent:-0.8px">474</div>
<div class="a" style="left:1167px;top:424px;width:31px;height:22px;background:#000;border-radius:2px 0 1px 0;font-size:12px;font-weight:bold;color:#fff;text-align:center;line-height:22px;letter-spacing:-0.8px;text-indent:-0.8px">424</div>
<div class="a" style="left:1167px;top:448px;width:31px;height:22px;background:#000;border-radius:2px 0 1px 0;font-size:12px;font-weight:bold;color:#fff;text-align:center;line-height:22px;letter-spacing:-0.8px;text-indent:-0.8px">374</div>
<div class="a" style="left:1167px;top:472px;width:31px;height:22px;background:#000;border-radius:2px 0 1px 0;font-size:12px;font-weight:bold;color:#fff;text-align:center;line-height:22px;letter-spacing:-0.8px;text-indent:-0.8px">324</div>
<div class="a" style="left:1167px;top:496px;width:31px;height:22px;background:#000;border-radius:2px 0 1px 0;font-size:12px;font-weight:bold;color:#fff;text-align:center;line-height:22px;letter-spacing:-0.8px;text-indent:-0.8px">274</div>
<div class="a" style="left:1167px;top:520px;width:31px;height:22px;background:#000;border-radius:2px 0 1px 0;font-size:12px;font-weight:bold;color:#fff;text-align:center;line-height:22px;letter-spacing:-0.8px;text-indent:-0.8px">224</div>
<div class="a" style="left:1167px;top:544px;width:31px;height:22px;background:#000;border-radius:2px 0 1px 0;font-size:12px;font-weight:bold;color:#fff;text-align:center;line-height:22px;letter-spacing:-0.8px;text-indent:-0.8px">174</div>
<div class="a" style="left:1167px;top:568px;width:31px;height:22px;background:#000;border-radius:2px 0 1px 0;font-size:12px;font-weight:bold;color:#fff;text-align:center;line-height:22px;letter-spacing:-0.8px;text-indent:-0.8px">124</div>
<div class="a" style="left:1208px;top:398px;width:37px;height:195px;background:#fff"></div>
<div class="a" style="left:1211px;top:400px;width:31px;height:22px;background:#000;border-radius:2px 0 1px 0;font-size:12px;font-weight:bold;color:#fff;text-align:center;line-height:22px;letter-spacing:-0.8px;text-indent:-0.8px">476</div>
<div class="a" style="left:1211px;top:424px;width:31px;height:22px;background:#000;border-radius:2px 0 1px 0;font-size:12px;font-weight:bold;color:#fff;text-align:center;line-height:22px;letter-spacing:-0.8px;text-indent:-0.8px">426</div>
<div class="a" style="left:1211px;top:448px;width:31px;height:22px;background:#000;border-radius:2px 0 1px 0;font-size:12px;font-weight:bold;color:#fff;text-align:center;line-height:22px;letter-spacing:-0.8px;text-indent:-0.8px">376</div>
<div class="a" style="left:1211px;top:472px;width:31px;height:22px;background:#000;border-radius:2px 0 1px 0;font-size:12px;font-weight:bold;color:#fff;text-align:center;line-height:22px;letter-spacing:-0.8px;text-indent:-0.8px">326</div>
<div class="a" style="left:1211px;top:496px;width:31px;height:22px;background:#000;border-radius:2px 0 1px 0;font-size:12px;font-weight:bold;color:#fff;text-align:center;line-height:22px;letter-spacing:-0.8px;text-indent:-0.8px">276</div>
<div class="a" style="left:1211px;top:520px;width:31px;height:22px;background:#000;border-radius:2px 0 1px 0;font-size:12px;font-weight:bold;color:#fff;text-align:center;line-height:22px;letter-spacing:-0.8px;text-indent:-0.8px">226</div>
<div class="a" style="left:1211px;top:544px;width:31px;height:22px;background:#000;border-radius:2px 0 1px 0;font-size:12px;font-weight:bold;color:#fff;text-align:center;line-height:22px;letter-spacing:-0.8px;text-indent:-0.8px">176</div>
<div class="a" style="left:1211px;top:568px;width:31px;height:22px;background:#000;border-radius:2px 0 1px 0;font-size:12px;font-weight:bold;color:#fff;text-align:center;line-height:22px;letter-spacing:-0.8px;text-indent:-0.8px">126</div>
<div class="a" style="left:1252px;top:398px;width:37px;height:195px;background:#fff"></div>
<div class="a" style="left:1255px;top:400px;width:31px;height:22px;background:#000;border-radius:2px 0 1px 0;font-size:12px;font-weight:bold;color:#fff;text-align:center;line-height:22px;letter-spacing:-0.8px;text-indent:-0.8px">478</div>
<div class="a" style="left:1255px;top:424px;width:31px;height:22px;background:#000;border-radius:2px 0 1px 0;font-size:12px;font-weight:bold;color:#fff;text-align:center;line-height:22px;letter-spacing:-0.8px;text-indent:-0.8px">428</div>
<div class="a" style="left:1255px;top:448px;width:31px;height:22px;background:#000;border-radius:2px 0 1px 0;font-size:12px;font-weight:bold;color:#fff;text-align:center;line-height:22px;letter-spacing:-0.8px;text-indent:-0.8px">378</div>
<div class="a" style="left:1255px;top:472px;width:31px;height:22px;background:#000;border-radius:2px 0 1px 0;font-size:12px;font-weight:bold;color:#fff;text-align:center;line-height:22px;letter-spacing:-0.8px;text-indent:-0.8px">328</div>
<div class="a" style="left:1255px;top:496px;width:31px;height:22px;background:#000;border-radius:2px 0 1px 0;font-size:12px;font-weight:bold;color:#fff;text-align:center;line-height:22px;letter-spacing:-0.8px;text-indent:-0.8px">278</div>
<div class="a" style="left:1255px;top:520px;width:31px;height:22px;background:#000;border-radius:2px 0 1px 0;font-size:12px;font-weight:bold;color:#fff;text-align:center;line-height:22px;letter-spacing:-0.8px;text-indent:-0.8px">228</div>
<div class="a" style="left:1255px;top:544px;width:31px;height:22px;background:#000;border-radius:2px 0 1px 0;font-size:12px;font-weight:bold;color:#fff;text-align:center;line-height:22px;letter-spacing:-0.8px;text-indent:-0.8px">178</div>
<div class="a" style="left:1255px;top:568px;width:31px;height:22px;background:#000;border-radius:2px 0 1px 0;font-size:12px;font-weight:bold;color:#fff;text-align:center;line-height:22px;letter-spacing:-0.8px;text-indent:-0.8px">128</div>
<div class="a" style="left:1296px;top:398px;width:37px;height:195px;background:#fff"></div>
<div class="a" style="left:1299px;top:400px;width:31px;height:22px;background:#000;border-radius:2px 0 1px 0;font-size:12px;font-weight:bold;color:#fff;text-align:center;line-height:22px;letter-spacing:-0.8px;text-indent:-0.8px">480</div>
<div class="a" style="left:1299px;top:424px;width:31px;height:22px;background:#000;border-radius:2px 0 1px 0;font-size:12px;font-weight:bold;color:#fff;text-align:center;line-height:22px;letter-spacing:-0.8px;text-indent:-0.8px">430</div>
<div class="a" style="left:1299px;top:448px;width:31px;height:22px;background:#000;border-radius:2px 0 1px 0;font-size:12px;font-weight:bold;color:#fff;text-align:center;line-height:22px;letter-spacing:-0.8px;text-indent:-0.8px">380</div>
<div class="a" style="left:1299px;top:472px;width:31px;height:22px;background:#000;border-radius:2px 0 1px 0;font-size:12px;font-weight:bold;color:#fff;text-align:center;line-height:22px;letter-spacing:-0.8px;text-indent:-0.8px">330</div>
<div class="a" style="left:1299px;top:496px;width:31px;height:22px;background:#000;border-radius:2px 0 1px 0;font-size:12px;font-weight:bold;color:#fff;text-align:center;line-height:22px;letter-spacing:-0.8px;text-indent:-0.8px">280</div>
<div class="a" style="left:1299px;top:520px;width:31px;height:22px;background:#000;border-radius:2px 0 1px 0;font-size:12px;font-weight:bold;color:#fff;text-align:center;line-height:22px;letter-spacing:-0.8px;text-indent:-0.8px">230</div>
<div class="a" style="left:1299px;top:544px;width:31px;height:22px;background:#000;border-radius:2px 0 1px 0;font-size:12px;font-weight:bold;color:#fff;text-align:center;line-height:22px;letter-spacing:-0.8px;text-indent:-0.8px">180</div>
<div class="a" style="left:1299px;top:568px;width:31px;height:22px;background:#000;border-radius:2px 0 1px 0;font-size:12px;font-weight:bold;color:#fff;text-align:center;line-height:22px;letter-spacing:-0.8px;text-indent:-0.8px">130</div>
<div class="a" style="left:1340px;top:398px;width:37px;height:195px;background:#fff"></div>
<div class="a" style="left:1343px;top:400px;width:31px;height:22px;background:#000;border-radius:2px 0 1px 0;font-size:12px;font-weight:bold;color:#fff;text-align:center;line-height:22px;letter-spacing:-0.8px;text-indent:-0.8px">482</div>
<div class="a" style="left:1343px;top:424px;width:31px;height:22px;background:#000;border-radius:2px 0 1px 0;font-size:12px;font-weight:bold;color:#fff;text-align:center;line-height:22px;letter-spacing:-0.8px;text-indent:-0.8px">432</div>
<div class="a" style="left:1343px;top:448px;width:31px;height:22px;background:#000;border-radius:2px 0 1px 0;font-size:12px;font-weight:bold;color:#fff;text-align:center;line-height:22px;letter-spacing:-0.8px;text-indent:-0.8px">382</div>
<div class="a" style="left:1343px;top:472px;width:31px;height:22px;background:#000;border-radius:2px 0 1px 0;font-size:12px;font-weight:bold;color:#fff;text-align:center;line-height:22px;letter-spacing:-0.8px;text-indent:-0.8px">332</div>
<div class="a" style="left:1343px;top:496px;width:31px;height:22px;background:#000;border-radius:2px 0 1px 0;font-size:12px;font-weight:bold;color:#fff;text-align:center;line-height:22px;letter-spacing:-0.8px;text-indent:-0.8px">282</div>
<div class="a" style="left:1343px;top:520px;width:31px;height:22px;background:#000;border-radius:2px 0 1px 0;font-size:12px;font-weight:bold;color:#fff;text-align:center;line-height:22px;letter-spacing:-0.8px;text-indent:-0.8px">232</div>
<div class="a" style="left:1343px;top:544px;width:31px;height:22px;background:#000;border-radius:2px 0 1px 0;font-size:12px;font-weight:bold;color:#fff;text-align:center;line-height:22px;letter-spacing:-0.8px;text-indent:-0.8px">182</div>
<div class="a" style="left:1343px;top:568px;width:31px;height:22px;background:#000;border-radius:2px 0 1px 0;font-size:12px;font-weight:bold;color:#fff;text-align:center;line-height:22px;letter-spacing:-0.8px;text-indent:-0.8px">132</div>
<div class="a" style="left:1385px;top:398px;width:37px;height:195px;background:#fff"></div>
<div class="a" style="left:1388px;top:400px;width:31px;height:22px;background:#000;border-radius:2px 0 1px 0;font-size:12px;font-weight:bold;color:#fff;text-align:center;line-height:22px;letter-spacing:-0.8px;text-indent:-0.8px">484</div>
<div class="a" style="left:1388px;top:424px;width:31px;height:22px;background:#000;border-radius:2px 0 1px 0;font-size:12px;font-weight:bold;color:#fff;text-align:center;line-height:22px;letter-spacing:-0.8px;text-indent:-0.8px">434</div>
<div class="a" style="left:1388px;top:448px;width:31px;height:22px;background:#000;border-radius:2px 0 1px 0;font-size:12px;font-weight:bold;color:#fff;text-align:center;line-height:22px;letter-spacing:-0.8px;text-indent:-0.8px">384</div>
<div class="a" style="left:1388px;top:472px;width:31px;height:22px;background:#000;border-radius:2px 0 1px 0;font-size:12px;font-weight:bold;color:#fff;text-align:center;line-height:22px;letter-spacing:-0.8px;text-indent:-0.8px">334</div>
<div class="a" style="left:1388px;top:496px;width:31px;height:22px;background:#000;border-radius:2px 0 1px 0;font-size:12px;font-weight:bold;color:#fff;text-align:center;line-height:22px;letter-spacing:-0.8px;text-indent:-0.8px">284</div>
<div class="a" style="left:1388px;top:520px;width:31px;height:22px;background:#000;border-radius:2px 0 1px 0;font-size:12px;font-weight:bold;color:#fff;text-align:center;line-height:22px;letter-spacing:-0.8px;text-indent:-0.8px">234</div>
<div class="a" style="left:1388px;top:544px;width:31px;height:22px;background:#000;border-radius:2px 0 1px 0;font-size:12px;font-weight:bold;color:#fff;text-align:center;line-height:22px;letter-spacing:-0.8px;text-indent:-0.8px">184</div>
<div class="a" style="left:1388px;top:568px;width:31px;height:22px;background:#000;border-radius:2px 0 1px 0;font-size:12px;font-weight:bold;color:#fff;text-align:center;line-height:22px;letter-spacing:-0.8px;text-indent:-0.8px">134</div>
<div class="a" style="left:1429px;top:398px;width:37px;height:147px;background:#fff"></div>
<div class="a" style="left:1432px;top:400px;width:31px;height:22px;background:#000;border-radius:2px 0 1px 0;font-size:12px;font-weight:bold;color:#fff;text-align:center;line-height:22px;letter-spacing:-0.8px;text-indent:-0.8px">486</div>
<div class="a" style="left:1432px;top:424px;width:31px;height:22px;background:#000;border-radius:2px 0 1px 0;font-size:12px;font-weight:bold;color:#fff;text-align:center;line-height:22px;letter-spacing:-0.8px;text-indent:-0.8px">436</div>
<div class="a" style="left:1432px;top:448px;width:31px;height:22px;background:#000;border-radius:2px 0 1px 0;font-size:12px;font-weight:bold;color:#fff;text-align:center;line-height:22px;letter-spacing:-0.8px;text-indent:-0.8px">386</div>
<div class="a" style="left:1432px;top:472px;width:31px;height:22px;background:#000;border-radius:2px 0 1px 0;font-size:12px;font-weight:bold;color:#fff;text-align:center;line-height:22px;letter-spacing:-0.8px;text-indent:-0.8px">336</div>
<div class="a" style="left:1432px;top:496px;width:31px;height:22px;background:#000;border-radius:2px 0 1px 0;font-size:12px;font-weight:bold;color:#fff;text-align:center;line-height:22px;letter-spacing:-0.8px;text-indent:-0.8px">286</div>
<div class="a" style="left:1432px;top:520px;width:31px;height:22px;background:#000;border-radius:2px 0 1px 0;font-size:12px;font-weight:bold;color:#fff;text-align:center;line-height:22px;letter-spacing:-0.8px;text-indent:-0.8px">236</div>
<div class="a" style="left:1473px;top:398px;width:37px;height:147px;background:#fff"></div>
<div class="a" style="left:1476px;top:400px;width:31px;height:22px;background:#000;border-radius:2px 0 1px 0;font-size:12px;font-weight:bold;color:#fff;text-align:center;line-height:22px;letter-spacing:-0.8px;text-indent:-0.8px">488</div>
<div class="a" style="left:1476px;top:424px;width:31px;height:22px;background:#000;border-radius:2px 0 1px 0;font-size:12px;font-weight:bold;color:#fff;text-align:center;line-height:22px;letter-spacing:-0.8px;text-indent:-0.8px">438</div>
<div class="a" style="left:1476px;top:448px;width:31px;height:22px;background:#000;border-radius:2px 0 1px 0;font-size:12px;font-weight:bold;color:#fff;text-align:center;line-height:22px;letter-spacing:-0.8px;text-indent:-0.8px">388</div>
<div class="a" style="left:1476px;top:472px;width:31px;height:22px;background:#000;border-radius:2px 0 1px 0;font-size:12px;font-weight:bold;color:#fff;text-align:center;line-height:22px;letter-spacing:-0.8px;text-indent:-0.8px">338</div>
<div class="a" style="left:1476px;top:496px;width:31px;height:22px;background:#000;border-radius:2px 0 1px 0;font-size:12px;font-weight:bold;color:#fff;text-align:center;line-height:22px;letter-spacing:-0.8px;text-indent:-0.8px">288</div>
<div class="a" style="left:1476px;top:520px;width:31px;height:22px;background:#000;border-radius:2px 0 1px 0;font-size:12px;font-weight:bold;color:#fff;text-align:center;line-height:22px;letter-spacing:-0.8px;text-indent:-0.8px">238</div>
<div class="a" style="left:1517px;top:398px;width:37px;height:195px;background:#fff"></div>
<div class="a" style="left:1520px;top:400px;width:31px;height:22px;background:#000;border-radius:2px 0 1px 0;font-size:12px;font-weight:bold;color:#fff;text-align:center;line-height:22px;letter-spacing:-0.8px;text-indent:-0.8px">490</div>
<div class="a" style="left:1520px;top:424px;width:31px;height:22px;background:#000;border-radius:2px 0 1px 0;font-size:12px;font-weight:bold;color:#fff;text-align:center;line-height:22px;letter-spacing:-0.8px;text-indent:-0.8px">440</div>
<div class="a" style="left:1520px;top:448px;width:31px;height:22px;background:#000;border-radius:2px 0 1px 0;font-size:12px;font-weight:bold;color:#fff;text-align:center;line-height:22px;letter-spacing:-0.8px;text-indent:-0.8px">390</div>
<div class="a" style="left:1520px;top:472px;width:31px;height:22px;background:#000;border-radius:2px 0 1px 0;font-size:12px;font-weight:bold;color:#fff;text-align:center;line-height:22px;letter-spacing:-0.8px;text-indent:-0.8px">340</div>
<div class="a" style="left:1520px;top:496px;width:31px;height:22px;background:#000;border-radius:2px 0 1px 0;font-size:12px;font-weight:bold;color:#fff;text-align:center;line-height:22px;letter-spacing:-0.8px;text-indent:-0.8px">290</div>
<div class="a" style="left:1520px;top:520px;width:31px;height:22px;background:#000;border-radius:2px 0 1px 0;font-size:12px;font-weight:bold;color:#fff;text-align:center;line-height:22px;letter-spacing:-0.8px;text-indent:-0.8px">240</div>
<div class="a" style="left:1520px;top:544px;width:31px;height:22px;background:#000;border-radius:2px 0 1px 0;font-size:12px;font-weight:bold;color:#fff;text-align:center;line-height:22px;letter-spacing:-0.8px;text-indent:-0.8px">190</div>
<div class="a" style="left:1520px;top:568px;width:31px;height:22px;background:#000;border-radius:2px 0 1px 0;font-size:12px;font-weight:bold;color:#fff;text-align:center;line-height:22px;letter-spacing:-0.8px;text-indent:-0.8px">140</div>
<div class="a" style="left:1562px;top:398px;width:37px;height:195px;background:#fff"></div>
<div class="a" style="left:1565px;top:400px;width:31px;height:22px;background:#000;border-radius:2px 0 1px 0;font-size:12px;font-weight:bold;color:#fff;text-align:center;line-height:22px;letter-spacing:-0.8px;text-indent:-0.8px">492</div>
<div class="a" style="left:1565px;top:424px;width:31px;height:22px;background:#000;border-radius:2px 0 1px 0;font-size:12px;font-weight:bold;color:#fff;text-align:center;line-height:22px;letter-spacing:-0.8px;text-indent:-0.8px">442</div>
<div class="a" style="left:1565px;top:448px;width:31px;height:22px;background:#000;border-radius:2px 0 1px 0;font-size:12px;font-weight:bold;color:#fff;text-align:center;line-height:22px;letter-spacing:-0.8px;text-indent:-0.8px">392</div>
<div class="a" style="left:1565px;top:472px;width:31px;height:22px;background:#000;border-radius:2px 0 1px 0;font-size:12px;font-weight:bold;color:#fff;text-align:center;line-height:22px;letter-spacing:-0.8px;text-indent:-0.8px">342</div>
<div class="a" style="left:1565px;top:496px;width:31px;height:22px;background:#000;border-radius:2px 0 1px 0;font-size:12px;font-weight:bold;color:#fff;text-align:center;line-height:22px;letter-spacing:-0.8px;text-indent:-0.8px">292</div>
<div class="a" style="left:1565px;top:520px;width:31px;height:22px;background:#000;border-radius:2px 0 1px 0;font-size:12px;font-weight:bold;color:#fff;text-align:center;line-height:22px;letter-spacing:-0.8px;text-indent:-0.8px">242</div>
<div class="a" style="left:1565px;top:544px;width:31px;height:22px;background:#000;border-radius:2px 0 1px 0;font-size:12px;font-weight:bold;color:#fff;text-align:center;line-height:22px;letter-spacing:-0.8px;text-indent:-0.8px">192</div>
<div class="a" style="left:1565px;top:568px;width:31px;height:22px;background:#000;border-radius:2px 0 1px 0;font-size:12px;font-weight:bold;color:#fff;text-align:center;line-height:22px;letter-spacing:-0.8px;text-indent:-0.8px">142</div>
<div class="a" style="left:1606px;top:398px;width:37px;height:195px;background:#fff"></div>
<div class="a" style="left:1609px;top:400px;width:31px;height:22px;background:#000;border-radius:2px 0 1px 0;font-size:12px;font-weight:bold;color:#fff;text-align:center;line-height:22px;letter-spacing:-0.8px;text-indent:-0.8px">494</div>
<div class="a" style="left:1609px;top:424px;width:31px;height:22px;background:#000;border-radius:2px 0 1px 0;font-size:12px;font-weight:bold;color:#fff;text-align:center;line-height:22px;letter-spacing:-0.8px;text-indent:-0.8px">444</div>
<div class="a" style="left:1609px;top:448px;width:31px;height:22px;background:#000;border-radius:2px 0 1px 0;font-size:12px;font-weight:bold;color:#fff;text-align:center;line-height:22px;letter-spacing:-0.8px;text-indent:-0.8px">394</div>
<div class="a" style="left:1609px;top:472px;width:31px;height:22px;background:#000;border-radius:2px 0 1px 0;font-size:12px;font-weight:bold;color:#fff;text-align:center;line-height:22px;letter-spacing:-0.8px;text-indent:-0.8px">344</div>
<div class="a" style="left:1609px;top:496px;width:31px;height:22px;background:#000;border-radius:2px 0 1px 0;font-size:12px;font-weight:bold;color:#fff;text-align:center;line-height:22px;letter-spacing:-0.8px;text-indent:-0.8px">294</div>
<div class="a" style="left:1609px;top:520px;width:31px;height:22px;background:#000;border-radius:2px 0 1px 0;font-size:12px;font-weight:bold;color:#fff;text-align:center;line-height:22px;letter-spacing:-0.8px;text-indent:-0.8px">244</div>
<div class="a" style="left:1609px;top:544px;width:31px;height:22px;background:#000;border-radius:2px 0 1px 0;font-size:12px;font-weight:bold;color:#fff;text-align:center;line-height:22px;letter-spacing:-0.8px;text-indent:-0.8px">194</div>
<div class="a" style="left:1609px;top:568px;width:31px;height:22px;background:#000;border-radius:2px 0 1px 0;font-size:12px;font-weight:bold;color:#fff;text-align:center;line-height:22px;letter-spacing:-0.8px;text-indent:-0.8px">144</div>
<div class="a" style="left:1650px;top:398px;width:37px;height:195px;background:#fff"></div>
<div class="a" style="left:1653px;top:400px;width:31px;height:22px;background:#000;border-radius:2px 0 1px 0;font-size:12px;font-weight:bold;color:#fff;text-align:center;line-height:22px;letter-spacing:-0.8px;text-indent:-0.8px">496</div>
<div class="a" style="left:1653px;top:424px;width:31px;height:22px;background:#000;border-radius:2px 0 1px 0;font-size:12px;font-weight:bold;color:#fff;text-align:center;line-height:22px;letter-spacing:-0.8px;text-indent:-0.8px">446</div>
<div class="a" style="left:1653px;top:448px;width:31px;height:22px;background:#000;border-radius:2px 0 1px 0;font-size:12px;font-weight:bold;color:#fff;text-align:center;line-height:22px;letter-spacing:-0.8px;text-indent:-0.8px">396</div>
<div class="a" style="left:1653px;top:472px;width:31px;height:22px;background:#000;border-radius:2px 0 1px 0;font-size:12px;font-weight:bold;color:#fff;text-align:center;line-height:22px;letter-spacing:-0.8px;text-indent:-0.8px">346</div>
<div class="a" style="left:1653px;top:496px;width:31px;height:22px;background:#000;border-radius:2px 0 1px 0;font-size:12px;font-weight:bold;color:#fff;text-align:center;line-height:22px;letter-spacing:-0.8px;text-indent:-0.8px">296</div>
<div class="a" style="left:1653px;top:520px;width:31px;height:22px;background:#000;border-radius:2px 0 1px 0;font-size:12px;font-weight:bold;color:#fff;text-align:center;line-height:22px;letter-spacing:-0.8px;text-indent:-0.8px">246</div>
<div class="a" style="left:1653px;top:544px;width:31px;height:22px;background:#000;border-radius:2px 0 1px 0;font-size:12px;font-weight:bold;color:#fff;text-align:center;line-height:22px;letter-spacing:-0.8px;text-indent:-0.8px">196</div>
<div class="a" style="left:1653px;top:568px;width:31px;height:22px;background:#000;border-radius:2px 0 1px 0;font-size:12px;font-weight:bold;color:#fff;text-align:center;line-height:22px;letter-spacing:-0.8px;text-indent:-0.8px">146</div>
<div class="a t" style="left:508px;top:612px;font-size:11px;color:#e6e6e6">Floor</div>
<div class="a" style="left:540px;top:605px;width:38px;height:30px;border:3px solid #fff;border-bottom:none"></div>
<div class="a" style="left:585px;top:605px;width:38px;height:30px;border:3px solid #fff;border-bottom:none"></div>
<div class="a" style="left:630px;top:605px;width:38px;height:30px;border:3px solid #fff;border-bottom:none"></div>
<div class="a" style="left:675px;top:605px;width:38px;height:30px;border:3px solid #fff;border-bottom:none"></div>
<div class="a" style="left:720px;top:605px;width:38px;height:30px;border:3px solid #fff;border-bottom:none"></div>
<div class="a" style="left:765px;top:605px;width:38px;height:30px;border:3px solid #fff;border-bottom:none"></div>
<div class="a" style="left:810px;top:605px;width:38px;height:30px;border:3px solid #fff;border-bottom:none"></div>
<div class="a" style="left:940px;top:605px;width:38px;height:30px;border:3px solid #fff;border-bottom:none"></div>
<div class="a" style="left:985px;top:605px;width:38px;height:30px;border:3px solid #fff;border-bottom:none"></div>
<div class="a" style="left:1030px;top:605px;width:38px;height:30px;border:3px solid #fff;border-bottom:none"></div>
<div class="a" style="left:1074px;top:605px;width:38px;height:30px;border:3px solid #fff;border-bottom:none"></div>
<div class="a" style="left:1119px;top:605px;width:38px;height:30px;border:3px solid #fff;border-bottom:none"></div>
<div class="a" style="left:1205px;top:605px;width:38px;height:30px;border:3px solid #fff;border-bottom:none"></div>
<div class="a" style="left:1250px;top:605px;width:38px;height:30px;border:3px solid #fff;border-bottom:none"></div>
<div class="a" style="left:1295px;top:605px;width:38px;height:30px;border:3px solid #fff;border-bottom:none"></div>
<div class="a" style="left:1340px;top:605px;width:38px;height:30px;border:3px solid #fff;border-bottom:none"></div>
<div class="a" style="left:1385px;top:605px;width:38px;height:30px;border:3px solid #fff;border-bottom:none"></div>
<div class="a" style="left:1515px;top:605px;width:38px;height:30px;border:3px solid #fff;border-bottom:none"></div>
<div class="a" style="left:1560px;top:605px;width:38px;height:30px;border:3px solid #fff;border-bottom:none"></div>
<div class="a" style="left:1605px;top:605px;width:38px;height:30px;border:3px solid #fff;border-bottom:none"></div>
<div class="a" style="left:1650px;top:605px;width:38px;height:30px;border:3px solid #fff;border-bottom:none"></div>
<div class="a" style="left:1695px;top:605px;width:38px;height:30px;border:3px solid #fff;border-bottom:none"></div>
<div class="a" style="left:1740px;top:605px;width:38px;height:30px;border:3px solid #fff;border-bottom:none"></div>
<div class="a" style="left:1785px;top:605px;width:38px;height:30px;border:3px solid #fff;border-bottom:none"></div>
<svg style="left:0;top:0" width="1920" height="1033"><rect x="856.5" y="553.2" width="2" height="2" fill="#fff"/><rect x="856.5" y="557.7" width="2" height="2" fill="#fff"/><rect x="856.5" y="562.3" width="2" height="2" fill="#fff"/><rect x="856.5" y="566.8" width="2" height="2" fill="#fff"/><rect x="856.5" y="571.3" width="2" height="2" fill="#fff"/><rect x="856.5" y="575.8" width="2" height="2" fill="#fff"/><rect x="856.5" y="580.4" width="2" height="2" fill="#fff"/><rect x="856.5" y="584.9" width="2" height="2" fill="#fff"/><rect x="856.5" y="589.4" width="2" height="2" fill="#fff"/><rect x="856.5" y="594.0" width="2" height="2" fill="#fff"/><rect x="856.5" y="598.5" width="2" height="2" fill="#fff"/><rect x="856.5" y="603.0" width="2" height="2" fill="#fff"/><rect x="856.5" y="607.5" width="2" height="2" fill="#fff"/><rect x="856.5" y="612.1" width="2" height="2" fill="#fff"/><rect x="856.5" y="616.6" width="2" height="2" fill="#fff"/><rect x="856.5" y="621.1" width="2" height="2" fill="#fff"/><rect x="856.5" y="625.6" width="2" height="2" fill="#fff"/><rect x="856.5" y="630.2" width="2" height="2" fill="#fff"/><rect x="856.5" y="634.7" width="2" height="2" fill="#fff"/><rect x="888.4" y="553.2" width="2" height="2" fill="#fff"/><rect x="888.4" y="557.7" width="2" height="2" fill="#fff"/><rect x="888.4" y="562.3" width="2" height="2" fill="#fff"/><rect x="888.4" y="566.8" width="2" height="2" fill="#fff"/><rect x="888.4" y="571.3" width="2" height="2" fill="#fff"/><rect x="888.4" y="575.8" width="2" height="2" fill="#fff"/><rect x="888.4" y="580.4" width="2" height="2" fill="#fff"/><rect x="888.4" y="584.9" width="2" height="2" fill="#fff"/><rect x="888.4" y="589.4" width="2" height="2" fill="#fff"/><rect x="888.4" y="594.0" width="2" height="2" fill="#fff"/><rect x="888.4" y="598.5" width="2" height="2" fill="#fff"/><rect x="888.4" y="603.0" width="2" height="2" fill="#fff"/><rect x="888.4" y="607.5" width="2" height="2" fill="#fff"/><rect x="888.4" y="612.1" width="2" height="2" fill="#fff"/><rect x="888.4" y="616.6" width="2" height="2" fill="#fff"/><rect x="888.4" y="621.1" width="2" height="2" fill="#fff"/><rect x="888.4" y="625.6" width="2" height="2" fill="#fff"/><rect x="888.4" y="630.2" width="2" height="2" fill="#fff"/><rect x="888.4" y="634.7" width="2" height="2" fill="#fff"/><rect x="860.8" y="553.2" width="2" height="2" fill="#fff"/><rect x="865.2" y="553.2" width="2" height="2" fill="#fff"/><rect x="878.8" y="553.2" width="2" height="2" fill="#fff"/><rect x="883.4" y="553.2" width="2" height="2" fill="#fff"/><path d="M873.0 555.6 L885 577.4 H876.6 V635 H868 V577.4 H861Z" fill="#fff"/><rect x="901.5" y="553.7" width="2" height="2" fill="#777"/><rect x="901.5" y="558.2" width="2" height="2" fill="#777"/><rect x="901.5" y="562.7" width="2" height="2" fill="#777"/><rect x="901.5" y="567.2" width="2" height="2" fill="#777"/><rect x="901.5" y="571.8" width="2" height="2" fill="#777"/><rect x="901.5" y="576.3" width="2" height="2" fill="#777"/><rect x="901.5" y="580.8" width="2" height="2" fill="#777"/><rect x="901.5" y="585.3" width="2" height="2" fill="#777"/><rect x="901.5" y="589.8" width="2" height="2" fill="#777"/><rect x="901.5" y="594.4" width="2" height="2" fill="#777"/><rect x="901.5" y="598.9" width="2" height="2" fill="#777"/><rect x="901.5" y="603.4" width="2" height="2" fill="#777"/><rect x="901.5" y="607.9" width="2" height="2" fill="#777"/><rect x="901.5" y="612.4" width="2" height="2" fill="#777"/><rect x="901.5" y="616.9" width="2" height="2" fill="#777"/><rect x="901.5" y="621.5" width="2" height="2" fill="#777"/><rect x="901.5" y="626.0" width="2" height="2" fill="#777"/><rect x="901.5" y="630.5" width="2" height="2" fill="#777"/><rect x="901.5" y="635.0" width="2" height="2" fill="#777"/><rect x="931.4" y="553.7" width="2" height="2" fill="#777"/><rect x="931.4" y="558.2" width="2" height="2" fill="#777"/><rect x="931.4" y="562.7" width="2" height="2" fill="#777"/><rect x="931.4" y="567.2" width="2" height="2" fill="#777"/><rect x="931.4" y="571.8" width="2" height="2" fill="#777"/><rect x="931.4" y="576.3" width="2" height="2" fill="#777"/><rect x="931.4" y="580.8" width="2" height="2" fill="#777"/><rect x="931.4" y="585.3" width="2" height="2" fill="#777"/><rect x="931.4" y="589.8" width="2" height="2" fill="#777"/><rect x="931.4" y="594.4" width="2" height="2" fill="#777"/><rect x="931.4" y="598.9" width="2" height="2" fill="#777"/><rect x="931.4" y="603.4" width="2" height="2" fill="#777"/><rect x="931.4" y="607.9" width="2" height="2" fill="#777"/><rect x="931.4" y="612.4" width="2" height="2" fill="#777"/><rect x="931.4" y="616.9" width="2" height="2" fill="#777"/><rect x="931.4" y="621.5" width="2" height="2" fill="#777"/><rect x="931.4" y="626.0" width="2" height="2" fill="#777"/><rect x="931.4" y="630.5" width="2" height="2" fill="#777"/><rect x="931.4" y="635.0" width="2" height="2" fill="#777"/><rect x="906.8" y="635.0" width="2" height="2" fill="#777"/><rect x="911.1" y="635.0" width="2" height="2" fill="#777"/><rect x="922.6" y="635.0" width="2" height="2" fill="#777"/><rect x="927.0" y="635.0" width="2" height="2" fill="#777"/><path d="M914 553.2 H922 V611.8 H929 L918.0 631.6 L907 611.8 H914Z" fill="#878787"/><rect x="1431.4" y="555.4" width="2" height="2" fill="#777"/><rect x="1431.4" y="559.9" width="2" height="2" fill="#777"/><rect x="1431.4" y="564.4" width="2" height="2" fill="#777"/><rect x="1431.4" y="568.8" width="2" height="2" fill="#777"/><rect x="1431.4" y="573.3" width="2" height="2" fill="#777"/><rect x="1431.4" y="577.8" width="2" height="2" fill="#777"/><rect x="1431.4" y="582.3" width="2" height="2" fill="#777"/><rect x="1431.4" y="586.7" width="2" height="2" fill="#777"/><rect x="1431.4" y="591.2" width="2" height="2" fill="#777"/><rect x="1431.4" y="595.7" width="2" height="2" fill="#777"/><rect x="1431.4" y="600.2" width="2" height="2" fill="#777"/><rect x="1431.4" y="604.7" width="2" height="2" fill="#777"/><rect x="1431.4" y="609.1" width="2" height="2" fill="#777"/><rect x="1431.4" y="613.6" width="2" height="2" fill="#777"/><rect x="1431.4" y="618.1" width="2" height="2" fill="#777"/><rect x="1431.4" y="622.6" width="2" height="2" fill="#777"/><rect x="1431.4" y="627.0" width="2" height="2" fill="#777"/><rect x="1431.4" y="631.5" width="2" height="2" fill="#777"/><rect x="1431.4" y="636.0" width="2" height="2" fill="#777"/><rect x="1462.6" y="555.4" width="2" height="2" fill="#777"/><rect x="1462.6" y="559.9" width="2" height="2" fill="#777"/><rect x="1462.6" y="564.4" width="2" height="2" fill="#777"/><rect x="1462.6" y="568.8" width="2" height="2" fill="#777"/><rect x="1462.6" y="573.3" width="2" height="2" fill="#777"/><rect x="1462.6" y="577.8" width="2" height="2" fill="#777"/><rect x="1462.6" y="582.3" width="2" height="2" fill="#777"/><rect x="1462.6" y="586.7" width="2" height="2" fill="#777"/><rect x="1462.6" y="591.2" width="2" height="2" fill="#777"/><rect x="1462.6" y="595.7" width="2" height="2" fill="#777"/><rect x="1462.6" y="600.2" width="2" height="2" fill="#777"/><rect x="1462.6" y="604.7" width="2" height="2" fill="#777"/><rect x="1462.6" y="609.1" width="2" height="2" fill="#777"/><rect x="1462.6" y="613.6" width="2" height="2" fill="#777"/><rect x="1462.6" y="618.1" width="2" height="2" fill="#777"/><rect x="1462.6" y="622.6" width="2" height="2" fill="#777"/><rect x="1462.6" y="627.0" width="2" height="2" fill="#777"/><rect x="1462.6" y="631.5" width="2" height="2" fill="#777"/><rect x="1462.6" y="636.0" width="2" height="2" fill="#777"/><rect x="1436.1" y="555.4" width="2" height="2" fill="#777"/><rect x="1441.0" y="555.4" width="2" height="2" fill="#777"/><rect x="1452.4" y="555.4" width="2" height="2" fill="#777"/><rect x="1457.0" y="555.4" width="2" height="2" fill="#777"/><path d="M1448.6 561 L1460 579.8 H1451.5 V637.4 H1443.7 V579.8 H1437.2Z" fill="#878787"/><rect x="1474.4" y="555.4" width="2" height="2" fill="#777"/><rect x="1474.4" y="560.0" width="2" height="2" fill="#777"/><rect x="1474.4" y="564.5" width="2" height="2" fill="#777"/><rect x="1474.4" y="569.1" width="2" height="2" fill="#777"/><rect x="1474.4" y="573.6" width="2" height="2" fill="#777"/><rect x="1474.4" y="578.2" width="2" height="2" fill="#777"/><rect x="1474.4" y="582.7" width="2" height="2" fill="#777"/><rect x="1474.4" y="587.3" width="2" height="2" fill="#777"/><rect x="1474.4" y="591.8" width="2" height="2" fill="#777"/><rect x="1474.4" y="596.4" width="2" height="2" fill="#777"/><rect x="1474.4" y="601.0" width="2" height="2" fill="#777"/><rect x="1474.4" y="605.5" width="2" height="2" fill="#777"/><rect x="1474.4" y="610.1" width="2" height="2" fill="#777"/><rect x="1474.4" y="614.6" width="2" height="2" fill="#777"/><rect x="1474.4" y="619.2" width="2" height="2" fill="#777"/><rect x="1474.4" y="623.7" width="2" height="2" fill="#777"/><rect x="1474.4" y="628.3" width="2" height="2" fill="#777"/><rect x="1474.4" y="632.8" width="2" height="2" fill="#777"/><rect x="1474.4" y="637.4" width="2" height="2" fill="#777"/><rect x="1504.5" y="555.4" width="2" height="2" fill="#777"/><rect x="1504.5" y="560.0" width="2" height="2" fill="#777"/><rect x="1504.5" y="564.5" width="2" height="2" fill="#777"/><rect x="1504.5" y="569.1" width="2" height="2" fill="#777"/><rect x="1504.5" y="573.6" width="2" height="2" fill="#777"/><rect x="1504.5" y="578.2" width="2" height="2" fill="#777"/><rect x="1504.5" y="582.7" width="2" height="2" fill="#777"/><rect x="1504.5" y="587.3" width="2" height="2" fill="#777"/><rect x="1504.5" y="591.8" width="2" height="2" fill="#777"/><rect x="1504.5" y="596.4" width="2" height="2" fill="#777"/><rect x="1504.5" y="601.0" width="2" height="2" fill="#777"/><rect x="1504.5" y="605.5" width="2" height="2" fill="#777"/><rect x="1504.5" y="610.1" width="2" height="2" fill="#777"/><rect x="1504.5" y="614.6" width="2" height="2" fill="#777"/><rect x="1504.5" y="619.2" width="2" height="2" fill="#777"/><rect x="1504.5" y="623.7" width="2" height="2" fill="#777"/><rect x="1504.5" y="628.3" width="2" height="2" fill="#777"/><rect x="1504.5" y="632.8" width="2" height="2" fill="#777"/><rect x="1504.5" y="637.4" width="2" height="2" fill="#777"/><rect x="1479.5" y="637.4" width="2" height="2" fill="#777"/><rect x="1484.0" y="637.4" width="2" height="2" fill="#777"/><rect x="1495.5" y="637.4" width="2" height="2" fill="#777"/><rect x="1499.8" y="637.4" width="2" height="2" fill="#777"/><path d="M1487.3 555.2 H1494.7 V614 H1502.3 L1491.15 633 L1480 614 H1487.3Z" fill="#878787"/></svg>
<div class="a" style="left:548px;top:679px;width:505px;height:18px;background:linear-gradient(#b6bbbe,#a6abae 40%,#7c8488);font-size:9.3px;font-weight:bold;color:#f4f4f4;text-align:center;line-height:18px;padding-top:1px">West Buffer Details</div>
<div class="a" style="left:1053px;top:679px;width:3px;height:107px;background:linear-gradient(90deg,#80888c,#c4c9cc 50%,#80888c)"></div>
<div class="a" style="left:548px;top:783px;width:505px;height:3px;background:linear-gradient(#80888c,#c4c9cc 50%,#80888c)"></div>
<div class="a" style="left:548px;top:697px;width:1px;height:86px;background:#8a9297"></div>
<div class="a t" style="left:613px;top:718px;font-size:16px;font-weight:bold;color:#fff;letter-spacing:-0.25px">STATUS :</div>
<div class="a t" style="left:690px;top:717px;font-size:16px;font-weight:bold;color:#fff;letter-spacing:-0.25px;color:#0aae0a">ACTIVE</div>
<div class="a t" style="left:561px;top:747px;font-size:16px;font-weight:bold;color:#fff;letter-spacing:-0.25px">WORK ORDER :</div>
<div class="a t" style="left:687px;top:747px;font-size:16px;font-weight:bold;color:#fff;letter-spacing:-0.25px">STORAGE</div>
<svg style="left:0;top:0" width="1920" height="1033"><defs><radialGradient id="hb3" gradientUnits="userSpaceOnUse" cx="813.7" cy="736.8" r="12"><stop offset="0" stop-color="#d8d8d8"/><stop offset="0.3" stop-color="#d8d8d8" stop-opacity="0.85"/><stop offset="1" stop-color="#888888" stop-opacity="0"/></radialGradient></defs><ellipse cx="819.75" cy="740.75" rx="20.049999999999955" ry="18.049999999999955" fill="#888888"/><ellipse cx="819.75" cy="740.75" rx="20.049999999999955" ry="18.049999999999955" fill="url(#hb3)"/></svg>
<div class="a t" style="left:885px;top:718px;font-size:16px;font-weight:bold;color:#fff;letter-spacing:-0.25px">601</div>
<div class="a t" style="left:919px;top:718px;font-size:16px;font-weight:bold;color:#fff;letter-spacing:-0.25px">: SOURCE</div>
<div class="a t" style="left:884px;top:749px;font-size:16px;font-weight:bold;color:#fff;letter-spacing:-0.25px">214</div>
<div class="a t" style="left:921px;top:748px;font-size:15px;font-weight:bold;color:#fff">: DESTINATION</div>
<div class="a" style="left:1104px;top:683px;width:159px;height:18px;background:linear-gradient(#b6bbbe,#a6abae 40%,#7c8488);font-size:9.3px;font-weight:bold;color:#f4f4f4;text-align:center;line-height:18px;padding-top:1px">Legend</div>
<div class="a" style="left:1263px;top:683px;width:3px;height:99px;background:linear-gradient(90deg,#80888c,#c4c9cc 50%,#80888c)"></div>
<div class="a" style="left:1104px;top:779px;width:159px;height:3px;background:linear-gradient(#80888c,#c4c9cc 50%,#80888c)"></div>
<div class="a" style="left:1114px;top:708px;width:30px;height:25px;border:3px solid #707070;background:#000"></div>
<div class="a" style="left:1114px;top:746px;width:30px;height:24px;border:3px solid #707070;background:#fff"></div>
<div class="a t" style="left:1167px;top:716px;font-size:11px;font-weight:bold;color:#fff">Empty</div>
<div class="a t" style="left:1171px;top:755px;font-size:11px;font-weight:bold;color:#fff">Full</div>
<div class="a" style="left:1311px;top:677px;width:505px;height:18px;background:linear-gradient(#b6bbbe,#a6abae 40%,#7c8488);font-size:9.3px;font-weight:bold;color:#f4f4f4;text-align:center;line-height:18px;padding-top:1px">East Buffer Details</div>
<div class="a" style="left:1816px;top:677px;width:3px;height:107px;background:linear-gradient(90deg,#80888c,#c4c9cc 50%,#80888c)"></div>
<div class="a" style="left:1311px;top:781px;width:505px;height:3px;background:linear-gradient(#80888c,#c4c9cc 50%,#80888c)"></div>
<div class="a t" style="left:1368px;top:714px;font-size:16px;font-weight:bold;color:#fff;letter-spacing:-0.25px">STATUS :</div>
<div class="a t" style="left:1452px;top:713px;font-size:16px;font-weight:bold;color:#fff;letter-spacing:-0.25px;color:#0aae0a">ACTIVE</div>
<div class="a t" style="left:1317px;top:743px;font-size:16px;font-weight:bold;color:#fff;letter-spacing:-0.25px">WORK ORDER :</div>
<div class="a t" style="left:1453px;top:743px;font-size:16px;font-weight:bold;color:#fff;letter-spacing:-0.25px">RETREIVAL</div>
<svg style="left:0;top:0" width="1920" height="1033"><defs><radialGradient id="hb4" gradientUnits="userSpaceOnUse" cx="1569.2" cy="730.8" r="11"><stop offset="0" stop-color="#f4f4f4"/><stop offset="0.3" stop-color="#f4f4f4" stop-opacity="0.85"/><stop offset="1" stop-color="#cbcbcb" stop-opacity="0"/></radialGradient></defs><ellipse cx="1574.75" cy="734.55" rx="19.34999999999991" ry="17.25" fill="#cbcbcb"/><ellipse cx="1574.75" cy="734.55" rx="19.34999999999991" ry="17.25" fill="url(#hb4)"/></svg>
<div class="a t" style="left:1657px;top:716px;font-size:16px;font-weight:bold;color:#fff;letter-spacing:-0.25px">212</div>
<div class="a t" style="left:1693px;top:715px;font-size:16px;font-weight:bold;color:#fff;letter-spacing:-0.25px">: SOURCE</div>
<div class="a t" style="left:1613px;top:743px;font-size:16px;font-weight:bold;color:#fff;letter-spacing:-0.25px">OUTFEED</div>
<div class="a t" style="left:1693px;top:743px;font-size:15px;font-weight:bold;color:#fff">: DESTINATION</div>
<div class="a" style="left:1835px;top:673px;width:37px;height:18px;background:#fff;border:1px solid #d0d0d0;font-size:9px;color:#333;text-align:right;padding-right:5px;line-height:15px">201</div>
<div class="a" style="left:1830px;top:700px;width:47px;height:18px;background:#f1f1f1;border:1px solid #d5d5d5;font-size:9.5px;font-weight:bold;color:#222;text-align:center;line-height:18px;padding-left:2px">Button</div>
<div class="a" style="left:447px;top:897px;width:1444px;height:24px;background:#dde1e4"></div>
<div class="a" style="left:447px;top:920px;width:1444px;height:1px;background:#c5cacf"></div>
<svg style="left:456px;top:900px" width="16" height="16"><path d="M2 8 C4.5 3.5 11.5 3.5 14 8 C11.5 12.5 4.5 12.5 2 8Z" fill="none" stroke="#56616c" stroke-width="1.6"/><circle cx="8" cy="8" r="1.8" fill="#e68a2e"/><path d="M1 4 V1 H4 M12 1 H15 V4 M15 12 V15 H12 M4 15 H1 V12" fill="none" stroke="#e68a2e" stroke-width="0.9"/></svg>
<div class="a" style="left:481px;top:897px;width:112px;height:24px;background:#f9f9f9"></div>
<div class="a" style="left:481px;top:916px;width:112px;height:3px;background:#4a9fe3"></div>
<svg style="left:486px;top:900px" width="16" height="16"><rect x="1.5" y="2.5" width="12" height="11" fill="#fff" stroke="#3b4650" stroke-width="1.2"/><rect x="1.5" y="2.5" width="12" height="2.5" fill="#3b4650"/><rect x="3" y="3" width="1.5" height="1" fill="#e68a2e"/><rect x="5" y="3" width="1.5" height="1" fill="#e68a2e"/></svg>
<div class="a t" style="left:507px;top:901px;font-size:13px;font-weight:bold;color:#2b2b2b">Operation</div>
<svg style="left:575px;top:900px" width="16" height="16"><path d="M4 4 L12 12 M12 4 L4 12" stroke="#222" stroke-width="1.3"/></svg>
<svg style="left:598px;top:900px" width="16" height="16"><rect x="1" y="6" width="4" height="4" fill="#3b4650"/><rect x="9.5" y="1.5" width="4" height="4" fill="none" stroke="#3b4650"/><rect x="9.5" y="10.5" width="4" height="4" fill="none" stroke="#3b4650"/><path d="M6 8 H8 M3 4 V2 H6 M3 12 V14 H6" stroke="#e68a2e" fill="none"/></svg>
<div class="a t" style="left:619px;top:901px;font-size:13px;font-weight:bold;color:#2b2b2b">Column</div>
<svg style="left:675px;top:900px" width="16" height="16"><rect x="1" y="6" width="4" height="4" fill="#3b4650"/><rect x="9.5" y="1.5" width="4" height="4" fill="none" stroke="#3b4650"/><rect x="9.5" y="10.5" width="4" height="4" fill="none" stroke="#3b4650"/><path d="M6 8 H8 M3 4 V2 H6 M3 12 V14 H6" stroke="#e68a2e" fill="none"/></svg>
<div class="a t" style="left:696px;top:901px;font-size:13px;font-weight:bold;color:#2b2b2b">Pocket</div>
<div class="a" style="left:1158px;top:923px;width:1px;height:4px;background:#c0c4c8"></div>
<div class="a" style="left:1160px;top:923px;width:1px;height:4px;background:#c0c4c8"></div>
<div class="a" style="left:1162px;top:923px;width:1px;height:4px;background:#c0c4c8"></div>
<div class="a" style="left:1164px;top:923px;width:1px;height:4px;background:#c0c4c8"></div>
<div class="a" style="left:1166px;top:923px;width:1px;height:4px;background:#c0c4c8"></div>
<div class="a" style="left:1168px;top:923px;width:1px;height:4px;background:#c0c4c8"></div>
<div class="a" style="left:1170px;top:923px;width:1px;height:4px;background:#c0c4c8"></div>
<div class="a" style="left:1172px;top:923px;width:1px;height:4px;background:#c0c4c8"></div>
<div class="a" style="left:1174px;top:923px;width:1px;height:4px;background:#c0c4c8"></div>
<div class="a" style="left:447px;top:927px;width:1444px;height:72px;background:#f9f9f9;border:1px solid #c5cacf"></div>
<div class="a" style="left:448px;top:928px;width:1442px;height:19px;background:#dde1e4"></div>
<div class="a t" style="left:451px;top:933px;font-size:11.5px;color:#2b2b2b;letter-spacing:-0.3px">Output Console</div>
<svg style="left:1837px;top:932px" width="12" height="12"><rect x="1" y="4" width="7" height="6" fill="none" stroke="#4f5c68" stroke-width="1.2"/><path d="M1 5.5 H8" stroke="#4f5c68" stroke-width="1.2"/><path d="M3.5 1.5 H10.5 V8.5" fill="none" stroke="#4f5c68"/></svg>
<div class="a" style="left:1857px;top:941px;width:8px;height:2px;background:#4f5c68"></div>
<svg style="left:1873px;top:932px" width="11" height="11"><path d="M0.5 0.5 L10.5 10.5 M10.5 0.5 L0.5 10.5" stroke="#4f5c68" stroke-width="1.3"/></svg>
<div class="a" style="left:448px;top:947px;width:1442px;height:33px;background:#fafafa;border-top:1px solid #c5cacf;border-bottom:1px solid #c5cacf"></div>
<svg style="left:455px;top:955px" width="16" height="16"><path d="M3 6 L5 4 L7 6 M3 11 L5 13 L7 11" fill="none" stroke="#4f5c68" stroke-width="1.2"/><rect x="8" y="5" width="6" height="5" fill="#4f5c68"/><path d="M9 5 V3 A2 2 0 0 1 13 3 V5" fill="none" stroke="#4f5c68"/></svg>
<svg style="left:482px;top:955px" width="16" height="16"><path d="M5 4 L9 1 L14 6 L9 10Z" fill="none" stroke="#4f5c68" stroke-width="1.3"/><path d="M5 4 L9 10 L7 11 L3 7Z" fill="#4f5c68"/><path d="M3 13 H12" stroke="#4f5c68" stroke-width="1.2"/></svg>
<div class="a" style="left:448px;top:981px;width:1442px;height:17px;background:#fff;border-bottom:1px solid #c5cacf"></div>
<div class="a" style="left:1876px;top:982px;width:12px;height:15px;background:#f7f7f7;border-left:1px solid #d8dbde"></div>
<svg style="left:1874px;top:981px" width="16" height="16"><path d="M5 6 L8 3 L11 6 M5 10 L8 13 L11 10" fill="none" stroke="#4f5c68" stroke-width="1.1"/></svg>
<div class="a" style="left:0px;top:1000px;width:1920px;height:1px;background:#c5cacf"></div>
<div class="a" style="left:0px;top:1001px;width:1920px;height:32px;background:#f9f9f9"></div>
<div class="a" style="left:0px;top:1032px;width:1920px;height:1px;background:#555"></div>
<div class="a" style="left:7px;top:1011px;width:6px;height:6px;background:#4f5c68"></div>
<div class="a" style="left:15px;top:1011px;width:6px;height:6px;background:#4f5c68"></div>
<div class="a" style="left:7px;top:1019px;width:6px;height:6px;background:#4f5c68"></div>
<div class="a" style="left:15px;top:1019px;width:6px;height:6px;background:#4f5c68"></div>
<div class="a t" style="left:50px;top:1011px;font-size:13px;color:#111;font-weight:bold;letter-spacing:-0.15px">Container</div>
<div class="a t" style="left:112px;top:1012px;font-size:12px;color:#111;font-family:Liberation Mono;letter-spacing:-0.45px">"Root Container"</div>
<div class="a" style="left:1741px;top:1003px;width:1px;height:27px;background:#c8ccd0"></div>
<div class="a" style="left:1770px;top:1003px;width:1px;height:27px;background:#c8ccd0"></div>
<div class="a" style="left:1804px;top:1003px;width:1px;height:27px;background:#c8ccd0"></div>
<div class="a" style="left:1894px;top:1003px;width:1px;height:27px;background:#c8ccd0"></div>
<div class="a t" style="left:1746px;top:1011px;font-size:13px;color:#333">(-,-)</div>
<div class="a t" style="left:1776px;top:1011px;font-size:13px;color:#333">75%</div>
<div class="a t" style="left:1810px;top:1011px;font-size:13px;color:#333">388 / 1024 mb</div>
<svg style="left:1899px;top:1008px" width="16" height="16"><path d="M1 4 H6 M1 8 H13 M1 12 H13" stroke="#4f5c68" stroke-width="1.6"/><path d="M8 5 L10 7 L14 2" fill="none" stroke="#22a45a" stroke-width="1.8"/></svg>
<div class="a" style="left:1891px;top:79px;width:1px;height:920px;background:#dde1e4"></div>
<div class="a" style="left:1919px;top:79px;width:1px;height:920px;background:#c5cacf"></div>
<div class="a" style="left:1894px;top:82px;width:23px;height:1px;background:#b8bdc1"></div>
<div class="a" style="left:1894px;top:87px;width:23px;height:1px;background:#b8bdc1"></div>
<div class="a" style="left:1900px;top:83px;width:1px;height:3px;background:#b8bdc1"></div>
<div class="a" style="left:1902px;top:83px;width:1px;height:3px;background:#b8bdc1"></div>
<div class="a" style="left:1904px;top:83px;width:1px;height:3px;background:#b8bdc1"></div>
<div class="a" style="left:1893px;top:89px;width:26px;height:28px;background:#dde5ec;border:1px solid #c5cdd4;border-radius:2px"></div>
<svg style="left:1897px;top:95px" width="16" height="16"><path d="M3 3 L13 7 L8 8 L7 13Z" fill="#4f5c68"/></svg>
<div class="a" style="left:1893px;top:119px;width:26px;height:1px;background:#b8bdc1"></div>
<svg style="left:1898px;top:129px" width="16" height="16"><path d="M2.5 2.5 H13.5 V10.5 L10.5 13.5 H2.5Z" fill="none" stroke="#4f5c68" stroke-width="1.2"/><rect x="7" y="11" width="3" height="3" fill="none" stroke="#4f5c68"/></svg>
<svg style="left:1898px;top:157px" width="16" height="16"><circle cx="8" cy="7" r="5.5" fill="none" stroke="#4f5c68" stroke-width="1.2"/><rect x="6.5" y="11" width="3" height="3" fill="#fff" stroke="#4f5c68"/></svg>
<svg style="left:1898px;top:185px" width="16" height="16"><path d="M8 1.5 L14 12.5 H2Z" fill="none" stroke="#4f5c68" stroke-width="1.2"/><rect x="6.5" y="10.5" width="3" height="3" fill="#fff" stroke="#4f5c68"/></svg>
<svg style="left:1898px;top:213px" width="16" height="16"><path d="M1.5 6 H8 V2.5 L14 8 L8 13.5 V10 H1.5Z" fill="none" stroke="#4f5c68" stroke-width="1.2"/></svg>
<svg style="left:1898px;top:240px" width="16" height="16"><path d="M2 14 L3 11 L11 3 L13 5 L5 13Z" fill="none" stroke="#4f5c68" stroke-width="1.2"/></svg>
<svg style="left:1898px;top:268px" width="16" height="16"><path d="M2 14 L5 7 L10 3 L13 6 L9 11Z" fill="#4f5c68"/></svg>
<svg style="left:1898px;top:301px" width="16" height="16"><path d="M4 12 L12 4" stroke="#4f5c68"/><rect x="1.5" y="10.5" width="4" height="4" fill="#fff" stroke="#4f5c68"/><rect x="10.5" y="1.5" width="4" height="4" fill="#fff" stroke="#4f5c68"/></svg>
<svg style="left:1898px;top:329px" width="16" height="16"><rect x="1.5" y="2.5" width="13" height="11" fill="none" stroke="#4f5c68" stroke-width="1.2"/><rect x="2" y="8" width="12" height="5" fill="#4f5c68"/><path d="M3 6h2v2h-2zM7 6h2v2h-2zM11 6h2v2h-2z" fill="#4f5c68"/></svg>
<svg style="left:1898px;top:357px" width="16" height="16"><path d="M2 14 L9 7 L11 9 L4 16Z" fill="none" stroke="#4f5c68" stroke-width="1.2"/><path d="M9 5 L12 2 L14 4 L11 7Z M8 4 L12 8" fill="#4f5c68" stroke="#4f5c68" stroke-width="1.3"/></svg>
<div class="a" style="left:1893px;top:295px;width:26px;height:1px;background:#b8bdc1"></div>
</body></html>
